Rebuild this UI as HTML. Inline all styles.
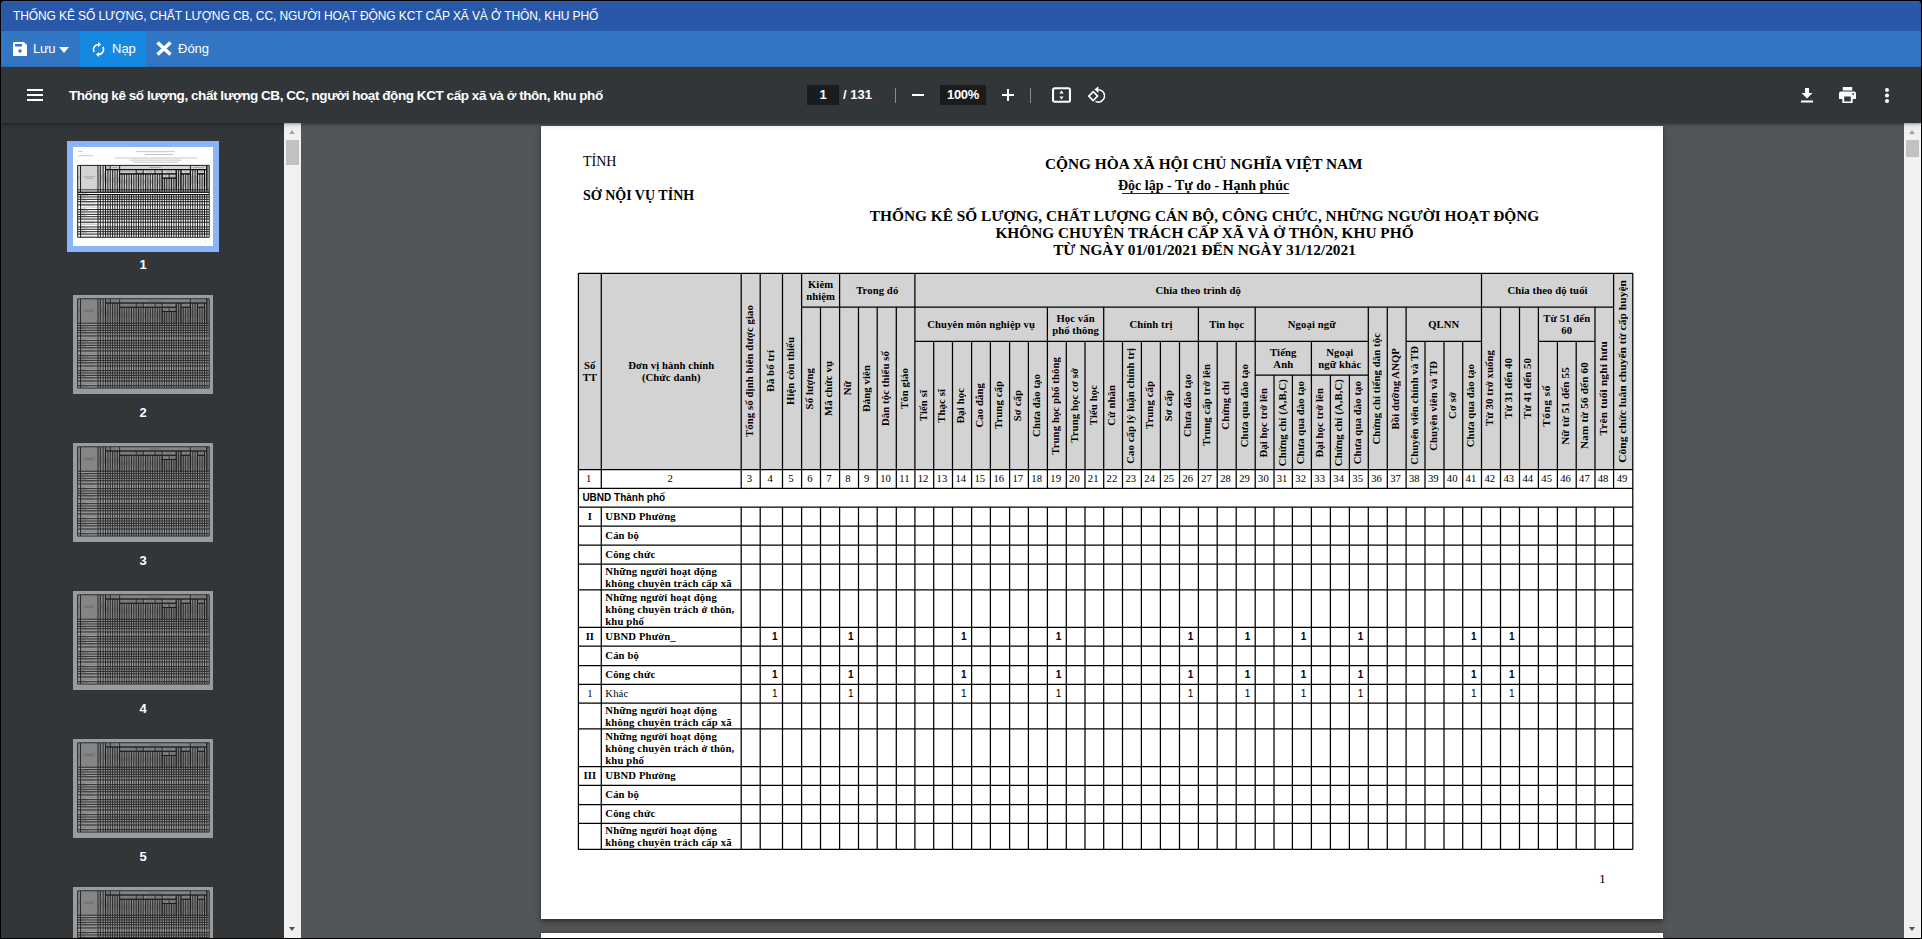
<!DOCTYPE html><html><head><meta charset="utf-8"><style>
*{box-sizing:border-box}
html,body{margin:0;padding:0}
body{width:1922px;height:939px;background:#000;position:relative;overflow:hidden;font-family:"Liberation Sans",sans-serif}
.abs{position:absolute}
#win{position:absolute;left:1px;top:1px;width:1920px;height:937px;border-radius:4px 4px 0 0;overflow:hidden;background:#525659}
#tbar{position:absolute;left:0;top:0;width:1920px;height:30px;background:#2a58a8;box-shadow:inset 1px 1px 0 #2c62b4;color:#fff;font-size:12px;letter-spacing:-0.1px;line-height:30px;padding-left:12px;white-space:nowrap}
#tools{position:absolute;left:0;top:30px;width:1920px;height:36px;background:#3276c4;color:#fff;font-size:13px}
#tools .btn{position:absolute;top:0;height:36px;line-height:36px;white-space:nowrap}
#vtb{position:absolute;left:0;top:66px;width:1920px;height:56px;background:#323639;color:#fff;z-index:5;box-shadow:0 1px 2px rgba(0,0,0,.3),0 2px 6px rgba(0,0,0,.15)}
#side{position:absolute;left:0;top:122px;width:283px;height:815px;background:#323639}
#main{position:absolute;left:300px;top:122px;width:1603px;height:815px;background:#525659;overflow:hidden}
.sb{position:absolute;top:122px;width:17px;height:815px;background:#f1f1f1;z-index:4}
.sb .up{position:absolute;left:5px;top:7px;width:0;height:0;border-left:3.5px solid transparent;border-right:3.5px solid transparent;border-bottom:4px solid #a3a3a3}
.sb .dn{position:absolute;left:5px;bottom:7px;width:0;height:0;border-left:3.5px solid transparent;border-right:3.5px solid transparent;border-top:4px solid #505050}
.sb .th{position:absolute;left:2px;width:13px;background:#c1c1c1}
.page{position:absolute;background:#fff;overflow:hidden}
.grid{position:absolute;left:0;top:0}
.hc{position:absolute;display:flex;align-items:center;justify-content:center;text-align:center;font-family:"Liberation Serif",serif;font-weight:bold;font-size:10.67px;line-height:12px;color:#000;letter-spacing:.1px}
.rot{writing-mode:vertical-rl;transform:rotate(180deg);white-space:nowrap;position:relative;left:-1.7px;letter-spacing:.12px}
.nc{position:absolute;display:flex;align-items:center;justify-content:center;font-family:"Liberation Serif",serif;font-size:10.67px;color:#000}
.rs{position:absolute;display:flex;align-items:center;font-family:"Liberation Sans",sans-serif;font-weight:bold;font-size:10px;color:#000;white-space:nowrap}
.rn{position:absolute;display:flex;align-items:center;justify-content:center;font-family:"Liberation Serif",serif;font-size:10.67px;color:#000}
.rl{position:absolute;display:flex;align-items:center;font-family:"Liberation Serif",serif;font-size:10.67px;line-height:12px;color:#000;white-space:nowrap;letter-spacing:.15px}
.rb{font-weight:bold}
.on,.onr{position:absolute;display:flex;align-items:center;justify-content:flex-end;padding-right:5px;font-family:"Liberation Sans",sans-serif;font-size:10px;color:#000}
.on{font-weight:bold}
.pt{position:absolute;font-family:"Liberation Serif",serif;color:#000;white-space:nowrap;line-height:1}
.pt.b{font-weight:bold}
.thumb{position:absolute;overflow:hidden;background:#fff}
.thumb .inner{position:absolute;left:0;top:0;width:1122px;height:793px;transform-origin:0 0}
.tlabel{position:absolute;width:40px;text-align:center;color:#fff;font-size:13px;font-weight:bold}
</style></head><body><div id="win"><div id="tbar">THỐNG KÊ SỐ LƯỢNG, CHẤT LƯỢNG CB, CC, NGƯỜI HOẠT ĐỘNG KCT CẤP XÃ VÀ Ở THÔN, KHU PHỐ</div><div id="tools"><div class="btn" style="left:12px"><svg width="14" height="14" style="position:absolute;left:0;top:11px" viewBox="0 0 14 14"><path d="M1 0h10l3 3v10a1 1 0 0 1-1 1H1a1 1 0 0 1-1-1V1a1 1 0 0 1 1-1z" fill="#fff"/><rect x="2" y="2" width="7" height="2.5" fill="#3276c4"/><circle cx="7" cy="9" r="1.8" fill="#3276c4"/></svg><span style="position:absolute;left:20px;letter-spacing:-0.3px">Lưu</span><svg width="10" height="6" style="position:absolute;left:46px;top:16px" viewBox="0 0 10 6"><path d="M0 0h10L5 6z" fill="#fff"/></svg></div><div class="btn" style="left:79px;width:66px;background:#1589e0"></div><div class="btn" style="left:91px"><svg width="13" height="15" style="position:absolute;left:0;top:11px" viewBox="0 0 13 15"><path d="M6.5 2.5a5 5 0 0 0-4.3 7.5M6.5 12.5a5 5 0 0 0 4.3-7.5" stroke="#fff" stroke-width="1.6" fill="none"/><path d="M6 0l3 2.5-3 2.5z M7 10l-3 2.5 3 2.5z" fill="#fff"/></svg><span style="position:absolute;left:20px">Nạp</span></div><div class="btn" style="left:155px"><svg width="16" height="15" style="position:absolute;left:0;top:10px" viewBox="0 0 16 15"><path d="M1.5 1.5l13 12M14.5 1.5l-13 12" stroke="#fff" stroke-width="3.6"/></svg><span style="position:absolute;left:22px">Đóng</span></div></div><div id="vtb"><svg class="abs" style="left:26px;top:21px" width="16" height="14" viewBox="0 0 16 14"><rect x="0" y="1" width="16" height="2" fill="#fff"/><rect x="0" y="6" width="16" height="2" fill="#fff"/><rect x="0" y="11" width="16" height="2" fill="#fff"/></svg><div class="abs" style="left:68px;top:0;height:57px;line-height:57px;font-size:13.5px;font-weight:bold;letter-spacing:-0.44px;white-space:nowrap">Thống kê số lượng, chất lượng CB, CC, người hoạt động KCT cấp xã và ở thôn, khu phố</div><div class="abs" style="left:806px;top:18px;width:32px;height:20px;background:#191b1c;text-align:center;line-height:20px;font-size:13px;font-weight:bold">1</div><div class="abs" style="left:842px;top:18px;height:20px;line-height:20px;font-size:13px;font-weight:bold">/ 131</div><div class="abs" style="left:894px;top:21px;width:1px;height:15px;background:#8a8d8f"></div><div class="abs" style="left:911px;top:27px;width:12px;height:2px;background:#fff"></div><div class="abs" style="left:939px;top:18px;width:46px;height:20px;background:#191b1c;text-align:center;line-height:20px;font-size:13px;font-weight:bold;letter-spacing:-0.3px">100%</div><div class="abs" style="left:1001px;top:27px;width:12px;height:2px;background:#fff"></div><div class="abs" style="left:1006px;top:22px;width:2px;height:12px;background:#fff"></div><div class="abs" style="left:1029px;top:21px;width:1px;height:15px;background:#8a8d8f"></div><svg class="abs" style="left:1050.5px;top:20px" width="19" height="16" viewBox="0 0 19 16"><rect x="1.05" y="1.2" width="16.9" height="13.6" rx="1.6" stroke="#fff" stroke-width="2.1" fill="none"/><path d="M9.5 3.6l2.2 2.9h-4.4z M9.5 12.4l2.2-2.9h-4.4z" fill="#fff"/></svg><svg class="abs" style="left:1087px;top:18.5px" width="20" height="19" viewBox="0 -0.5 20 19"><path d="M0.8 9.6L5.2 5.2L9.6 9.6L5.2 14Z" stroke="#fff" stroke-width="1.6" fill="none"/><path d="M10.3 3.2A6.2 6.2 0 1 1 7.5 14.9" stroke="#fff" stroke-width="1.6" fill="none"/><path d="M6.4 3.1L10.4 -0.2V6.4Z" fill="#fff"/></svg><svg class="abs" style="left:1799px;top:20px" width="14" height="16" viewBox="0 0 14 16"><path d="M5 1h4v5h3.5L7 11.5 1.5 6H5z" fill="#fff"/><rect x="1" y="13.5" width="12" height="2" fill="#fff"/></svg><svg class="abs" style="left:1838px;top:20px" width="17" height="16" viewBox="0 0 18 16" preserveAspectRatio="none"><rect x="4" y="0" width="10" height="3.5" fill="#fff"/><path d="M2 4.5h14a2 2 0 0 1 2 2V12h-3.5v4h-11v-4H0V6.5a2 2 0 0 1 2-2z" fill="#fff"/><rect x="5.5" y="9.5" width="7" height="5" fill="#323639"/><circle cx="15" cy="7" r="1" fill="#323639"/></svg><svg class="abs" style="left:1882px;top:20px" width="8" height="17" viewBox="0 0 8 17"><circle cx="4" cy="3" r="2" fill="#fff"/><circle cx="4" cy="8.5" r="2" fill="#fff"/><circle cx="4" cy="14" r="2" fill="#fff"/></svg></div><div id="side"><svg width="0" height="0" style="position:absolute"><defs><g id="tp1"><rect x="37.40" y="147.30" width="1054.40" height="196.30" fill="#d3d3d3"/><path d="M37.40 147.30L60.30 147.30M37.40 343.60L60.30 343.60M37.40 147.30L37.40 343.60M60.30 147.30L60.30 343.60M60.30 147.30L200.20 147.30M60.30 343.60L200.20 343.60M200.20 147.30L200.20 343.60M200.20 147.30L219.20 147.30M200.20 343.60L219.20 343.60M219.20 147.30L219.20 343.60M219.20 147.30L241.50 147.30M219.20 343.60L241.50 343.60M241.50 147.30L241.50 343.60M241.50 147.30L260.60 147.30M241.50 343.60L260.60 343.60M260.60 147.30L260.60 343.60M260.60 147.30L298.60 147.30M260.60 181.20L298.60 181.20M260.60 147.30L260.60 181.20M298.60 147.30L298.60 181.20M298.60 147.30L373.90 147.30M298.60 181.20L373.90 181.20M373.90 147.30L373.90 181.20M373.90 147.30L940.50 147.30M373.90 181.20L940.50 181.20M940.50 147.30L940.50 181.20M940.50 147.30L1072.60 147.30M940.50 181.20L1072.60 181.20M1072.60 147.30L1072.60 181.20M1072.60 147.30L1091.80 147.30M1072.60 343.60L1091.80 343.60M1072.60 147.30L1072.60 343.60M1091.80 147.30L1091.80 343.60M260.60 181.20L279.50 181.20M260.60 343.60L279.50 343.60M260.60 181.20L260.60 343.60M279.50 181.20L279.50 343.60M279.50 181.20L298.60 181.20M279.50 343.60L298.60 343.60M298.60 181.20L298.60 343.60M298.60 181.20L317.50 181.20M298.60 343.60L317.50 343.60M317.50 181.20L317.50 343.60M317.50 181.20L336.20 181.20M317.50 343.60L336.20 343.60M336.20 181.20L336.20 343.60M336.20 181.20L355.30 181.20M336.20 343.60L355.30 343.60M355.30 181.20L355.30 343.60M355.30 181.20L373.90 181.20M355.30 343.60L373.90 343.60M373.90 181.20L373.90 343.60M373.90 181.20L506.40 181.20M373.90 215.30L506.40 215.30M373.90 181.20L373.90 215.30M506.40 181.20L506.40 215.30M506.40 181.20L562.70 181.20M506.40 215.30L562.70 215.30M562.70 181.20L562.70 215.30M562.70 181.20L657.40 181.20M562.70 215.30L657.40 215.30M657.40 181.20L657.40 215.30M657.40 181.20L714.20 181.20M657.40 215.30L714.20 215.30M714.20 181.20L714.20 215.30M714.20 181.20L827.30 181.20M714.20 215.30L827.30 215.30M827.30 181.20L827.30 215.30M827.30 181.20L846.30 181.20M827.30 343.60L846.30 343.60M827.30 181.20L827.30 343.60M846.30 181.20L846.30 343.60M846.30 181.20L865.10 181.20M846.30 343.60L865.10 343.60M865.10 181.20L865.10 343.60M865.10 181.20L940.50 181.20M865.10 215.30L940.50 215.30M865.10 181.20L865.10 215.30M940.50 181.20L940.50 215.30M940.50 181.20L959.50 181.20M940.50 343.60L959.50 343.60M940.50 181.20L940.50 343.60M959.50 181.20L959.50 343.60M959.50 181.20L978.50 181.20M959.50 343.60L978.50 343.60M978.50 181.20L978.50 343.60M978.50 181.20L997.40 181.20M978.50 343.60L997.40 343.60M997.40 181.20L997.40 343.60M997.40 181.20L1054.00 181.20M997.40 215.30L1054.00 215.30M997.40 181.20L997.40 215.30M1054.00 181.20L1054.00 215.30M1054.00 181.20L1072.60 181.20M1054.00 343.60L1072.60 343.60M1054.00 181.20L1054.00 343.60M1072.60 181.20L1072.60 343.60M373.90 215.30L392.70 215.30M373.90 343.60L392.70 343.60M373.90 215.30L373.90 343.60M392.70 215.30L392.70 343.60M392.70 215.30L411.50 215.30M392.70 343.60L411.50 343.60M411.50 215.30L411.50 343.60M411.50 215.30L430.60 215.30M411.50 343.60L430.60 343.60M430.60 215.30L430.60 343.60M430.60 215.30L449.40 215.30M430.60 343.60L449.40 343.60M449.40 215.30L449.40 343.60M449.40 215.30L468.60 215.30M449.40 343.60L468.60 343.60M468.60 215.30L468.60 343.60M468.60 215.30L487.40 215.30M468.60 343.60L487.40 343.60M487.40 215.30L487.40 343.60M487.40 215.30L506.40 215.30M487.40 343.60L506.40 343.60M506.40 215.30L506.40 343.60M506.40 215.30L525.30 215.30M506.40 343.60L525.30 343.60M525.30 215.30L525.30 343.60M525.30 215.30L544.00 215.30M525.30 343.60L544.00 343.60M544.00 215.30L544.00 343.60M544.00 215.30L562.70 215.30M544.00 343.60L562.70 343.60M562.70 215.30L562.70 343.60M562.70 215.30L581.50 215.30M562.70 343.60L581.50 343.60M581.50 215.30L581.50 343.60M581.50 215.30L600.40 215.30M581.50 343.60L600.40 343.60M600.40 215.30L600.40 343.60M600.40 215.30L619.40 215.30M600.40 343.60L619.40 343.60M619.40 215.30L619.40 343.60M619.40 215.30L638.50 215.30M619.40 343.60L638.50 343.60M638.50 215.30L638.50 343.60M638.50 215.30L657.40 215.30M638.50 343.60L657.40 343.60M657.40 215.30L657.40 343.60M657.40 215.30L676.20 215.30M657.40 343.60L676.20 343.60M676.20 215.30L676.20 343.60M676.20 215.30L695.20 215.30M676.20 343.60L695.20 343.60M695.20 215.30L695.20 343.60M695.20 215.30L714.20 215.30M695.20 343.60L714.20 343.60M714.20 215.30L714.20 343.60M865.10 215.30L884.00 215.30M865.10 343.60L884.00 343.60M865.10 215.30L865.10 343.60M884.00 215.30L884.00 343.60M884.00 215.30L903.00 215.30M884.00 343.60L903.00 343.60M903.00 215.30L903.00 343.60M903.00 215.30L921.70 215.30M903.00 343.60L921.70 343.60M921.70 215.30L921.70 343.60M921.70 215.30L940.50 215.30M921.70 343.60L940.50 343.60M940.50 215.30L940.50 343.60M997.40 215.30L1016.40 215.30M997.40 343.60L1016.40 343.60M997.40 215.30L997.40 343.60M1016.40 215.30L1016.40 343.60M1016.40 215.30L1035.20 215.30M1016.40 343.60L1035.20 343.60M1035.20 215.30L1035.20 343.60M1035.20 215.30L1054.00 215.30M1035.20 343.60L1054.00 343.60M1054.00 215.30L1054.00 343.60M714.20 215.30L770.40 215.30M714.20 249.10L770.40 249.10M714.20 215.30L714.20 249.10M770.40 215.30L770.40 249.10M770.40 215.30L827.30 215.30M770.40 249.10L827.30 249.10M827.30 215.30L827.30 249.10M714.20 249.10L733.00 249.10M714.20 343.60L733.00 343.60M714.20 249.10L714.20 343.60M733.00 249.10L733.00 343.60M733.00 249.10L751.40 249.10M733.00 343.60L751.40 343.60M751.40 249.10L751.40 343.60M751.40 249.10L770.40 249.10M751.40 343.60L770.40 343.60M770.40 249.10L770.40 343.60M770.40 249.10L789.40 249.10M770.40 343.60L789.40 343.60M789.40 249.10L789.40 343.60M789.40 249.10L808.40 249.10M789.40 343.60L808.40 343.60M808.40 249.10L808.40 343.60M808.40 249.10L827.30 249.10M808.40 343.60L827.30 343.60M827.30 249.10L827.30 343.60M37.40 362.30L60.30 362.30M37.40 343.60L37.40 362.30M60.30 343.60L60.30 362.30M60.30 362.30L200.20 362.30M200.20 343.60L200.20 362.30M200.20 362.30L219.20 362.30M219.20 343.60L219.20 362.30M219.20 362.30L241.50 362.30M241.50 343.60L241.50 362.30M241.50 362.30L260.60 362.30M260.60 343.60L260.60 362.30M260.60 362.30L279.50 362.30M279.50 343.60L279.50 362.30M279.50 362.30L298.60 362.30M298.60 343.60L298.60 362.30M298.60 362.30L317.50 362.30M317.50 343.60L317.50 362.30M317.50 362.30L336.20 362.30M336.20 343.60L336.20 362.30M336.20 362.30L355.30 362.30M355.30 343.60L355.30 362.30M355.30 362.30L373.90 362.30M373.90 343.60L373.90 362.30M373.90 362.30L392.70 362.30M392.70 343.60L392.70 362.30M392.70 362.30L411.50 362.30M411.50 343.60L411.50 362.30M411.50 362.30L430.60 362.30M430.60 343.60L430.60 362.30M430.60 362.30L449.40 362.30M449.40 343.60L449.40 362.30M449.40 362.30L468.60 362.30M468.60 343.60L468.60 362.30M468.60 362.30L487.40 362.30M487.40 343.60L487.40 362.30M487.40 362.30L506.40 362.30M506.40 343.60L506.40 362.30M506.40 362.30L525.30 362.30M525.30 343.60L525.30 362.30M525.30 362.30L544.00 362.30M544.00 343.60L544.00 362.30M544.00 362.30L562.70 362.30M562.70 343.60L562.70 362.30M562.70 362.30L581.50 362.30M581.50 343.60L581.50 362.30M581.50 362.30L600.40 362.30M600.40 343.60L600.40 362.30M600.40 362.30L619.40 362.30M619.40 343.60L619.40 362.30M619.40 362.30L638.50 362.30M638.50 343.60L638.50 362.30M638.50 362.30L657.40 362.30M657.40 343.60L657.40 362.30M657.40 362.30L676.20 362.30M676.20 343.60L676.20 362.30M676.20 362.30L695.20 362.30M695.20 343.60L695.20 362.30M695.20 362.30L714.20 362.30M714.20 343.60L714.20 362.30M714.20 362.30L733.00 362.30M733.00 343.60L733.00 362.30M733.00 362.30L751.40 362.30M751.40 343.60L751.40 362.30M751.40 362.30L770.40 362.30M770.40 343.60L770.40 362.30M770.40 362.30L789.40 362.30M789.40 343.60L789.40 362.30M789.40 362.30L808.40 362.30M808.40 343.60L808.40 362.30M808.40 362.30L827.30 362.30M827.30 343.60L827.30 362.30M827.30 362.30L846.30 362.30M846.30 343.60L846.30 362.30M846.30 362.30L865.10 362.30M865.10 343.60L865.10 362.30M865.10 362.30L884.00 362.30M884.00 343.60L884.00 362.30M884.00 362.30L903.00 362.30M903.00 343.60L903.00 362.30M903.00 362.30L921.70 362.30M921.70 343.60L921.70 362.30M921.70 362.30L940.50 362.30M940.50 343.60L940.50 362.30M940.50 362.30L959.50 362.30M959.50 343.60L959.50 362.30M959.50 362.30L978.50 362.30M978.50 343.60L978.50 362.30M978.50 362.30L997.40 362.30M997.40 343.60L997.40 362.30M997.40 362.30L1016.40 362.30M1016.40 343.60L1016.40 362.30M1016.40 362.30L1035.20 362.30M1035.20 343.60L1035.20 362.30M1035.20 362.30L1054.00 362.30M1054.00 343.60L1054.00 362.30M1054.00 362.30L1072.60 362.30M1072.60 343.60L1072.60 362.30M1072.60 362.30L1091.80 362.30M1091.80 343.60L1091.80 362.30M37.40 362.30L1091.80 362.30M37.40 381.10L1091.80 381.10M37.40 362.30L37.40 381.10M1091.80 362.30L1091.80 381.10M37.40 381.10L60.30 381.10M37.40 400.20L60.30 400.20M37.40 381.10L37.40 400.20M60.30 381.10L60.30 400.20M60.30 381.10L200.20 381.10M60.30 400.20L200.20 400.20M200.20 381.10L200.20 400.20M200.20 381.10L219.20 381.10M200.20 400.20L219.20 400.20M219.20 381.10L219.20 400.20M219.20 381.10L241.50 381.10M219.20 400.20L241.50 400.20M241.50 381.10L241.50 400.20M241.50 381.10L260.60 381.10M241.50 400.20L260.60 400.20M260.60 381.10L260.60 400.20M260.60 381.10L279.50 381.10M260.60 400.20L279.50 400.20M279.50 381.10L279.50 400.20M279.50 381.10L298.60 381.10M279.50 400.20L298.60 400.20M298.60 381.10L298.60 400.20M298.60 381.10L317.50 381.10M298.60 400.20L317.50 400.20M317.50 381.10L317.50 400.20M317.50 381.10L336.20 381.10M317.50 400.20L336.20 400.20M336.20 381.10L336.20 400.20M336.20 381.10L355.30 381.10M336.20 400.20L355.30 400.20M355.30 381.10L355.30 400.20M355.30 381.10L373.90 381.10M355.30 400.20L373.90 400.20M373.90 381.10L373.90 400.20M373.90 381.10L392.70 381.10M373.90 400.20L392.70 400.20M392.70 381.10L392.70 400.20M392.70 381.10L411.50 381.10M392.70 400.20L411.50 400.20M411.50 381.10L411.50 400.20M411.50 381.10L430.60 381.10M411.50 400.20L430.60 400.20M430.60 381.10L430.60 400.20M430.60 381.10L449.40 381.10M430.60 400.20L449.40 400.20M449.40 381.10L449.40 400.20M449.40 381.10L468.60 381.10M449.40 400.20L468.60 400.20M468.60 381.10L468.60 400.20M468.60 381.10L487.40 381.10M468.60 400.20L487.40 400.20M487.40 381.10L487.40 400.20M487.40 381.10L506.40 381.10M487.40 400.20L506.40 400.20M506.40 381.10L506.40 400.20M506.40 381.10L525.30 381.10M506.40 400.20L525.30 400.20M525.30 381.10L525.30 400.20M525.30 381.10L544.00 381.10M525.30 400.20L544.00 400.20M544.00 381.10L544.00 400.20M544.00 381.10L562.70 381.10M544.00 400.20L562.70 400.20M562.70 381.10L562.70 400.20M562.70 381.10L581.50 381.10M562.70 400.20L581.50 400.20M581.50 381.10L581.50 400.20M581.50 381.10L600.40 381.10M581.50 400.20L600.40 400.20M600.40 381.10L600.40 400.20M600.40 381.10L619.40 381.10M600.40 400.20L619.40 400.20M619.40 381.10L619.40 400.20M619.40 381.10L638.50 381.10M619.40 400.20L638.50 400.20M638.50 381.10L638.50 400.20M638.50 381.10L657.40 381.10M638.50 400.20L657.40 400.20M657.40 381.10L657.40 400.20M657.40 381.10L676.20 381.10M657.40 400.20L676.20 400.20M676.20 381.10L676.20 400.20M676.20 381.10L695.20 381.10M676.20 400.20L695.20 400.20M695.20 381.10L695.20 400.20M695.20 381.10L714.20 381.10M695.20 400.20L714.20 400.20M714.20 381.10L714.20 400.20M714.20 381.10L733.00 381.10M714.20 400.20L733.00 400.20M733.00 381.10L733.00 400.20M733.00 381.10L751.40 381.10M733.00 400.20L751.40 400.20M751.40 381.10L751.40 400.20M751.40 381.10L770.40 381.10M751.40 400.20L770.40 400.20M770.40 381.10L770.40 400.20M770.40 381.10L789.40 381.10M770.40 400.20L789.40 400.20M789.40 381.10L789.40 400.20M789.40 381.10L808.40 381.10M789.40 400.20L808.40 400.20M808.40 381.10L808.40 400.20M808.40 381.10L827.30 381.10M808.40 400.20L827.30 400.20M827.30 381.10L827.30 400.20M827.30 381.10L846.30 381.10M827.30 400.20L846.30 400.20M846.30 381.10L846.30 400.20M846.30 381.10L865.10 381.10M846.30 400.20L865.10 400.20M865.10 381.10L865.10 400.20M865.10 381.10L884.00 381.10M865.10 400.20L884.00 400.20M884.00 381.10L884.00 400.20M884.00 381.10L903.00 381.10M884.00 400.20L903.00 400.20M903.00 381.10L903.00 400.20M903.00 381.10L921.70 381.10M903.00 400.20L921.70 400.20M921.70 381.10L921.70 400.20M921.70 381.10L940.50 381.10M921.70 400.20L940.50 400.20M940.50 381.10L940.50 400.20M940.50 381.10L959.50 381.10M940.50 400.20L959.50 400.20M959.50 381.10L959.50 400.20M959.50 381.10L978.50 381.10M959.50 400.20L978.50 400.20M978.50 381.10L978.50 400.20M978.50 381.10L997.40 381.10M978.50 400.20L997.40 400.20M997.40 381.10L997.40 400.20M997.40 381.10L1016.40 381.10M997.40 400.20L1016.40 400.20M1016.40 381.10L1016.40 400.20M1016.40 381.10L1035.20 381.10M1016.40 400.20L1035.20 400.20M1035.20 381.10L1035.20 400.20M1035.20 381.10L1054.00 381.10M1035.20 400.20L1054.00 400.20M1054.00 381.10L1054.00 400.20M1054.00 381.10L1072.60 381.10M1054.00 400.20L1072.60 400.20M1072.60 381.10L1072.60 400.20M1072.60 381.10L1091.80 381.10M1072.60 400.20L1091.80 400.20M1091.80 381.10L1091.80 400.20M37.40 419.20L60.30 419.20M37.40 400.20L37.40 419.20M60.30 400.20L60.30 419.20M60.30 419.20L200.20 419.20M200.20 400.20L200.20 419.20M200.20 419.20L219.20 419.20M219.20 400.20L219.20 419.20M219.20 419.20L241.50 419.20M241.50 400.20L241.50 419.20M241.50 419.20L260.60 419.20M260.60 400.20L260.60 419.20M260.60 419.20L279.50 419.20M279.50 400.20L279.50 419.20M279.50 419.20L298.60 419.20M298.60 400.20L298.60 419.20M298.60 419.20L317.50 419.20M317.50 400.20L317.50 419.20M317.50 419.20L336.20 419.20M336.20 400.20L336.20 419.20M336.20 419.20L355.30 419.20M355.30 400.20L355.30 419.20M355.30 419.20L373.90 419.20M373.90 400.20L373.90 419.20M373.90 419.20L392.70 419.20M392.70 400.20L392.70 419.20M392.70 419.20L411.50 419.20M411.50 400.20L411.50 419.20M411.50 419.20L430.60 419.20M430.60 400.20L430.60 419.20M430.60 419.20L449.40 419.20M449.40 400.20L449.40 419.20M449.40 419.20L468.60 419.20M468.60 400.20L468.60 419.20M468.60 419.20L487.40 419.20M487.40 400.20L487.40 419.20M487.40 419.20L506.40 419.20M506.40 400.20L506.40 419.20M506.40 419.20L525.30 419.20M525.30 400.20L525.30 419.20M525.30 419.20L544.00 419.20M544.00 400.20L544.00 419.20M544.00 419.20L562.70 419.20M562.70 400.20L562.70 419.20M562.70 419.20L581.50 419.20M581.50 400.20L581.50 419.20M581.50 419.20L600.40 419.20M600.40 400.20L600.40 419.20M600.40 419.20L619.40 419.20M619.40 400.20L619.40 419.20M619.40 419.20L638.50 419.20M638.50 400.20L638.50 419.20M638.50 419.20L657.40 419.20M657.40 400.20L657.40 419.20M657.40 419.20L676.20 419.20M676.20 400.20L676.20 419.20M676.20 419.20L695.20 419.20M695.20 400.20L695.20 419.20M695.20 419.20L714.20 419.20M714.20 400.20L714.20 419.20M714.20 419.20L733.00 419.20M733.00 400.20L733.00 419.20M733.00 419.20L751.40 419.20M751.40 400.20L751.40 419.20M751.40 419.20L770.40 419.20M770.40 400.20L770.40 419.20M770.40 419.20L789.40 419.20M789.40 400.20L789.40 419.20M789.40 419.20L808.40 419.20M808.40 400.20L808.40 419.20M808.40 419.20L827.30 419.20M827.30 400.20L827.30 419.20M827.30 419.20L846.30 419.20M846.30 400.20L846.30 419.20M846.30 419.20L865.10 419.20M865.10 400.20L865.10 419.20M865.10 419.20L884.00 419.20M884.00 400.20L884.00 419.20M884.00 419.20L903.00 419.20M903.00 400.20L903.00 419.20M903.00 419.20L921.70 419.20M921.70 400.20L921.70 419.20M921.70 419.20L940.50 419.20M940.50 400.20L940.50 419.20M940.50 419.20L959.50 419.20M959.50 400.20L959.50 419.20M959.50 419.20L978.50 419.20M978.50 400.20L978.50 419.20M978.50 419.20L997.40 419.20M997.40 400.20L997.40 419.20M997.40 419.20L1016.40 419.20M1016.40 400.20L1016.40 419.20M1016.40 419.20L1035.20 419.20M1035.20 400.20L1035.20 419.20M1035.20 419.20L1054.00 419.20M1054.00 400.20L1054.00 419.20M1054.00 419.20L1072.60 419.20M1072.60 400.20L1072.60 419.20M1072.60 419.20L1091.80 419.20M1091.80 400.20L1091.80 419.20M37.40 438.00L60.30 438.00M37.40 419.20L37.40 438.00M60.30 419.20L60.30 438.00M60.30 438.00L200.20 438.00M200.20 419.20L200.20 438.00M200.20 438.00L219.20 438.00M219.20 419.20L219.20 438.00M219.20 438.00L241.50 438.00M241.50 419.20L241.50 438.00M241.50 438.00L260.60 438.00M260.60 419.20L260.60 438.00M260.60 438.00L279.50 438.00M279.50 419.20L279.50 438.00M279.50 438.00L298.60 438.00M298.60 419.20L298.60 438.00M298.60 438.00L317.50 438.00M317.50 419.20L317.50 438.00M317.50 438.00L336.20 438.00M336.20 419.20L336.20 438.00M336.20 438.00L355.30 438.00M355.30 419.20L355.30 438.00M355.30 438.00L373.90 438.00M373.90 419.20L373.90 438.00M373.90 438.00L392.70 438.00M392.70 419.20L392.70 438.00M392.70 438.00L411.50 438.00M411.50 419.20L411.50 438.00M411.50 438.00L430.60 438.00M430.60 419.20L430.60 438.00M430.60 438.00L449.40 438.00M449.40 419.20L449.40 438.00M449.40 438.00L468.60 438.00M468.60 419.20L468.60 438.00M468.60 438.00L487.40 438.00M487.40 419.20L487.40 438.00M487.40 438.00L506.40 438.00M506.40 419.20L506.40 438.00M506.40 438.00L525.30 438.00M525.30 419.20L525.30 438.00M525.30 438.00L544.00 438.00M544.00 419.20L544.00 438.00M544.00 438.00L562.70 438.00M562.70 419.20L562.70 438.00M562.70 438.00L581.50 438.00M581.50 419.20L581.50 438.00M581.50 438.00L600.40 438.00M600.40 419.20L600.40 438.00M600.40 438.00L619.40 438.00M619.40 419.20L619.40 438.00M619.40 438.00L638.50 438.00M638.50 419.20L638.50 438.00M638.50 438.00L657.40 438.00M657.40 419.20L657.40 438.00M657.40 438.00L676.20 438.00M676.20 419.20L676.20 438.00M676.20 438.00L695.20 438.00M695.20 419.20L695.20 438.00M695.20 438.00L714.20 438.00M714.20 419.20L714.20 438.00M714.20 438.00L733.00 438.00M733.00 419.20L733.00 438.00M733.00 438.00L751.40 438.00M751.40 419.20L751.40 438.00M751.40 438.00L770.40 438.00M770.40 419.20L770.40 438.00M770.40 438.00L789.40 438.00M789.40 419.20L789.40 438.00M789.40 438.00L808.40 438.00M808.40 419.20L808.40 438.00M808.40 438.00L827.30 438.00M827.30 419.20L827.30 438.00M827.30 438.00L846.30 438.00M846.30 419.20L846.30 438.00M846.30 438.00L865.10 438.00M865.10 419.20L865.10 438.00M865.10 438.00L884.00 438.00M884.00 419.20L884.00 438.00M884.00 438.00L903.00 438.00M903.00 419.20L903.00 438.00M903.00 438.00L921.70 438.00M921.70 419.20L921.70 438.00M921.70 438.00L940.50 438.00M940.50 419.20L940.50 438.00M940.50 438.00L959.50 438.00M959.50 419.20L959.50 438.00M959.50 438.00L978.50 438.00M978.50 419.20L978.50 438.00M978.50 438.00L997.40 438.00M997.40 419.20L997.40 438.00M997.40 438.00L1016.40 438.00M1016.40 419.20L1016.40 438.00M1016.40 438.00L1035.20 438.00M1035.20 419.20L1035.20 438.00M1035.20 438.00L1054.00 438.00M1054.00 419.20L1054.00 438.00M1054.00 438.00L1072.60 438.00M1072.60 419.20L1072.60 438.00M1072.60 438.00L1091.80 438.00M1091.80 419.20L1091.80 438.00M37.40 463.80L60.30 463.80M37.40 438.00L37.40 463.80M60.30 438.00L60.30 463.80M60.30 463.80L200.20 463.80M200.20 438.00L200.20 463.80M200.20 463.80L219.20 463.80M219.20 438.00L219.20 463.80M219.20 463.80L241.50 463.80M241.50 438.00L241.50 463.80M241.50 463.80L260.60 463.80M260.60 438.00L260.60 463.80M260.60 463.80L279.50 463.80M279.50 438.00L279.50 463.80M279.50 463.80L298.60 463.80M298.60 438.00L298.60 463.80M298.60 463.80L317.50 463.80M317.50 438.00L317.50 463.80M317.50 463.80L336.20 463.80M336.20 438.00L336.20 463.80M336.20 463.80L355.30 463.80M355.30 438.00L355.30 463.80M355.30 463.80L373.90 463.80M373.90 438.00L373.90 463.80M373.90 463.80L392.70 463.80M392.70 438.00L392.70 463.80M392.70 463.80L411.50 463.80M411.50 438.00L411.50 463.80M411.50 463.80L430.60 463.80M430.60 438.00L430.60 463.80M430.60 463.80L449.40 463.80M449.40 438.00L449.40 463.80M449.40 463.80L468.60 463.80M468.60 438.00L468.60 463.80M468.60 463.80L487.40 463.80M487.40 438.00L487.40 463.80M487.40 463.80L506.40 463.80M506.40 438.00L506.40 463.80M506.40 463.80L525.30 463.80M525.30 438.00L525.30 463.80M525.30 463.80L544.00 463.80M544.00 438.00L544.00 463.80M544.00 463.80L562.70 463.80M562.70 438.00L562.70 463.80M562.70 463.80L581.50 463.80M581.50 438.00L581.50 463.80M581.50 463.80L600.40 463.80M600.40 438.00L600.40 463.80M600.40 463.80L619.40 463.80M619.40 438.00L619.40 463.80M619.40 463.80L638.50 463.80M638.50 438.00L638.50 463.80M638.50 463.80L657.40 463.80M657.40 438.00L657.40 463.80M657.40 463.80L676.20 463.80M676.20 438.00L676.20 463.80M676.20 463.80L695.20 463.80M695.20 438.00L695.20 463.80M695.20 463.80L714.20 463.80M714.20 438.00L714.20 463.80M714.20 463.80L733.00 463.80M733.00 438.00L733.00 463.80M733.00 463.80L751.40 463.80M751.40 438.00L751.40 463.80M751.40 463.80L770.40 463.80M770.40 438.00L770.40 463.80M770.40 463.80L789.40 463.80M789.40 438.00L789.40 463.80M789.40 463.80L808.40 463.80M808.40 438.00L808.40 463.80M808.40 463.80L827.30 463.80M827.30 438.00L827.30 463.80M827.30 463.80L846.30 463.80M846.30 438.00L846.30 463.80M846.30 463.80L865.10 463.80M865.10 438.00L865.10 463.80M865.10 463.80L884.00 463.80M884.00 438.00L884.00 463.80M884.00 463.80L903.00 463.80M903.00 438.00L903.00 463.80M903.00 463.80L921.70 463.80M921.70 438.00L921.70 463.80M921.70 463.80L940.50 463.80M940.50 438.00L940.50 463.80M940.50 463.80L959.50 463.80M959.50 438.00L959.50 463.80M959.50 463.80L978.50 463.80M978.50 438.00L978.50 463.80M978.50 463.80L997.40 463.80M997.40 438.00L997.40 463.80M997.40 463.80L1016.40 463.80M1016.40 438.00L1016.40 463.80M1016.40 463.80L1035.20 463.80M1035.20 438.00L1035.20 463.80M1035.20 463.80L1054.00 463.80M1054.00 438.00L1054.00 463.80M1054.00 463.80L1072.60 463.80M1072.60 438.00L1072.60 463.80M1072.60 463.80L1091.80 463.80M1091.80 438.00L1091.80 463.80M37.40 501.40L60.30 501.40M37.40 463.80L37.40 501.40M60.30 463.80L60.30 501.40M60.30 501.40L200.20 501.40M200.20 463.80L200.20 501.40M200.20 501.40L219.20 501.40M219.20 463.80L219.20 501.40M219.20 501.40L241.50 501.40M241.50 463.80L241.50 501.40M241.50 501.40L260.60 501.40M260.60 463.80L260.60 501.40M260.60 501.40L279.50 501.40M279.50 463.80L279.50 501.40M279.50 501.40L298.60 501.40M298.60 463.80L298.60 501.40M298.60 501.40L317.50 501.40M317.50 463.80L317.50 501.40M317.50 501.40L336.20 501.40M336.20 463.80L336.20 501.40M336.20 501.40L355.30 501.40M355.30 463.80L355.30 501.40M355.30 501.40L373.90 501.40M373.90 463.80L373.90 501.40M373.90 501.40L392.70 501.40M392.70 463.80L392.70 501.40M392.70 501.40L411.50 501.40M411.50 463.80L411.50 501.40M411.50 501.40L430.60 501.40M430.60 463.80L430.60 501.40M430.60 501.40L449.40 501.40M449.40 463.80L449.40 501.40M449.40 501.40L468.60 501.40M468.60 463.80L468.60 501.40M468.60 501.40L487.40 501.40M487.40 463.80L487.40 501.40M487.40 501.40L506.40 501.40M506.40 463.80L506.40 501.40M506.40 501.40L525.30 501.40M525.30 463.80L525.30 501.40M525.30 501.40L544.00 501.40M544.00 463.80L544.00 501.40M544.00 501.40L562.70 501.40M562.70 463.80L562.70 501.40M562.70 501.40L581.50 501.40M581.50 463.80L581.50 501.40M581.50 501.40L600.40 501.40M600.40 463.80L600.40 501.40M600.40 501.40L619.40 501.40M619.40 463.80L619.40 501.40M619.40 501.40L638.50 501.40M638.50 463.80L638.50 501.40M638.50 501.40L657.40 501.40M657.40 463.80L657.40 501.40M657.40 501.40L676.20 501.40M676.20 463.80L676.20 501.40M676.20 501.40L695.20 501.40M695.20 463.80L695.20 501.40M695.20 501.40L714.20 501.40M714.20 463.80L714.20 501.40M714.20 501.40L733.00 501.40M733.00 463.80L733.00 501.40M733.00 501.40L751.40 501.40M751.40 463.80L751.40 501.40M751.40 501.40L770.40 501.40M770.40 463.80L770.40 501.40M770.40 501.40L789.40 501.40M789.40 463.80L789.40 501.40M789.40 501.40L808.40 501.40M808.40 463.80L808.40 501.40M808.40 501.40L827.30 501.40M827.30 463.80L827.30 501.40M827.30 501.40L846.30 501.40M846.30 463.80L846.30 501.40M846.30 501.40L865.10 501.40M865.10 463.80L865.10 501.40M865.10 501.40L884.00 501.40M884.00 463.80L884.00 501.40M884.00 501.40L903.00 501.40M903.00 463.80L903.00 501.40M903.00 501.40L921.70 501.40M921.70 463.80L921.70 501.40M921.70 501.40L940.50 501.40M940.50 463.80L940.50 501.40M940.50 501.40L959.50 501.40M959.50 463.80L959.50 501.40M959.50 501.40L978.50 501.40M978.50 463.80L978.50 501.40M978.50 501.40L997.40 501.40M997.40 463.80L997.40 501.40M997.40 501.40L1016.40 501.40M1016.40 463.80L1016.40 501.40M1016.40 501.40L1035.20 501.40M1035.20 463.80L1035.20 501.40M1035.20 501.40L1054.00 501.40M1054.00 463.80L1054.00 501.40M1054.00 501.40L1072.60 501.40M1072.60 463.80L1072.60 501.40M1072.60 501.40L1091.80 501.40M1091.80 463.80L1091.80 501.40M37.40 520.10L60.30 520.10M37.40 501.40L37.40 520.10M60.30 501.40L60.30 520.10M60.30 520.10L200.20 520.10M200.20 501.40L200.20 520.10M200.20 520.10L219.20 520.10M219.20 501.40L219.20 520.10M219.20 520.10L241.50 520.10M241.50 501.40L241.50 520.10M241.50 520.10L260.60 520.10M260.60 501.40L260.60 520.10M260.60 520.10L279.50 520.10M279.50 501.40L279.50 520.10M279.50 520.10L298.60 520.10M298.60 501.40L298.60 520.10M298.60 520.10L317.50 520.10M317.50 501.40L317.50 520.10M317.50 520.10L336.20 520.10M336.20 501.40L336.20 520.10M336.20 520.10L355.30 520.10M355.30 501.40L355.30 520.10M355.30 520.10L373.90 520.10M373.90 501.40L373.90 520.10M373.90 520.10L392.70 520.10M392.70 501.40L392.70 520.10M392.70 520.10L411.50 520.10M411.50 501.40L411.50 520.10M411.50 520.10L430.60 520.10M430.60 501.40L430.60 520.10M430.60 520.10L449.40 520.10M449.40 501.40L449.40 520.10M449.40 520.10L468.60 520.10M468.60 501.40L468.60 520.10M468.60 520.10L487.40 520.10M487.40 501.40L487.40 520.10M487.40 520.10L506.40 520.10M506.40 501.40L506.40 520.10M506.40 520.10L525.30 520.10M525.30 501.40L525.30 520.10M525.30 520.10L544.00 520.10M544.00 501.40L544.00 520.10M544.00 520.10L562.70 520.10M562.70 501.40L562.70 520.10M562.70 520.10L581.50 520.10M581.50 501.40L581.50 520.10M581.50 520.10L600.40 520.10M600.40 501.40L600.40 520.10M600.40 520.10L619.40 520.10M619.40 501.40L619.40 520.10M619.40 520.10L638.50 520.10M638.50 501.40L638.50 520.10M638.50 520.10L657.40 520.10M657.40 501.40L657.40 520.10M657.40 520.10L676.20 520.10M676.20 501.40L676.20 520.10M676.20 520.10L695.20 520.10M695.20 501.40L695.20 520.10M695.20 520.10L714.20 520.10M714.20 501.40L714.20 520.10M714.20 520.10L733.00 520.10M733.00 501.40L733.00 520.10M733.00 520.10L751.40 520.10M751.40 501.40L751.40 520.10M751.40 520.10L770.40 520.10M770.40 501.40L770.40 520.10M770.40 520.10L789.40 520.10M789.40 501.40L789.40 520.10M789.40 520.10L808.40 520.10M808.40 501.40L808.40 520.10M808.40 520.10L827.30 520.10M827.30 501.40L827.30 520.10M827.30 520.10L846.30 520.10M846.30 501.40L846.30 520.10M846.30 520.10L865.10 520.10M865.10 501.40L865.10 520.10M865.10 520.10L884.00 520.10M884.00 501.40L884.00 520.10M884.00 520.10L903.00 520.10M903.00 501.40L903.00 520.10M903.00 520.10L921.70 520.10M921.70 501.40L921.70 520.10M921.70 520.10L940.50 520.10M940.50 501.40L940.50 520.10M940.50 520.10L959.50 520.10M959.50 501.40L959.50 520.10M959.50 520.10L978.50 520.10M978.50 501.40L978.50 520.10M978.50 520.10L997.40 520.10M997.40 501.40L997.40 520.10M997.40 520.10L1016.40 520.10M1016.40 501.40L1016.40 520.10M1016.40 520.10L1035.20 520.10M1035.20 501.40L1035.20 520.10M1035.20 520.10L1054.00 520.10M1054.00 501.40L1054.00 520.10M1054.00 520.10L1072.60 520.10M1072.60 501.40L1072.60 520.10M1072.60 520.10L1091.80 520.10M1091.80 501.40L1091.80 520.10M37.40 539.60L60.30 539.60M37.40 520.10L37.40 539.60M60.30 520.10L60.30 539.60M60.30 539.60L200.20 539.60M200.20 520.10L200.20 539.60M200.20 539.60L219.20 539.60M219.20 520.10L219.20 539.60M219.20 539.60L241.50 539.60M241.50 520.10L241.50 539.60M241.50 539.60L260.60 539.60M260.60 520.10L260.60 539.60M260.60 539.60L279.50 539.60M279.50 520.10L279.50 539.60M279.50 539.60L298.60 539.60M298.60 520.10L298.60 539.60M298.60 539.60L317.50 539.60M317.50 520.10L317.50 539.60M317.50 539.60L336.20 539.60M336.20 520.10L336.20 539.60M336.20 539.60L355.30 539.60M355.30 520.10L355.30 539.60M355.30 539.60L373.90 539.60M373.90 520.10L373.90 539.60M373.90 539.60L392.70 539.60M392.70 520.10L392.70 539.60M392.70 539.60L411.50 539.60M411.50 520.10L411.50 539.60M411.50 539.60L430.60 539.60M430.60 520.10L430.60 539.60M430.60 539.60L449.40 539.60M449.40 520.10L449.40 539.60M449.40 539.60L468.60 539.60M468.60 520.10L468.60 539.60M468.60 539.60L487.40 539.60M487.40 520.10L487.40 539.60M487.40 539.60L506.40 539.60M506.40 520.10L506.40 539.60M506.40 539.60L525.30 539.60M525.30 520.10L525.30 539.60M525.30 539.60L544.00 539.60M544.00 520.10L544.00 539.60M544.00 539.60L562.70 539.60M562.70 520.10L562.70 539.60M562.70 539.60L581.50 539.60M581.50 520.10L581.50 539.60M581.50 539.60L600.40 539.60M600.40 520.10L600.40 539.60M600.40 539.60L619.40 539.60M619.40 520.10L619.40 539.60M619.40 539.60L638.50 539.60M638.50 520.10L638.50 539.60M638.50 539.60L657.40 539.60M657.40 520.10L657.40 539.60M657.40 539.60L676.20 539.60M676.20 520.10L676.20 539.60M676.20 539.60L695.20 539.60M695.20 520.10L695.20 539.60M695.20 539.60L714.20 539.60M714.20 520.10L714.20 539.60M714.20 539.60L733.00 539.60M733.00 520.10L733.00 539.60M733.00 539.60L751.40 539.60M751.40 520.10L751.40 539.60M751.40 539.60L770.40 539.60M770.40 520.10L770.40 539.60M770.40 539.60L789.40 539.60M789.40 520.10L789.40 539.60M789.40 539.60L808.40 539.60M808.40 520.10L808.40 539.60M808.40 539.60L827.30 539.60M827.30 520.10L827.30 539.60M827.30 539.60L846.30 539.60M846.30 520.10L846.30 539.60M846.30 539.60L865.10 539.60M865.10 520.10L865.10 539.60M865.10 539.60L884.00 539.60M884.00 520.10L884.00 539.60M884.00 539.60L903.00 539.60M903.00 520.10L903.00 539.60M903.00 539.60L921.70 539.60M921.70 520.10L921.70 539.60M921.70 539.60L940.50 539.60M940.50 520.10L940.50 539.60M940.50 539.60L959.50 539.60M959.50 520.10L959.50 539.60M959.50 539.60L978.50 539.60M978.50 520.10L978.50 539.60M978.50 539.60L997.40 539.60M997.40 520.10L997.40 539.60M997.40 539.60L1016.40 539.60M1016.40 520.10L1016.40 539.60M1016.40 539.60L1035.20 539.60M1035.20 520.10L1035.20 539.60M1035.20 539.60L1054.00 539.60M1054.00 520.10L1054.00 539.60M1054.00 539.60L1072.60 539.60M1072.60 520.10L1072.60 539.60M1072.60 539.60L1091.80 539.60M1091.80 520.10L1091.80 539.60M37.40 558.40L60.30 558.40M37.40 539.60L37.40 558.40M60.30 539.60L60.30 558.40M60.30 558.40L200.20 558.40M200.20 539.60L200.20 558.40M200.20 558.40L219.20 558.40M219.20 539.60L219.20 558.40M219.20 558.40L241.50 558.40M241.50 539.60L241.50 558.40M241.50 558.40L260.60 558.40M260.60 539.60L260.60 558.40M260.60 558.40L279.50 558.40M279.50 539.60L279.50 558.40M279.50 558.40L298.60 558.40M298.60 539.60L298.60 558.40M298.60 558.40L317.50 558.40M317.50 539.60L317.50 558.40M317.50 558.40L336.20 558.40M336.20 539.60L336.20 558.40M336.20 558.40L355.30 558.40M355.30 539.60L355.30 558.40M355.30 558.40L373.90 558.40M373.90 539.60L373.90 558.40M373.90 558.40L392.70 558.40M392.70 539.60L392.70 558.40M392.70 558.40L411.50 558.40M411.50 539.60L411.50 558.40M411.50 558.40L430.60 558.40M430.60 539.60L430.60 558.40M430.60 558.40L449.40 558.40M449.40 539.60L449.40 558.40M449.40 558.40L468.60 558.40M468.60 539.60L468.60 558.40M468.60 558.40L487.40 558.40M487.40 539.60L487.40 558.40M487.40 558.40L506.40 558.40M506.40 539.60L506.40 558.40M506.40 558.40L525.30 558.40M525.30 539.60L525.30 558.40M525.30 558.40L544.00 558.40M544.00 539.60L544.00 558.40M544.00 558.40L562.70 558.40M562.70 539.60L562.70 558.40M562.70 558.40L581.50 558.40M581.50 539.60L581.50 558.40M581.50 558.40L600.40 558.40M600.40 539.60L600.40 558.40M600.40 558.40L619.40 558.40M619.40 539.60L619.40 558.40M619.40 558.40L638.50 558.40M638.50 539.60L638.50 558.40M638.50 558.40L657.40 558.40M657.40 539.60L657.40 558.40M657.40 558.40L676.20 558.40M676.20 539.60L676.20 558.40M676.20 558.40L695.20 558.40M695.20 539.60L695.20 558.40M695.20 558.40L714.20 558.40M714.20 539.60L714.20 558.40M714.20 558.40L733.00 558.40M733.00 539.60L733.00 558.40M733.00 558.40L751.40 558.40M751.40 539.60L751.40 558.40M751.40 558.40L770.40 558.40M770.40 539.60L770.40 558.40M770.40 558.40L789.40 558.40M789.40 539.60L789.40 558.40M789.40 558.40L808.40 558.40M808.40 539.60L808.40 558.40M808.40 558.40L827.30 558.40M827.30 539.60L827.30 558.40M827.30 558.40L846.30 558.40M846.30 539.60L846.30 558.40M846.30 558.40L865.10 558.40M865.10 539.60L865.10 558.40M865.10 558.40L884.00 558.40M884.00 539.60L884.00 558.40M884.00 558.40L903.00 558.40M903.00 539.60L903.00 558.40M903.00 558.40L921.70 558.40M921.70 539.60L921.70 558.40M921.70 558.40L940.50 558.40M940.50 539.60L940.50 558.40M940.50 558.40L959.50 558.40M959.50 539.60L959.50 558.40M959.50 558.40L978.50 558.40M978.50 539.60L978.50 558.40M978.50 558.40L997.40 558.40M997.40 539.60L997.40 558.40M997.40 558.40L1016.40 558.40M1016.40 539.60L1016.40 558.40M1016.40 558.40L1035.20 558.40M1035.20 539.60L1035.20 558.40M1035.20 558.40L1054.00 558.40M1054.00 539.60L1054.00 558.40M1054.00 558.40L1072.60 558.40M1072.60 539.60L1072.60 558.40M1072.60 558.40L1091.80 558.40M1091.80 539.60L1091.80 558.40M37.40 577.00L60.30 577.00M37.40 558.40L37.40 577.00M60.30 558.40L60.30 577.00M60.30 577.00L200.20 577.00M200.20 558.40L200.20 577.00M200.20 577.00L219.20 577.00M219.20 558.40L219.20 577.00M219.20 577.00L241.50 577.00M241.50 558.40L241.50 577.00M241.50 577.00L260.60 577.00M260.60 558.40L260.60 577.00M260.60 577.00L279.50 577.00M279.50 558.40L279.50 577.00M279.50 577.00L298.60 577.00M298.60 558.40L298.60 577.00M298.60 577.00L317.50 577.00M317.50 558.40L317.50 577.00M317.50 577.00L336.20 577.00M336.20 558.40L336.20 577.00M336.20 577.00L355.30 577.00M355.30 558.40L355.30 577.00M355.30 577.00L373.90 577.00M373.90 558.40L373.90 577.00M373.90 577.00L392.70 577.00M392.70 558.40L392.70 577.00M392.70 577.00L411.50 577.00M411.50 558.40L411.50 577.00M411.50 577.00L430.60 577.00M430.60 558.40L430.60 577.00M430.60 577.00L449.40 577.00M449.40 558.40L449.40 577.00M449.40 577.00L468.60 577.00M468.60 558.40L468.60 577.00M468.60 577.00L487.40 577.00M487.40 558.40L487.40 577.00M487.40 577.00L506.40 577.00M506.40 558.40L506.40 577.00M506.40 577.00L525.30 577.00M525.30 558.40L525.30 577.00M525.30 577.00L544.00 577.00M544.00 558.40L544.00 577.00M544.00 577.00L562.70 577.00M562.70 558.40L562.70 577.00M562.70 577.00L581.50 577.00M581.50 558.40L581.50 577.00M581.50 577.00L600.40 577.00M600.40 558.40L600.40 577.00M600.40 577.00L619.40 577.00M619.40 558.40L619.40 577.00M619.40 577.00L638.50 577.00M638.50 558.40L638.50 577.00M638.50 577.00L657.40 577.00M657.40 558.40L657.40 577.00M657.40 577.00L676.20 577.00M676.20 558.40L676.20 577.00M676.20 577.00L695.20 577.00M695.20 558.40L695.20 577.00M695.20 577.00L714.20 577.00M714.20 558.40L714.20 577.00M714.20 577.00L733.00 577.00M733.00 558.40L733.00 577.00M733.00 577.00L751.40 577.00M751.40 558.40L751.40 577.00M751.40 577.00L770.40 577.00M770.40 558.40L770.40 577.00M770.40 577.00L789.40 577.00M789.40 558.40L789.40 577.00M789.40 577.00L808.40 577.00M808.40 558.40L808.40 577.00M808.40 577.00L827.30 577.00M827.30 558.40L827.30 577.00M827.30 577.00L846.30 577.00M846.30 558.40L846.30 577.00M846.30 577.00L865.10 577.00M865.10 558.40L865.10 577.00M865.10 577.00L884.00 577.00M884.00 558.40L884.00 577.00M884.00 577.00L903.00 577.00M903.00 558.40L903.00 577.00M903.00 577.00L921.70 577.00M921.70 558.40L921.70 577.00M921.70 577.00L940.50 577.00M940.50 558.40L940.50 577.00M940.50 577.00L959.50 577.00M959.50 558.40L959.50 577.00M959.50 577.00L978.50 577.00M978.50 558.40L978.50 577.00M978.50 577.00L997.40 577.00M997.40 558.40L997.40 577.00M997.40 577.00L1016.40 577.00M1016.40 558.40L1016.40 577.00M1016.40 577.00L1035.20 577.00M1035.20 558.40L1035.20 577.00M1035.20 577.00L1054.00 577.00M1054.00 558.40L1054.00 577.00M1054.00 577.00L1072.60 577.00M1072.60 558.40L1072.60 577.00M1072.60 577.00L1091.80 577.00M1091.80 558.40L1091.80 577.00M37.40 602.80L60.30 602.80M37.40 577.00L37.40 602.80M60.30 577.00L60.30 602.80M60.30 602.80L200.20 602.80M200.20 577.00L200.20 602.80M200.20 602.80L219.20 602.80M219.20 577.00L219.20 602.80M219.20 602.80L241.50 602.80M241.50 577.00L241.50 602.80M241.50 602.80L260.60 602.80M260.60 577.00L260.60 602.80M260.60 602.80L279.50 602.80M279.50 577.00L279.50 602.80M279.50 602.80L298.60 602.80M298.60 577.00L298.60 602.80M298.60 602.80L317.50 602.80M317.50 577.00L317.50 602.80M317.50 602.80L336.20 602.80M336.20 577.00L336.20 602.80M336.20 602.80L355.30 602.80M355.30 577.00L355.30 602.80M355.30 602.80L373.90 602.80M373.90 577.00L373.90 602.80M373.90 602.80L392.70 602.80M392.70 577.00L392.70 602.80M392.70 602.80L411.50 602.80M411.50 577.00L411.50 602.80M411.50 602.80L430.60 602.80M430.60 577.00L430.60 602.80M430.60 602.80L449.40 602.80M449.40 577.00L449.40 602.80M449.40 602.80L468.60 602.80M468.60 577.00L468.60 602.80M468.60 602.80L487.40 602.80M487.40 577.00L487.40 602.80M487.40 602.80L506.40 602.80M506.40 577.00L506.40 602.80M506.40 602.80L525.30 602.80M525.30 577.00L525.30 602.80M525.30 602.80L544.00 602.80M544.00 577.00L544.00 602.80M544.00 602.80L562.70 602.80M562.70 577.00L562.70 602.80M562.70 602.80L581.50 602.80M581.50 577.00L581.50 602.80M581.50 602.80L600.40 602.80M600.40 577.00L600.40 602.80M600.40 602.80L619.40 602.80M619.40 577.00L619.40 602.80M619.40 602.80L638.50 602.80M638.50 577.00L638.50 602.80M638.50 602.80L657.40 602.80M657.40 577.00L657.40 602.80M657.40 602.80L676.20 602.80M676.20 577.00L676.20 602.80M676.20 602.80L695.20 602.80M695.20 577.00L695.20 602.80M695.20 602.80L714.20 602.80M714.20 577.00L714.20 602.80M714.20 602.80L733.00 602.80M733.00 577.00L733.00 602.80M733.00 602.80L751.40 602.80M751.40 577.00L751.40 602.80M751.40 602.80L770.40 602.80M770.40 577.00L770.40 602.80M770.40 602.80L789.40 602.80M789.40 577.00L789.40 602.80M789.40 602.80L808.40 602.80M808.40 577.00L808.40 602.80M808.40 602.80L827.30 602.80M827.30 577.00L827.30 602.80M827.30 602.80L846.30 602.80M846.30 577.00L846.30 602.80M846.30 602.80L865.10 602.80M865.10 577.00L865.10 602.80M865.10 602.80L884.00 602.80M884.00 577.00L884.00 602.80M884.00 602.80L903.00 602.80M903.00 577.00L903.00 602.80M903.00 602.80L921.70 602.80M921.70 577.00L921.70 602.80M921.70 602.80L940.50 602.80M940.50 577.00L940.50 602.80M940.50 602.80L959.50 602.80M959.50 577.00L959.50 602.80M959.50 602.80L978.50 602.80M978.50 577.00L978.50 602.80M978.50 602.80L997.40 602.80M997.40 577.00L997.40 602.80M997.40 602.80L1016.40 602.80M1016.40 577.00L1016.40 602.80M1016.40 602.80L1035.20 602.80M1035.20 577.00L1035.20 602.80M1035.20 602.80L1054.00 602.80M1054.00 577.00L1054.00 602.80M1054.00 602.80L1072.60 602.80M1072.60 577.00L1072.60 602.80M1072.60 602.80L1091.80 602.80M1091.80 577.00L1091.80 602.80M37.40 640.60L60.30 640.60M37.40 602.80L37.40 640.60M60.30 602.80L60.30 640.60M60.30 640.60L200.20 640.60M200.20 602.80L200.20 640.60M200.20 640.60L219.20 640.60M219.20 602.80L219.20 640.60M219.20 640.60L241.50 640.60M241.50 602.80L241.50 640.60M241.50 640.60L260.60 640.60M260.60 602.80L260.60 640.60M260.60 640.60L279.50 640.60M279.50 602.80L279.50 640.60M279.50 640.60L298.60 640.60M298.60 602.80L298.60 640.60M298.60 640.60L317.50 640.60M317.50 602.80L317.50 640.60M317.50 640.60L336.20 640.60M336.20 602.80L336.20 640.60M336.20 640.60L355.30 640.60M355.30 602.80L355.30 640.60M355.30 640.60L373.90 640.60M373.90 602.80L373.90 640.60M373.90 640.60L392.70 640.60M392.70 602.80L392.70 640.60M392.70 640.60L411.50 640.60M411.50 602.80L411.50 640.60M411.50 640.60L430.60 640.60M430.60 602.80L430.60 640.60M430.60 640.60L449.40 640.60M449.40 602.80L449.40 640.60M449.40 640.60L468.60 640.60M468.60 602.80L468.60 640.60M468.60 640.60L487.40 640.60M487.40 602.80L487.40 640.60M487.40 640.60L506.40 640.60M506.40 602.80L506.40 640.60M506.40 640.60L525.30 640.60M525.30 602.80L525.30 640.60M525.30 640.60L544.00 640.60M544.00 602.80L544.00 640.60M544.00 640.60L562.70 640.60M562.70 602.80L562.70 640.60M562.70 640.60L581.50 640.60M581.50 602.80L581.50 640.60M581.50 640.60L600.40 640.60M600.40 602.80L600.40 640.60M600.40 640.60L619.40 640.60M619.40 602.80L619.40 640.60M619.40 640.60L638.50 640.60M638.50 602.80L638.50 640.60M638.50 640.60L657.40 640.60M657.40 602.80L657.40 640.60M657.40 640.60L676.20 640.60M676.20 602.80L676.20 640.60M676.20 640.60L695.20 640.60M695.20 602.80L695.20 640.60M695.20 640.60L714.20 640.60M714.20 602.80L714.20 640.60M714.20 640.60L733.00 640.60M733.00 602.80L733.00 640.60M733.00 640.60L751.40 640.60M751.40 602.80L751.40 640.60M751.40 640.60L770.40 640.60M770.40 602.80L770.40 640.60M770.40 640.60L789.40 640.60M789.40 602.80L789.40 640.60M789.40 640.60L808.40 640.60M808.40 602.80L808.40 640.60M808.40 640.60L827.30 640.60M827.30 602.80L827.30 640.60M827.30 640.60L846.30 640.60M846.30 602.80L846.30 640.60M846.30 640.60L865.10 640.60M865.10 602.80L865.10 640.60M865.10 640.60L884.00 640.60M884.00 602.80L884.00 640.60M884.00 640.60L903.00 640.60M903.00 602.80L903.00 640.60M903.00 640.60L921.70 640.60M921.70 602.80L921.70 640.60M921.70 640.60L940.50 640.60M940.50 602.80L940.50 640.60M940.50 640.60L959.50 640.60M959.50 602.80L959.50 640.60M959.50 640.60L978.50 640.60M978.50 602.80L978.50 640.60M978.50 640.60L997.40 640.60M997.40 602.80L997.40 640.60M997.40 640.60L1016.40 640.60M1016.40 602.80L1016.40 640.60M1016.40 640.60L1035.20 640.60M1035.20 602.80L1035.20 640.60M1035.20 640.60L1054.00 640.60M1054.00 602.80L1054.00 640.60M1054.00 640.60L1072.60 640.60M1072.60 602.80L1072.60 640.60M1072.60 640.60L1091.80 640.60M1091.80 602.80L1091.80 640.60M37.40 659.30L60.30 659.30M37.40 640.60L37.40 659.30M60.30 640.60L60.30 659.30M60.30 659.30L200.20 659.30M200.20 640.60L200.20 659.30M200.20 659.30L219.20 659.30M219.20 640.60L219.20 659.30M219.20 659.30L241.50 659.30M241.50 640.60L241.50 659.30M241.50 659.30L260.60 659.30M260.60 640.60L260.60 659.30M260.60 659.30L279.50 659.30M279.50 640.60L279.50 659.30M279.50 659.30L298.60 659.30M298.60 640.60L298.60 659.30M298.60 659.30L317.50 659.30M317.50 640.60L317.50 659.30M317.50 659.30L336.20 659.30M336.20 640.60L336.20 659.30M336.20 659.30L355.30 659.30M355.30 640.60L355.30 659.30M355.30 659.30L373.90 659.30M373.90 640.60L373.90 659.30M373.90 659.30L392.70 659.30M392.70 640.60L392.70 659.30M392.70 659.30L411.50 659.30M411.50 640.60L411.50 659.30M411.50 659.30L430.60 659.30M430.60 640.60L430.60 659.30M430.60 659.30L449.40 659.30M449.40 640.60L449.40 659.30M449.40 659.30L468.60 659.30M468.60 640.60L468.60 659.30M468.60 659.30L487.40 659.30M487.40 640.60L487.40 659.30M487.40 659.30L506.40 659.30M506.40 640.60L506.40 659.30M506.40 659.30L525.30 659.30M525.30 640.60L525.30 659.30M525.30 659.30L544.00 659.30M544.00 640.60L544.00 659.30M544.00 659.30L562.70 659.30M562.70 640.60L562.70 659.30M562.70 659.30L581.50 659.30M581.50 640.60L581.50 659.30M581.50 659.30L600.40 659.30M600.40 640.60L600.40 659.30M600.40 659.30L619.40 659.30M619.40 640.60L619.40 659.30M619.40 659.30L638.50 659.30M638.50 640.60L638.50 659.30M638.50 659.30L657.40 659.30M657.40 640.60L657.40 659.30M657.40 659.30L676.20 659.30M676.20 640.60L676.20 659.30M676.20 659.30L695.20 659.30M695.20 640.60L695.20 659.30M695.20 659.30L714.20 659.30M714.20 640.60L714.20 659.30M714.20 659.30L733.00 659.30M733.00 640.60L733.00 659.30M733.00 659.30L751.40 659.30M751.40 640.60L751.40 659.30M751.40 659.30L770.40 659.30M770.40 640.60L770.40 659.30M770.40 659.30L789.40 659.30M789.40 640.60L789.40 659.30M789.40 659.30L808.40 659.30M808.40 640.60L808.40 659.30M808.40 659.30L827.30 659.30M827.30 640.60L827.30 659.30M827.30 659.30L846.30 659.30M846.30 640.60L846.30 659.30M846.30 659.30L865.10 659.30M865.10 640.60L865.10 659.30M865.10 659.30L884.00 659.30M884.00 640.60L884.00 659.30M884.00 659.30L903.00 659.30M903.00 640.60L903.00 659.30M903.00 659.30L921.70 659.30M921.70 640.60L921.70 659.30M921.70 659.30L940.50 659.30M940.50 640.60L940.50 659.30M940.50 659.30L959.50 659.30M959.50 640.60L959.50 659.30M959.50 659.30L978.50 659.30M978.50 640.60L978.50 659.30M978.50 659.30L997.40 659.30M997.40 640.60L997.40 659.30M997.40 659.30L1016.40 659.30M1016.40 640.60L1016.40 659.30M1016.40 659.30L1035.20 659.30M1035.20 640.60L1035.20 659.30M1035.20 659.30L1054.00 659.30M1054.00 640.60L1054.00 659.30M1054.00 659.30L1072.60 659.30M1072.60 640.60L1072.60 659.30M1072.60 659.30L1091.80 659.30M1091.80 640.60L1091.80 659.30M37.40 678.50L60.30 678.50M37.40 659.30L37.40 678.50M60.30 659.30L60.30 678.50M60.30 678.50L200.20 678.50M200.20 659.30L200.20 678.50M200.20 678.50L219.20 678.50M219.20 659.30L219.20 678.50M219.20 678.50L241.50 678.50M241.50 659.30L241.50 678.50M241.50 678.50L260.60 678.50M260.60 659.30L260.60 678.50M260.60 678.50L279.50 678.50M279.50 659.30L279.50 678.50M279.50 678.50L298.60 678.50M298.60 659.30L298.60 678.50M298.60 678.50L317.50 678.50M317.50 659.30L317.50 678.50M317.50 678.50L336.20 678.50M336.20 659.30L336.20 678.50M336.20 678.50L355.30 678.50M355.30 659.30L355.30 678.50M355.30 678.50L373.90 678.50M373.90 659.30L373.90 678.50M373.90 678.50L392.70 678.50M392.70 659.30L392.70 678.50M392.70 678.50L411.50 678.50M411.50 659.30L411.50 678.50M411.50 678.50L430.60 678.50M430.60 659.30L430.60 678.50M430.60 678.50L449.40 678.50M449.40 659.30L449.40 678.50M449.40 678.50L468.60 678.50M468.60 659.30L468.60 678.50M468.60 678.50L487.40 678.50M487.40 659.30L487.40 678.50M487.40 678.50L506.40 678.50M506.40 659.30L506.40 678.50M506.40 678.50L525.30 678.50M525.30 659.30L525.30 678.50M525.30 678.50L544.00 678.50M544.00 659.30L544.00 678.50M544.00 678.50L562.70 678.50M562.70 659.30L562.70 678.50M562.70 678.50L581.50 678.50M581.50 659.30L581.50 678.50M581.50 678.50L600.40 678.50M600.40 659.30L600.40 678.50M600.40 678.50L619.40 678.50M619.40 659.30L619.40 678.50M619.40 678.50L638.50 678.50M638.50 659.30L638.50 678.50M638.50 678.50L657.40 678.50M657.40 659.30L657.40 678.50M657.40 678.50L676.20 678.50M676.20 659.30L676.20 678.50M676.20 678.50L695.20 678.50M695.20 659.30L695.20 678.50M695.20 678.50L714.20 678.50M714.20 659.30L714.20 678.50M714.20 678.50L733.00 678.50M733.00 659.30L733.00 678.50M733.00 678.50L751.40 678.50M751.40 659.30L751.40 678.50M751.40 678.50L770.40 678.50M770.40 659.30L770.40 678.50M770.40 678.50L789.40 678.50M789.40 659.30L789.40 678.50M789.40 678.50L808.40 678.50M808.40 659.30L808.40 678.50M808.40 678.50L827.30 678.50M827.30 659.30L827.30 678.50M827.30 678.50L846.30 678.50M846.30 659.30L846.30 678.50M846.30 678.50L865.10 678.50M865.10 659.30L865.10 678.50M865.10 678.50L884.00 678.50M884.00 659.30L884.00 678.50M884.00 678.50L903.00 678.50M903.00 659.30L903.00 678.50M903.00 678.50L921.70 678.50M921.70 659.30L921.70 678.50M921.70 678.50L940.50 678.50M940.50 659.30L940.50 678.50M940.50 678.50L959.50 678.50M959.50 659.30L959.50 678.50M959.50 678.50L978.50 678.50M978.50 659.30L978.50 678.50M978.50 678.50L997.40 678.50M997.40 659.30L997.40 678.50M997.40 678.50L1016.40 678.50M1016.40 659.30L1016.40 678.50M1016.40 678.50L1035.20 678.50M1035.20 659.30L1035.20 678.50M1035.20 678.50L1054.00 678.50M1054.00 659.30L1054.00 678.50M1054.00 678.50L1072.60 678.50M1072.60 659.30L1072.60 678.50M1072.60 678.50L1091.80 678.50M1091.80 659.30L1091.80 678.50M37.40 697.40L60.30 697.40M37.40 678.50L37.40 697.40M60.30 678.50L60.30 697.40M60.30 697.40L200.20 697.40M200.20 678.50L200.20 697.40M200.20 697.40L219.20 697.40M219.20 678.50L219.20 697.40M219.20 697.40L241.50 697.40M241.50 678.50L241.50 697.40M241.50 697.40L260.60 697.40M260.60 678.50L260.60 697.40M260.60 697.40L279.50 697.40M279.50 678.50L279.50 697.40M279.50 697.40L298.60 697.40M298.60 678.50L298.60 697.40M298.60 697.40L317.50 697.40M317.50 678.50L317.50 697.40M317.50 697.40L336.20 697.40M336.20 678.50L336.20 697.40M336.20 697.40L355.30 697.40M355.30 678.50L355.30 697.40M355.30 697.40L373.90 697.40M373.90 678.50L373.90 697.40M373.90 697.40L392.70 697.40M392.70 678.50L392.70 697.40M392.70 697.40L411.50 697.40M411.50 678.50L411.50 697.40M411.50 697.40L430.60 697.40M430.60 678.50L430.60 697.40M430.60 697.40L449.40 697.40M449.40 678.50L449.40 697.40M449.40 697.40L468.60 697.40M468.60 678.50L468.60 697.40M468.60 697.40L487.40 697.40M487.40 678.50L487.40 697.40M487.40 697.40L506.40 697.40M506.40 678.50L506.40 697.40M506.40 697.40L525.30 697.40M525.30 678.50L525.30 697.40M525.30 697.40L544.00 697.40M544.00 678.50L544.00 697.40M544.00 697.40L562.70 697.40M562.70 678.50L562.70 697.40M562.70 697.40L581.50 697.40M581.50 678.50L581.50 697.40M581.50 697.40L600.40 697.40M600.40 678.50L600.40 697.40M600.40 697.40L619.40 697.40M619.40 678.50L619.40 697.40M619.40 697.40L638.50 697.40M638.50 678.50L638.50 697.40M638.50 697.40L657.40 697.40M657.40 678.50L657.40 697.40M657.40 697.40L676.20 697.40M676.20 678.50L676.20 697.40M676.20 697.40L695.20 697.40M695.20 678.50L695.20 697.40M695.20 697.40L714.20 697.40M714.20 678.50L714.20 697.40M714.20 697.40L733.00 697.40M733.00 678.50L733.00 697.40M733.00 697.40L751.40 697.40M751.40 678.50L751.40 697.40M751.40 697.40L770.40 697.40M770.40 678.50L770.40 697.40M770.40 697.40L789.40 697.40M789.40 678.50L789.40 697.40M789.40 697.40L808.40 697.40M808.40 678.50L808.40 697.40M808.40 697.40L827.30 697.40M827.30 678.50L827.30 697.40M827.30 697.40L846.30 697.40M846.30 678.50L846.30 697.40M846.30 697.40L865.10 697.40M865.10 678.50L865.10 697.40M865.10 697.40L884.00 697.40M884.00 678.50L884.00 697.40M884.00 697.40L903.00 697.40M903.00 678.50L903.00 697.40M903.00 697.40L921.70 697.40M921.70 678.50L921.70 697.40M921.70 697.40L940.50 697.40M940.50 678.50L940.50 697.40M940.50 697.40L959.50 697.40M959.50 678.50L959.50 697.40M959.50 697.40L978.50 697.40M978.50 678.50L978.50 697.40M978.50 697.40L997.40 697.40M997.40 678.50L997.40 697.40M997.40 697.40L1016.40 697.40M1016.40 678.50L1016.40 697.40M1016.40 697.40L1035.20 697.40M1035.20 678.50L1035.20 697.40M1035.20 697.40L1054.00 697.40M1054.00 678.50L1054.00 697.40M1054.00 697.40L1072.60 697.40M1072.60 678.50L1072.60 697.40M1072.60 697.40L1091.80 697.40M1091.80 678.50L1091.80 697.40M37.40 723.40L60.30 723.40M37.40 697.40L37.40 723.40M60.30 697.40L60.30 723.40M60.30 723.40L200.20 723.40M200.20 697.40L200.20 723.40M200.20 723.40L219.20 723.40M219.20 697.40L219.20 723.40M219.20 723.40L241.50 723.40M241.50 697.40L241.50 723.40M241.50 723.40L260.60 723.40M260.60 697.40L260.60 723.40M260.60 723.40L279.50 723.40M279.50 697.40L279.50 723.40M279.50 723.40L298.60 723.40M298.60 697.40L298.60 723.40M298.60 723.40L317.50 723.40M317.50 697.40L317.50 723.40M317.50 723.40L336.20 723.40M336.20 697.40L336.20 723.40M336.20 723.40L355.30 723.40M355.30 697.40L355.30 723.40M355.30 723.40L373.90 723.40M373.90 697.40L373.90 723.40M373.90 723.40L392.70 723.40M392.70 697.40L392.70 723.40M392.70 723.40L411.50 723.40M411.50 697.40L411.50 723.40M411.50 723.40L430.60 723.40M430.60 697.40L430.60 723.40M430.60 723.40L449.40 723.40M449.40 697.40L449.40 723.40M449.40 723.40L468.60 723.40M468.60 697.40L468.60 723.40M468.60 723.40L487.40 723.40M487.40 697.40L487.40 723.40M487.40 723.40L506.40 723.40M506.40 697.40L506.40 723.40M506.40 723.40L525.30 723.40M525.30 697.40L525.30 723.40M525.30 723.40L544.00 723.40M544.00 697.40L544.00 723.40M544.00 723.40L562.70 723.40M562.70 697.40L562.70 723.40M562.70 723.40L581.50 723.40M581.50 697.40L581.50 723.40M581.50 723.40L600.40 723.40M600.40 697.40L600.40 723.40M600.40 723.40L619.40 723.40M619.40 697.40L619.40 723.40M619.40 723.40L638.50 723.40M638.50 697.40L638.50 723.40M638.50 723.40L657.40 723.40M657.40 697.40L657.40 723.40M657.40 723.40L676.20 723.40M676.20 697.40L676.20 723.40M676.20 723.40L695.20 723.40M695.20 697.40L695.20 723.40M695.20 723.40L714.20 723.40M714.20 697.40L714.20 723.40M714.20 723.40L733.00 723.40M733.00 697.40L733.00 723.40M733.00 723.40L751.40 723.40M751.40 697.40L751.40 723.40M751.40 723.40L770.40 723.40M770.40 697.40L770.40 723.40M770.40 723.40L789.40 723.40M789.40 697.40L789.40 723.40M789.40 723.40L808.40 723.40M808.40 697.40L808.40 723.40M808.40 723.40L827.30 723.40M827.30 697.40L827.30 723.40M827.30 723.40L846.30 723.40M846.30 697.40L846.30 723.40M846.30 723.40L865.10 723.40M865.10 697.40L865.10 723.40M865.10 723.40L884.00 723.40M884.00 697.40L884.00 723.40M884.00 723.40L903.00 723.40M903.00 697.40L903.00 723.40M903.00 723.40L921.70 723.40M921.70 697.40L921.70 723.40M921.70 723.40L940.50 723.40M940.50 697.40L940.50 723.40M940.50 723.40L959.50 723.40M959.50 697.40L959.50 723.40M959.50 723.40L978.50 723.40M978.50 697.40L978.50 723.40M978.50 723.40L997.40 723.40M997.40 697.40L997.40 723.40M997.40 723.40L1016.40 723.40M1016.40 697.40L1016.40 723.40M1016.40 723.40L1035.20 723.40M1035.20 697.40L1035.20 723.40M1035.20 723.40L1054.00 723.40M1054.00 697.40L1054.00 723.40M1054.00 723.40L1072.60 723.40M1072.60 697.40L1072.60 723.40M1072.60 723.40L1091.80 723.40M1091.80 697.40L1091.80 723.40" stroke="#000" stroke-width="7" fill="none"/><g fill="#000" opacity=".22"><rect x="43" y="235" width="11" height="7"/><rect x="43" y="247" width="11" height="7"/><rect x="84" y="235" width="92" height="7"/><rect x="101" y="247" width="59" height="7"/><rect x="207" y="175" width="6" height="140"/><rect x="227" y="222" width="6" height="47"/><rect x="248" y="209" width="6" height="73"/><rect x="269" y="154" width="22" height="7"/><rect x="266" y="166" width="27" height="7"/><rect x="315" y="160" width="43" height="7"/><rect x="609" y="160" width="97" height="7"/><rect x="961" y="160" width="92" height="7"/><rect x="1079" y="157" width="6" height="177"/><rect x="267" y="242" width="6" height="42"/><rect x="286" y="236" width="6" height="52"/><rect x="305" y="257" width="6" height="10"/><rect x="324" y="239" width="6" height="47"/><rect x="343" y="221" width="6" height="83"/><rect x="362" y="242" width="6" height="42"/><rect x="386" y="194" width="108" height="7"/><rect x="516" y="188" width="38" height="7"/><rect x="510" y="200" width="49" height="7"/><rect x="586" y="194" width="49" height="7"/><rect x="667" y="194" width="38" height="7"/><rect x="746" y="194" width="49" height="7"/><rect x="834" y="203" width="6" height="120"/><rect x="853" y="226" width="6" height="73"/><rect x="892" y="194" width="22" height="7"/><rect x="947" y="223" width="6" height="78"/><rect x="966" y="231" width="6" height="62"/><rect x="985" y="231" width="6" height="62"/><rect x="1001" y="188" width="49" height="7"/><rect x="1020" y="200" width="11" height="7"/><rect x="1060" y="216" width="6" height="94"/><rect x="380" y="261" width="6" height="36"/><rect x="399" y="261" width="6" height="36"/><rect x="418" y="261" width="6" height="36"/><rect x="437" y="259" width="6" height="42"/><rect x="456" y="256" width="6" height="47"/><rect x="475" y="264" width="6" height="31"/><rect x="494" y="248" width="6" height="62"/><rect x="513" y="230" width="6" height="99"/><rect x="532" y="240" width="6" height="78"/><rect x="550" y="259" width="6" height="42"/><rect x="569" y="261" width="6" height="36"/><rect x="588" y="214" width="6" height="130"/><rect x="607" y="256" width="6" height="47"/><rect x="626" y="264" width="6" height="31"/><rect x="645" y="248" width="6" height="62"/><rect x="664" y="235" width="6" height="88"/><rect x="683" y="256" width="6" height="47"/><rect x="702" y="238" width="6" height="83"/><rect x="872" y="220" width="6" height="120"/><rect x="890" y="235" width="6" height="88"/><rect x="909" y="266" width="6" height="26"/><rect x="928" y="238" width="6" height="83"/><rect x="1004" y="261" width="6" height="36"/><rect x="1023" y="240" width="6" height="78"/><rect x="1042" y="238" width="6" height="83"/><rect x="729" y="222" width="27" height="7"/><rect x="734" y="234" width="16" height="7"/><rect x="785" y="222" width="27" height="7"/><rect x="777" y="234" width="43" height="7"/><rect x="721" y="257" width="6" height="78"/><rect x="739" y="252" width="6" height="88"/><rect x="758" y="255" width="6" height="83"/><rect x="777" y="257" width="6" height="78"/><rect x="796" y="252" width="6" height="88"/><rect x="815" y="255" width="6" height="83"/><rect x="45" y="348" width="5" height="7"/><rect x="126" y="348" width="5" height="7"/><rect x="206" y="348" width="5" height="7"/><rect x="226" y="348" width="5" height="7"/><rect x="247" y="348" width="5" height="7"/><rect x="266" y="348" width="5" height="7"/><rect x="285" y="348" width="5" height="7"/><rect x="304" y="348" width="5" height="7"/><rect x="323" y="348" width="5" height="7"/><rect x="339" y="348" width="11" height="7"/><rect x="358" y="348" width="11" height="7"/><rect x="377" y="348" width="11" height="7"/><rect x="396" y="348" width="11" height="7"/><rect x="414" y="348" width="11" height="7"/><rect x="433" y="348" width="11" height="7"/><rect x="452" y="348" width="11" height="7"/><rect x="471" y="348" width="11" height="7"/><rect x="490" y="348" width="11" height="7"/><rect x="509" y="348" width="11" height="7"/><rect x="528" y="348" width="11" height="7"/><rect x="547" y="348" width="11" height="7"/><rect x="566" y="348" width="11" height="7"/><rect x="584" y="348" width="11" height="7"/><rect x="603" y="348" width="11" height="7"/><rect x="622" y="348" width="11" height="7"/><rect x="641" y="348" width="11" height="7"/><rect x="660" y="348" width="11" height="7"/><rect x="679" y="348" width="11" height="7"/><rect x="698" y="348" width="11" height="7"/><rect x="717" y="348" width="11" height="7"/><rect x="736" y="348" width="11" height="7"/><rect x="754" y="348" width="11" height="7"/><rect x="773" y="348" width="11" height="7"/><rect x="792" y="348" width="11" height="7"/><rect x="811" y="348" width="11" height="7"/><rect x="830" y="348" width="11" height="7"/><rect x="849" y="348" width="11" height="7"/><rect x="868" y="348" width="11" height="7"/><rect x="887" y="348" width="11" height="7"/><rect x="906" y="348" width="11" height="7"/><rect x="924" y="348" width="11" height="7"/><rect x="943" y="348" width="11" height="7"/><rect x="962" y="348" width="11" height="7"/><rect x="981" y="348" width="11" height="7"/><rect x="1000" y="348" width="11" height="7"/><rect x="1019" y="348" width="11" height="7"/><rect x="1038" y="348" width="11" height="7"/><rect x="1057" y="348" width="11" height="7"/><rect x="1076" y="348" width="11" height="7"/><rect x="41" y="368" width="74" height="7"/><rect x="64" y="386" width="58" height="7"/><rect x="64" y="405" width="32" height="7"/><rect x="64" y="424" width="48" height="7"/><rect x="64" y="441" width="111" height="7"/><rect x="64" y="453" width="132" height="7"/><rect x="64" y="467" width="111" height="7"/><rect x="64" y="479" width="138" height="7"/><rect x="64" y="491" width="37" height="7"/><rect x="64" y="506" width="58" height="7"/><rect x="64" y="525" width="32" height="7"/><rect x="64" y="544" width="48" height="7"/><rect x="64" y="563" width="21" height="7"/><rect x="64" y="580" width="111" height="7"/><rect x="64" y="592" width="132" height="7"/><rect x="64" y="606" width="111" height="7"/><rect x="64" y="618" width="138" height="7"/><rect x="64" y="630" width="37" height="7"/><rect x="64" y="645" width="58" height="7"/><rect x="64" y="664" width="32" height="7"/><rect x="64" y="683" width="48" height="7"/><rect x="64" y="700" width="111" height="7"/><rect x="64" y="712" width="132" height="7"/><rect x="42" y="32" width="34" height="8"/><rect x="42" y="66" width="118" height="8"/><rect x="504" y="33" width="313" height="8"/><rect x="577" y="56" width="227" height="8"/><rect x="331" y="84" width="665" height="8"/><rect x="454" y="101" width="418" height="8"/><rect x="483" y="118" width="361" height="8"/><rect x="1058" y="748" width="8" height="7"/></g></g><g id="tp2"><rect x="37.40" y="30.00" width="1054.40" height="196.30" fill="#d3d3d3"/><path d="M37.40 30.00L60.30 30.00M37.40 226.30L60.30 226.30M37.40 30.00L37.40 226.30M60.30 30.00L60.30 226.30M60.30 30.00L200.20 30.00M60.30 226.30L200.20 226.30M200.20 30.00L200.20 226.30M200.20 30.00L219.20 30.00M200.20 226.30L219.20 226.30M219.20 30.00L219.20 226.30M219.20 30.00L241.50 30.00M219.20 226.30L241.50 226.30M241.50 30.00L241.50 226.30M241.50 30.00L260.60 30.00M241.50 226.30L260.60 226.30M260.60 30.00L260.60 226.30M260.60 30.00L298.60 30.00M260.60 63.90L298.60 63.90M260.60 30.00L260.60 63.90M298.60 30.00L298.60 63.90M298.60 30.00L373.90 30.00M298.60 63.90L373.90 63.90M373.90 30.00L373.90 63.90M373.90 30.00L940.50 30.00M373.90 63.90L940.50 63.90M940.50 30.00L940.50 63.90M940.50 30.00L1072.60 30.00M940.50 63.90L1072.60 63.90M1072.60 30.00L1072.60 63.90M1072.60 30.00L1091.80 30.00M1072.60 226.30L1091.80 226.30M1072.60 30.00L1072.60 226.30M1091.80 30.00L1091.80 226.30M260.60 63.90L279.50 63.90M260.60 226.30L279.50 226.30M260.60 63.90L260.60 226.30M279.50 63.90L279.50 226.30M279.50 63.90L298.60 63.90M279.50 226.30L298.60 226.30M298.60 63.90L298.60 226.30M298.60 63.90L317.50 63.90M298.60 226.30L317.50 226.30M317.50 63.90L317.50 226.30M317.50 63.90L336.20 63.90M317.50 226.30L336.20 226.30M336.20 63.90L336.20 226.30M336.20 63.90L355.30 63.90M336.20 226.30L355.30 226.30M355.30 63.90L355.30 226.30M355.30 63.90L373.90 63.90M355.30 226.30L373.90 226.30M373.90 63.90L373.90 226.30M373.90 63.90L506.40 63.90M373.90 98.00L506.40 98.00M373.90 63.90L373.90 98.00M506.40 63.90L506.40 98.00M506.40 63.90L562.70 63.90M506.40 98.00L562.70 98.00M562.70 63.90L562.70 98.00M562.70 63.90L657.40 63.90M562.70 98.00L657.40 98.00M657.40 63.90L657.40 98.00M657.40 63.90L714.20 63.90M657.40 98.00L714.20 98.00M714.20 63.90L714.20 98.00M714.20 63.90L827.30 63.90M714.20 98.00L827.30 98.00M827.30 63.90L827.30 98.00M827.30 63.90L846.30 63.90M827.30 226.30L846.30 226.30M827.30 63.90L827.30 226.30M846.30 63.90L846.30 226.30M846.30 63.90L865.10 63.90M846.30 226.30L865.10 226.30M865.10 63.90L865.10 226.30M865.10 63.90L940.50 63.90M865.10 98.00L940.50 98.00M865.10 63.90L865.10 98.00M940.50 63.90L940.50 98.00M940.50 63.90L959.50 63.90M940.50 226.30L959.50 226.30M940.50 63.90L940.50 226.30M959.50 63.90L959.50 226.30M959.50 63.90L978.50 63.90M959.50 226.30L978.50 226.30M978.50 63.90L978.50 226.30M978.50 63.90L997.40 63.90M978.50 226.30L997.40 226.30M997.40 63.90L997.40 226.30M997.40 63.90L1054.00 63.90M997.40 98.00L1054.00 98.00M997.40 63.90L997.40 98.00M1054.00 63.90L1054.00 98.00M1054.00 63.90L1072.60 63.90M1054.00 226.30L1072.60 226.30M1054.00 63.90L1054.00 226.30M1072.60 63.90L1072.60 226.30M373.90 98.00L392.70 98.00M373.90 226.30L392.70 226.30M373.90 98.00L373.90 226.30M392.70 98.00L392.70 226.30M392.70 98.00L411.50 98.00M392.70 226.30L411.50 226.30M411.50 98.00L411.50 226.30M411.50 98.00L430.60 98.00M411.50 226.30L430.60 226.30M430.60 98.00L430.60 226.30M430.60 98.00L449.40 98.00M430.60 226.30L449.40 226.30M449.40 98.00L449.40 226.30M449.40 98.00L468.60 98.00M449.40 226.30L468.60 226.30M468.60 98.00L468.60 226.30M468.60 98.00L487.40 98.00M468.60 226.30L487.40 226.30M487.40 98.00L487.40 226.30M487.40 98.00L506.40 98.00M487.40 226.30L506.40 226.30M506.40 98.00L506.40 226.30M506.40 98.00L525.30 98.00M506.40 226.30L525.30 226.30M525.30 98.00L525.30 226.30M525.30 98.00L544.00 98.00M525.30 226.30L544.00 226.30M544.00 98.00L544.00 226.30M544.00 98.00L562.70 98.00M544.00 226.30L562.70 226.30M562.70 98.00L562.70 226.30M562.70 98.00L581.50 98.00M562.70 226.30L581.50 226.30M581.50 98.00L581.50 226.30M581.50 98.00L600.40 98.00M581.50 226.30L600.40 226.30M600.40 98.00L600.40 226.30M600.40 98.00L619.40 98.00M600.40 226.30L619.40 226.30M619.40 98.00L619.40 226.30M619.40 98.00L638.50 98.00M619.40 226.30L638.50 226.30M638.50 98.00L638.50 226.30M638.50 98.00L657.40 98.00M638.50 226.30L657.40 226.30M657.40 98.00L657.40 226.30M657.40 98.00L676.20 98.00M657.40 226.30L676.20 226.30M676.20 98.00L676.20 226.30M676.20 98.00L695.20 98.00M676.20 226.30L695.20 226.30M695.20 98.00L695.20 226.30M695.20 98.00L714.20 98.00M695.20 226.30L714.20 226.30M714.20 98.00L714.20 226.30M865.10 98.00L884.00 98.00M865.10 226.30L884.00 226.30M865.10 98.00L865.10 226.30M884.00 98.00L884.00 226.30M884.00 98.00L903.00 98.00M884.00 226.30L903.00 226.30M903.00 98.00L903.00 226.30M903.00 98.00L921.70 98.00M903.00 226.30L921.70 226.30M921.70 98.00L921.70 226.30M921.70 98.00L940.50 98.00M921.70 226.30L940.50 226.30M940.50 98.00L940.50 226.30M997.40 98.00L1016.40 98.00M997.40 226.30L1016.40 226.30M997.40 98.00L997.40 226.30M1016.40 98.00L1016.40 226.30M1016.40 98.00L1035.20 98.00M1016.40 226.30L1035.20 226.30M1035.20 98.00L1035.20 226.30M1035.20 98.00L1054.00 98.00M1035.20 226.30L1054.00 226.30M1054.00 98.00L1054.00 226.30M714.20 98.00L770.40 98.00M714.20 131.80L770.40 131.80M714.20 98.00L714.20 131.80M770.40 98.00L770.40 131.80M770.40 98.00L827.30 98.00M770.40 131.80L827.30 131.80M827.30 98.00L827.30 131.80M714.20 131.80L733.00 131.80M714.20 226.30L733.00 226.30M714.20 131.80L714.20 226.30M733.00 131.80L733.00 226.30M733.00 131.80L751.40 131.80M733.00 226.30L751.40 226.30M751.40 131.80L751.40 226.30M751.40 131.80L770.40 131.80M751.40 226.30L770.40 226.30M770.40 131.80L770.40 226.30M770.40 131.80L789.40 131.80M770.40 226.30L789.40 226.30M789.40 131.80L789.40 226.30M789.40 131.80L808.40 131.80M789.40 226.30L808.40 226.30M808.40 131.80L808.40 226.30M808.40 131.80L827.30 131.80M808.40 226.30L827.30 226.30M827.30 131.80L827.30 226.30M37.40 245.00L60.30 245.00M37.40 226.30L37.40 245.00M60.30 226.30L60.30 245.00M60.30 245.00L200.20 245.00M200.20 226.30L200.20 245.00M200.20 245.00L219.20 245.00M219.20 226.30L219.20 245.00M219.20 245.00L241.50 245.00M241.50 226.30L241.50 245.00M241.50 245.00L260.60 245.00M260.60 226.30L260.60 245.00M260.60 245.00L279.50 245.00M279.50 226.30L279.50 245.00M279.50 245.00L298.60 245.00M298.60 226.30L298.60 245.00M298.60 245.00L317.50 245.00M317.50 226.30L317.50 245.00M317.50 245.00L336.20 245.00M336.20 226.30L336.20 245.00M336.20 245.00L355.30 245.00M355.30 226.30L355.30 245.00M355.30 245.00L373.90 245.00M373.90 226.30L373.90 245.00M373.90 245.00L392.70 245.00M392.70 226.30L392.70 245.00M392.70 245.00L411.50 245.00M411.50 226.30L411.50 245.00M411.50 245.00L430.60 245.00M430.60 226.30L430.60 245.00M430.60 245.00L449.40 245.00M449.40 226.30L449.40 245.00M449.40 245.00L468.60 245.00M468.60 226.30L468.60 245.00M468.60 245.00L487.40 245.00M487.40 226.30L487.40 245.00M487.40 245.00L506.40 245.00M506.40 226.30L506.40 245.00M506.40 245.00L525.30 245.00M525.30 226.30L525.30 245.00M525.30 245.00L544.00 245.00M544.00 226.30L544.00 245.00M544.00 245.00L562.70 245.00M562.70 226.30L562.70 245.00M562.70 245.00L581.50 245.00M581.50 226.30L581.50 245.00M581.50 245.00L600.40 245.00M600.40 226.30L600.40 245.00M600.40 245.00L619.40 245.00M619.40 226.30L619.40 245.00M619.40 245.00L638.50 245.00M638.50 226.30L638.50 245.00M638.50 245.00L657.40 245.00M657.40 226.30L657.40 245.00M657.40 245.00L676.20 245.00M676.20 226.30L676.20 245.00M676.20 245.00L695.20 245.00M695.20 226.30L695.20 245.00M695.20 245.00L714.20 245.00M714.20 226.30L714.20 245.00M714.20 245.00L733.00 245.00M733.00 226.30L733.00 245.00M733.00 245.00L751.40 245.00M751.40 226.30L751.40 245.00M751.40 245.00L770.40 245.00M770.40 226.30L770.40 245.00M770.40 245.00L789.40 245.00M789.40 226.30L789.40 245.00M789.40 245.00L808.40 245.00M808.40 226.30L808.40 245.00M808.40 245.00L827.30 245.00M827.30 226.30L827.30 245.00M827.30 245.00L846.30 245.00M846.30 226.30L846.30 245.00M846.30 245.00L865.10 245.00M865.10 226.30L865.10 245.00M865.10 245.00L884.00 245.00M884.00 226.30L884.00 245.00M884.00 245.00L903.00 245.00M903.00 226.30L903.00 245.00M903.00 245.00L921.70 245.00M921.70 226.30L921.70 245.00M921.70 245.00L940.50 245.00M940.50 226.30L940.50 245.00M940.50 245.00L959.50 245.00M959.50 226.30L959.50 245.00M959.50 245.00L978.50 245.00M978.50 226.30L978.50 245.00M978.50 245.00L997.40 245.00M997.40 226.30L997.40 245.00M997.40 245.00L1016.40 245.00M1016.40 226.30L1016.40 245.00M1016.40 245.00L1035.20 245.00M1035.20 226.30L1035.20 245.00M1035.20 245.00L1054.00 245.00M1054.00 226.30L1054.00 245.00M1054.00 245.00L1072.60 245.00M1072.60 226.30L1072.60 245.00M1072.60 245.00L1091.80 245.00M1091.80 226.30L1091.80 245.00M37.40 264.00L60.30 264.00M37.40 245.00L37.40 264.00M60.30 245.00L60.30 264.00M60.30 264.00L200.20 264.00M200.20 245.00L200.20 264.00M200.20 264.00L219.20 264.00M219.20 245.00L219.20 264.00M219.20 264.00L241.50 264.00M241.50 245.00L241.50 264.00M241.50 264.00L260.60 264.00M260.60 245.00L260.60 264.00M260.60 264.00L279.50 264.00M279.50 245.00L279.50 264.00M279.50 264.00L298.60 264.00M298.60 245.00L298.60 264.00M298.60 264.00L317.50 264.00M317.50 245.00L317.50 264.00M317.50 264.00L336.20 264.00M336.20 245.00L336.20 264.00M336.20 264.00L355.30 264.00M355.30 245.00L355.30 264.00M355.30 264.00L373.90 264.00M373.90 245.00L373.90 264.00M373.90 264.00L392.70 264.00M392.70 245.00L392.70 264.00M392.70 264.00L411.50 264.00M411.50 245.00L411.50 264.00M411.50 264.00L430.60 264.00M430.60 245.00L430.60 264.00M430.60 264.00L449.40 264.00M449.40 245.00L449.40 264.00M449.40 264.00L468.60 264.00M468.60 245.00L468.60 264.00M468.60 264.00L487.40 264.00M487.40 245.00L487.40 264.00M487.40 264.00L506.40 264.00M506.40 245.00L506.40 264.00M506.40 264.00L525.30 264.00M525.30 245.00L525.30 264.00M525.30 264.00L544.00 264.00M544.00 245.00L544.00 264.00M544.00 264.00L562.70 264.00M562.70 245.00L562.70 264.00M562.70 264.00L581.50 264.00M581.50 245.00L581.50 264.00M581.50 264.00L600.40 264.00M600.40 245.00L600.40 264.00M600.40 264.00L619.40 264.00M619.40 245.00L619.40 264.00M619.40 264.00L638.50 264.00M638.50 245.00L638.50 264.00M638.50 264.00L657.40 264.00M657.40 245.00L657.40 264.00M657.40 264.00L676.20 264.00M676.20 245.00L676.20 264.00M676.20 264.00L695.20 264.00M695.20 245.00L695.20 264.00M695.20 264.00L714.20 264.00M714.20 245.00L714.20 264.00M714.20 264.00L733.00 264.00M733.00 245.00L733.00 264.00M733.00 264.00L751.40 264.00M751.40 245.00L751.40 264.00M751.40 264.00L770.40 264.00M770.40 245.00L770.40 264.00M770.40 264.00L789.40 264.00M789.40 245.00L789.40 264.00M789.40 264.00L808.40 264.00M808.40 245.00L808.40 264.00M808.40 264.00L827.30 264.00M827.30 245.00L827.30 264.00M827.30 264.00L846.30 264.00M846.30 245.00L846.30 264.00M846.30 264.00L865.10 264.00M865.10 245.00L865.10 264.00M865.10 264.00L884.00 264.00M884.00 245.00L884.00 264.00M884.00 264.00L903.00 264.00M903.00 245.00L903.00 264.00M903.00 264.00L921.70 264.00M921.70 245.00L921.70 264.00M921.70 264.00L940.50 264.00M940.50 245.00L940.50 264.00M940.50 264.00L959.50 264.00M959.50 245.00L959.50 264.00M959.50 264.00L978.50 264.00M978.50 245.00L978.50 264.00M978.50 264.00L997.40 264.00M997.40 245.00L997.40 264.00M997.40 264.00L1016.40 264.00M1016.40 245.00L1016.40 264.00M1016.40 264.00L1035.20 264.00M1035.20 245.00L1035.20 264.00M1035.20 264.00L1054.00 264.00M1054.00 245.00L1054.00 264.00M1054.00 264.00L1072.60 264.00M1072.60 245.00L1072.60 264.00M1072.60 264.00L1091.80 264.00M1091.80 245.00L1091.80 264.00M37.40 283.00L60.30 283.00M37.40 264.00L37.40 283.00M60.30 264.00L60.30 283.00M60.30 283.00L200.20 283.00M200.20 264.00L200.20 283.00M200.20 283.00L219.20 283.00M219.20 264.00L219.20 283.00M219.20 283.00L241.50 283.00M241.50 264.00L241.50 283.00M241.50 283.00L260.60 283.00M260.60 264.00L260.60 283.00M260.60 283.00L279.50 283.00M279.50 264.00L279.50 283.00M279.50 283.00L298.60 283.00M298.60 264.00L298.60 283.00M298.60 283.00L317.50 283.00M317.50 264.00L317.50 283.00M317.50 283.00L336.20 283.00M336.20 264.00L336.20 283.00M336.20 283.00L355.30 283.00M355.30 264.00L355.30 283.00M355.30 283.00L373.90 283.00M373.90 264.00L373.90 283.00M373.90 283.00L392.70 283.00M392.70 264.00L392.70 283.00M392.70 283.00L411.50 283.00M411.50 264.00L411.50 283.00M411.50 283.00L430.60 283.00M430.60 264.00L430.60 283.00M430.60 283.00L449.40 283.00M449.40 264.00L449.40 283.00M449.40 283.00L468.60 283.00M468.60 264.00L468.60 283.00M468.60 283.00L487.40 283.00M487.40 264.00L487.40 283.00M487.40 283.00L506.40 283.00M506.40 264.00L506.40 283.00M506.40 283.00L525.30 283.00M525.30 264.00L525.30 283.00M525.30 283.00L544.00 283.00M544.00 264.00L544.00 283.00M544.00 283.00L562.70 283.00M562.70 264.00L562.70 283.00M562.70 283.00L581.50 283.00M581.50 264.00L581.50 283.00M581.50 283.00L600.40 283.00M600.40 264.00L600.40 283.00M600.40 283.00L619.40 283.00M619.40 264.00L619.40 283.00M619.40 283.00L638.50 283.00M638.50 264.00L638.50 283.00M638.50 283.00L657.40 283.00M657.40 264.00L657.40 283.00M657.40 283.00L676.20 283.00M676.20 264.00L676.20 283.00M676.20 283.00L695.20 283.00M695.20 264.00L695.20 283.00M695.20 283.00L714.20 283.00M714.20 264.00L714.20 283.00M714.20 283.00L733.00 283.00M733.00 264.00L733.00 283.00M733.00 283.00L751.40 283.00M751.40 264.00L751.40 283.00M751.40 283.00L770.40 283.00M770.40 264.00L770.40 283.00M770.40 283.00L789.40 283.00M789.40 264.00L789.40 283.00M789.40 283.00L808.40 283.00M808.40 264.00L808.40 283.00M808.40 283.00L827.30 283.00M827.30 264.00L827.30 283.00M827.30 283.00L846.30 283.00M846.30 264.00L846.30 283.00M846.30 283.00L865.10 283.00M865.10 264.00L865.10 283.00M865.10 283.00L884.00 283.00M884.00 264.00L884.00 283.00M884.00 283.00L903.00 283.00M903.00 264.00L903.00 283.00M903.00 283.00L921.70 283.00M921.70 264.00L921.70 283.00M921.70 283.00L940.50 283.00M940.50 264.00L940.50 283.00M940.50 283.00L959.50 283.00M959.50 264.00L959.50 283.00M959.50 283.00L978.50 283.00M978.50 264.00L978.50 283.00M978.50 283.00L997.40 283.00M997.40 264.00L997.40 283.00M997.40 283.00L1016.40 283.00M1016.40 264.00L1016.40 283.00M1016.40 283.00L1035.20 283.00M1035.20 264.00L1035.20 283.00M1035.20 283.00L1054.00 283.00M1054.00 264.00L1054.00 283.00M1054.00 283.00L1072.60 283.00M1072.60 264.00L1072.60 283.00M1072.60 283.00L1091.80 283.00M1091.80 264.00L1091.80 283.00M37.40 302.00L60.30 302.00M37.40 283.00L37.40 302.00M60.30 283.00L60.30 302.00M60.30 302.00L200.20 302.00M200.20 283.00L200.20 302.00M200.20 302.00L219.20 302.00M219.20 283.00L219.20 302.00M219.20 302.00L241.50 302.00M241.50 283.00L241.50 302.00M241.50 302.00L260.60 302.00M260.60 283.00L260.60 302.00M260.60 302.00L279.50 302.00M279.50 283.00L279.50 302.00M279.50 302.00L298.60 302.00M298.60 283.00L298.60 302.00M298.60 302.00L317.50 302.00M317.50 283.00L317.50 302.00M317.50 302.00L336.20 302.00M336.20 283.00L336.20 302.00M336.20 302.00L355.30 302.00M355.30 283.00L355.30 302.00M355.30 302.00L373.90 302.00M373.90 283.00L373.90 302.00M373.90 302.00L392.70 302.00M392.70 283.00L392.70 302.00M392.70 302.00L411.50 302.00M411.50 283.00L411.50 302.00M411.50 302.00L430.60 302.00M430.60 283.00L430.60 302.00M430.60 302.00L449.40 302.00M449.40 283.00L449.40 302.00M449.40 302.00L468.60 302.00M468.60 283.00L468.60 302.00M468.60 302.00L487.40 302.00M487.40 283.00L487.40 302.00M487.40 302.00L506.40 302.00M506.40 283.00L506.40 302.00M506.40 302.00L525.30 302.00M525.30 283.00L525.30 302.00M525.30 302.00L544.00 302.00M544.00 283.00L544.00 302.00M544.00 302.00L562.70 302.00M562.70 283.00L562.70 302.00M562.70 302.00L581.50 302.00M581.50 283.00L581.50 302.00M581.50 302.00L600.40 302.00M600.40 283.00L600.40 302.00M600.40 302.00L619.40 302.00M619.40 283.00L619.40 302.00M619.40 302.00L638.50 302.00M638.50 283.00L638.50 302.00M638.50 302.00L657.40 302.00M657.40 283.00L657.40 302.00M657.40 302.00L676.20 302.00M676.20 283.00L676.20 302.00M676.20 302.00L695.20 302.00M695.20 283.00L695.20 302.00M695.20 302.00L714.20 302.00M714.20 283.00L714.20 302.00M714.20 302.00L733.00 302.00M733.00 283.00L733.00 302.00M733.00 302.00L751.40 302.00M751.40 283.00L751.40 302.00M751.40 302.00L770.40 302.00M770.40 283.00L770.40 302.00M770.40 302.00L789.40 302.00M789.40 283.00L789.40 302.00M789.40 302.00L808.40 302.00M808.40 283.00L808.40 302.00M808.40 302.00L827.30 302.00M827.30 283.00L827.30 302.00M827.30 302.00L846.30 302.00M846.30 283.00L846.30 302.00M846.30 302.00L865.10 302.00M865.10 283.00L865.10 302.00M865.10 302.00L884.00 302.00M884.00 283.00L884.00 302.00M884.00 302.00L903.00 302.00M903.00 283.00L903.00 302.00M903.00 302.00L921.70 302.00M921.70 283.00L921.70 302.00M921.70 302.00L940.50 302.00M940.50 283.00L940.50 302.00M940.50 302.00L959.50 302.00M959.50 283.00L959.50 302.00M959.50 302.00L978.50 302.00M978.50 283.00L978.50 302.00M978.50 302.00L997.40 302.00M997.40 283.00L997.40 302.00M997.40 302.00L1016.40 302.00M1016.40 283.00L1016.40 302.00M1016.40 302.00L1035.20 302.00M1035.20 283.00L1035.20 302.00M1035.20 302.00L1054.00 302.00M1054.00 283.00L1054.00 302.00M1054.00 302.00L1072.60 302.00M1072.60 283.00L1072.60 302.00M1072.60 302.00L1091.80 302.00M1091.80 283.00L1091.80 302.00M37.40 327.80L60.30 327.80M37.40 302.00L37.40 327.80M60.30 302.00L60.30 327.80M60.30 327.80L200.20 327.80M200.20 302.00L200.20 327.80M200.20 327.80L219.20 327.80M219.20 302.00L219.20 327.80M219.20 327.80L241.50 327.80M241.50 302.00L241.50 327.80M241.50 327.80L260.60 327.80M260.60 302.00L260.60 327.80M260.60 327.80L279.50 327.80M279.50 302.00L279.50 327.80M279.50 327.80L298.60 327.80M298.60 302.00L298.60 327.80M298.60 327.80L317.50 327.80M317.50 302.00L317.50 327.80M317.50 327.80L336.20 327.80M336.20 302.00L336.20 327.80M336.20 327.80L355.30 327.80M355.30 302.00L355.30 327.80M355.30 327.80L373.90 327.80M373.90 302.00L373.90 327.80M373.90 327.80L392.70 327.80M392.70 302.00L392.70 327.80M392.70 327.80L411.50 327.80M411.50 302.00L411.50 327.80M411.50 327.80L430.60 327.80M430.60 302.00L430.60 327.80M430.60 327.80L449.40 327.80M449.40 302.00L449.40 327.80M449.40 327.80L468.60 327.80M468.60 302.00L468.60 327.80M468.60 327.80L487.40 327.80M487.40 302.00L487.40 327.80M487.40 327.80L506.40 327.80M506.40 302.00L506.40 327.80M506.40 327.80L525.30 327.80M525.30 302.00L525.30 327.80M525.30 327.80L544.00 327.80M544.00 302.00L544.00 327.80M544.00 327.80L562.70 327.80M562.70 302.00L562.70 327.80M562.70 327.80L581.50 327.80M581.50 302.00L581.50 327.80M581.50 327.80L600.40 327.80M600.40 302.00L600.40 327.80M600.40 327.80L619.40 327.80M619.40 302.00L619.40 327.80M619.40 327.80L638.50 327.80M638.50 302.00L638.50 327.80M638.50 327.80L657.40 327.80M657.40 302.00L657.40 327.80M657.40 327.80L676.20 327.80M676.20 302.00L676.20 327.80M676.20 327.80L695.20 327.80M695.20 302.00L695.20 327.80M695.20 327.80L714.20 327.80M714.20 302.00L714.20 327.80M714.20 327.80L733.00 327.80M733.00 302.00L733.00 327.80M733.00 327.80L751.40 327.80M751.40 302.00L751.40 327.80M751.40 327.80L770.40 327.80M770.40 302.00L770.40 327.80M770.40 327.80L789.40 327.80M789.40 302.00L789.40 327.80M789.40 327.80L808.40 327.80M808.40 302.00L808.40 327.80M808.40 327.80L827.30 327.80M827.30 302.00L827.30 327.80M827.30 327.80L846.30 327.80M846.30 302.00L846.30 327.80M846.30 327.80L865.10 327.80M865.10 302.00L865.10 327.80M865.10 327.80L884.00 327.80M884.00 302.00L884.00 327.80M884.00 327.80L903.00 327.80M903.00 302.00L903.00 327.80M903.00 327.80L921.70 327.80M921.70 302.00L921.70 327.80M921.70 327.80L940.50 327.80M940.50 302.00L940.50 327.80M940.50 327.80L959.50 327.80M959.50 302.00L959.50 327.80M959.50 327.80L978.50 327.80M978.50 302.00L978.50 327.80M978.50 327.80L997.40 327.80M997.40 302.00L997.40 327.80M997.40 327.80L1016.40 327.80M1016.40 302.00L1016.40 327.80M1016.40 327.80L1035.20 327.80M1035.20 302.00L1035.20 327.80M1035.20 327.80L1054.00 327.80M1054.00 302.00L1054.00 327.80M1054.00 327.80L1072.60 327.80M1072.60 302.00L1072.60 327.80M1072.60 327.80L1091.80 327.80M1091.80 302.00L1091.80 327.80M37.40 365.40L60.30 365.40M37.40 327.80L37.40 365.40M60.30 327.80L60.30 365.40M60.30 365.40L200.20 365.40M200.20 327.80L200.20 365.40M200.20 365.40L219.20 365.40M219.20 327.80L219.20 365.40M219.20 365.40L241.50 365.40M241.50 327.80L241.50 365.40M241.50 365.40L260.60 365.40M260.60 327.80L260.60 365.40M260.60 365.40L279.50 365.40M279.50 327.80L279.50 365.40M279.50 365.40L298.60 365.40M298.60 327.80L298.60 365.40M298.60 365.40L317.50 365.40M317.50 327.80L317.50 365.40M317.50 365.40L336.20 365.40M336.20 327.80L336.20 365.40M336.20 365.40L355.30 365.40M355.30 327.80L355.30 365.40M355.30 365.40L373.90 365.40M373.90 327.80L373.90 365.40M373.90 365.40L392.70 365.40M392.70 327.80L392.70 365.40M392.70 365.40L411.50 365.40M411.50 327.80L411.50 365.40M411.50 365.40L430.60 365.40M430.60 327.80L430.60 365.40M430.60 365.40L449.40 365.40M449.40 327.80L449.40 365.40M449.40 365.40L468.60 365.40M468.60 327.80L468.60 365.40M468.60 365.40L487.40 365.40M487.40 327.80L487.40 365.40M487.40 365.40L506.40 365.40M506.40 327.80L506.40 365.40M506.40 365.40L525.30 365.40M525.30 327.80L525.30 365.40M525.30 365.40L544.00 365.40M544.00 327.80L544.00 365.40M544.00 365.40L562.70 365.40M562.70 327.80L562.70 365.40M562.70 365.40L581.50 365.40M581.50 327.80L581.50 365.40M581.50 365.40L600.40 365.40M600.40 327.80L600.40 365.40M600.40 365.40L619.40 365.40M619.40 327.80L619.40 365.40M619.40 365.40L638.50 365.40M638.50 327.80L638.50 365.40M638.50 365.40L657.40 365.40M657.40 327.80L657.40 365.40M657.40 365.40L676.20 365.40M676.20 327.80L676.20 365.40M676.20 365.40L695.20 365.40M695.20 327.80L695.20 365.40M695.20 365.40L714.20 365.40M714.20 327.80L714.20 365.40M714.20 365.40L733.00 365.40M733.00 327.80L733.00 365.40M733.00 365.40L751.40 365.40M751.40 327.80L751.40 365.40M751.40 365.40L770.40 365.40M770.40 327.80L770.40 365.40M770.40 365.40L789.40 365.40M789.40 327.80L789.40 365.40M789.40 365.40L808.40 365.40M808.40 327.80L808.40 365.40M808.40 365.40L827.30 365.40M827.30 327.80L827.30 365.40M827.30 365.40L846.30 365.40M846.30 327.80L846.30 365.40M846.30 365.40L865.10 365.40M865.10 327.80L865.10 365.40M865.10 365.40L884.00 365.40M884.00 327.80L884.00 365.40M884.00 365.40L903.00 365.40M903.00 327.80L903.00 365.40M903.00 365.40L921.70 365.40M921.70 327.80L921.70 365.40M921.70 365.40L940.50 365.40M940.50 327.80L940.50 365.40M940.50 365.40L959.50 365.40M959.50 327.80L959.50 365.40M959.50 365.40L978.50 365.40M978.50 327.80L978.50 365.40M978.50 365.40L997.40 365.40M997.40 327.80L997.40 365.40M997.40 365.40L1016.40 365.40M1016.40 327.80L1016.40 365.40M1016.40 365.40L1035.20 365.40M1035.20 327.80L1035.20 365.40M1035.20 365.40L1054.00 365.40M1054.00 327.80L1054.00 365.40M1054.00 365.40L1072.60 365.40M1072.60 327.80L1072.60 365.40M1072.60 365.40L1091.80 365.40M1091.80 327.80L1091.80 365.40M37.40 384.40L60.30 384.40M37.40 365.40L37.40 384.40M60.30 365.40L60.30 384.40M60.30 384.40L200.20 384.40M200.20 365.40L200.20 384.40M200.20 384.40L219.20 384.40M219.20 365.40L219.20 384.40M219.20 384.40L241.50 384.40M241.50 365.40L241.50 384.40M241.50 384.40L260.60 384.40M260.60 365.40L260.60 384.40M260.60 384.40L279.50 384.40M279.50 365.40L279.50 384.40M279.50 384.40L298.60 384.40M298.60 365.40L298.60 384.40M298.60 384.40L317.50 384.40M317.50 365.40L317.50 384.40M317.50 384.40L336.20 384.40M336.20 365.40L336.20 384.40M336.20 384.40L355.30 384.40M355.30 365.40L355.30 384.40M355.30 384.40L373.90 384.40M373.90 365.40L373.90 384.40M373.90 384.40L392.70 384.40M392.70 365.40L392.70 384.40M392.70 384.40L411.50 384.40M411.50 365.40L411.50 384.40M411.50 384.40L430.60 384.40M430.60 365.40L430.60 384.40M430.60 384.40L449.40 384.40M449.40 365.40L449.40 384.40M449.40 384.40L468.60 384.40M468.60 365.40L468.60 384.40M468.60 384.40L487.40 384.40M487.40 365.40L487.40 384.40M487.40 384.40L506.40 384.40M506.40 365.40L506.40 384.40M506.40 384.40L525.30 384.40M525.30 365.40L525.30 384.40M525.30 384.40L544.00 384.40M544.00 365.40L544.00 384.40M544.00 384.40L562.70 384.40M562.70 365.40L562.70 384.40M562.70 384.40L581.50 384.40M581.50 365.40L581.50 384.40M581.50 384.40L600.40 384.40M600.40 365.40L600.40 384.40M600.40 384.40L619.40 384.40M619.40 365.40L619.40 384.40M619.40 384.40L638.50 384.40M638.50 365.40L638.50 384.40M638.50 384.40L657.40 384.40M657.40 365.40L657.40 384.40M657.40 384.40L676.20 384.40M676.20 365.40L676.20 384.40M676.20 384.40L695.20 384.40M695.20 365.40L695.20 384.40M695.20 384.40L714.20 384.40M714.20 365.40L714.20 384.40M714.20 384.40L733.00 384.40M733.00 365.40L733.00 384.40M733.00 384.40L751.40 384.40M751.40 365.40L751.40 384.40M751.40 384.40L770.40 384.40M770.40 365.40L770.40 384.40M770.40 384.40L789.40 384.40M789.40 365.40L789.40 384.40M789.40 384.40L808.40 384.40M808.40 365.40L808.40 384.40M808.40 384.40L827.30 384.40M827.30 365.40L827.30 384.40M827.30 384.40L846.30 384.40M846.30 365.40L846.30 384.40M846.30 384.40L865.10 384.40M865.10 365.40L865.10 384.40M865.10 384.40L884.00 384.40M884.00 365.40L884.00 384.40M884.00 384.40L903.00 384.40M903.00 365.40L903.00 384.40M903.00 384.40L921.70 384.40M921.70 365.40L921.70 384.40M921.70 384.40L940.50 384.40M940.50 365.40L940.50 384.40M940.50 384.40L959.50 384.40M959.50 365.40L959.50 384.40M959.50 384.40L978.50 384.40M978.50 365.40L978.50 384.40M978.50 384.40L997.40 384.40M997.40 365.40L997.40 384.40M997.40 384.40L1016.40 384.40M1016.40 365.40L1016.40 384.40M1016.40 384.40L1035.20 384.40M1035.20 365.40L1035.20 384.40M1035.20 384.40L1054.00 384.40M1054.00 365.40L1054.00 384.40M1054.00 384.40L1072.60 384.40M1072.60 365.40L1072.60 384.40M1072.60 384.40L1091.80 384.40M1091.80 365.40L1091.80 384.40M37.40 403.40L60.30 403.40M37.40 384.40L37.40 403.40M60.30 384.40L60.30 403.40M60.30 403.40L200.20 403.40M200.20 384.40L200.20 403.40M200.20 403.40L219.20 403.40M219.20 384.40L219.20 403.40M219.20 403.40L241.50 403.40M241.50 384.40L241.50 403.40M241.50 403.40L260.60 403.40M260.60 384.40L260.60 403.40M260.60 403.40L279.50 403.40M279.50 384.40L279.50 403.40M279.50 403.40L298.60 403.40M298.60 384.40L298.60 403.40M298.60 403.40L317.50 403.40M317.50 384.40L317.50 403.40M317.50 403.40L336.20 403.40M336.20 384.40L336.20 403.40M336.20 403.40L355.30 403.40M355.30 384.40L355.30 403.40M355.30 403.40L373.90 403.40M373.90 384.40L373.90 403.40M373.90 403.40L392.70 403.40M392.70 384.40L392.70 403.40M392.70 403.40L411.50 403.40M411.50 384.40L411.50 403.40M411.50 403.40L430.60 403.40M430.60 384.40L430.60 403.40M430.60 403.40L449.40 403.40M449.40 384.40L449.40 403.40M449.40 403.40L468.60 403.40M468.60 384.40L468.60 403.40M468.60 403.40L487.40 403.40M487.40 384.40L487.40 403.40M487.40 403.40L506.40 403.40M506.40 384.40L506.40 403.40M506.40 403.40L525.30 403.40M525.30 384.40L525.30 403.40M525.30 403.40L544.00 403.40M544.00 384.40L544.00 403.40M544.00 403.40L562.70 403.40M562.70 384.40L562.70 403.40M562.70 403.40L581.50 403.40M581.50 384.40L581.50 403.40M581.50 403.40L600.40 403.40M600.40 384.40L600.40 403.40M600.40 403.40L619.40 403.40M619.40 384.40L619.40 403.40M619.40 403.40L638.50 403.40M638.50 384.40L638.50 403.40M638.50 403.40L657.40 403.40M657.40 384.40L657.40 403.40M657.40 403.40L676.20 403.40M676.20 384.40L676.20 403.40M676.20 403.40L695.20 403.40M695.20 384.40L695.20 403.40M695.20 403.40L714.20 403.40M714.20 384.40L714.20 403.40M714.20 403.40L733.00 403.40M733.00 384.40L733.00 403.40M733.00 403.40L751.40 403.40M751.40 384.40L751.40 403.40M751.40 403.40L770.40 403.40M770.40 384.40L770.40 403.40M770.40 403.40L789.40 403.40M789.40 384.40L789.40 403.40M789.40 403.40L808.40 403.40M808.40 384.40L808.40 403.40M808.40 403.40L827.30 403.40M827.30 384.40L827.30 403.40M827.30 403.40L846.30 403.40M846.30 384.40L846.30 403.40M846.30 403.40L865.10 403.40M865.10 384.40L865.10 403.40M865.10 403.40L884.00 403.40M884.00 384.40L884.00 403.40M884.00 403.40L903.00 403.40M903.00 384.40L903.00 403.40M903.00 403.40L921.70 403.40M921.70 384.40L921.70 403.40M921.70 403.40L940.50 403.40M940.50 384.40L940.50 403.40M940.50 403.40L959.50 403.40M959.50 384.40L959.50 403.40M959.50 403.40L978.50 403.40M978.50 384.40L978.50 403.40M978.50 403.40L997.40 403.40M997.40 384.40L997.40 403.40M997.40 403.40L1016.40 403.40M1016.40 384.40L1016.40 403.40M1016.40 403.40L1035.20 403.40M1035.20 384.40L1035.20 403.40M1035.20 403.40L1054.00 403.40M1054.00 384.40L1054.00 403.40M1054.00 403.40L1072.60 403.40M1072.60 384.40L1072.60 403.40M1072.60 403.40L1091.80 403.40M1091.80 384.40L1091.80 403.40M37.40 422.40L60.30 422.40M37.40 403.40L37.40 422.40M60.30 403.40L60.30 422.40M60.30 422.40L200.20 422.40M200.20 403.40L200.20 422.40M200.20 422.40L219.20 422.40M219.20 403.40L219.20 422.40M219.20 422.40L241.50 422.40M241.50 403.40L241.50 422.40M241.50 422.40L260.60 422.40M260.60 403.40L260.60 422.40M260.60 422.40L279.50 422.40M279.50 403.40L279.50 422.40M279.50 422.40L298.60 422.40M298.60 403.40L298.60 422.40M298.60 422.40L317.50 422.40M317.50 403.40L317.50 422.40M317.50 422.40L336.20 422.40M336.20 403.40L336.20 422.40M336.20 422.40L355.30 422.40M355.30 403.40L355.30 422.40M355.30 422.40L373.90 422.40M373.90 403.40L373.90 422.40M373.90 422.40L392.70 422.40M392.70 403.40L392.70 422.40M392.70 422.40L411.50 422.40M411.50 403.40L411.50 422.40M411.50 422.40L430.60 422.40M430.60 403.40L430.60 422.40M430.60 422.40L449.40 422.40M449.40 403.40L449.40 422.40M449.40 422.40L468.60 422.40M468.60 403.40L468.60 422.40M468.60 422.40L487.40 422.40M487.40 403.40L487.40 422.40M487.40 422.40L506.40 422.40M506.40 403.40L506.40 422.40M506.40 422.40L525.30 422.40M525.30 403.40L525.30 422.40M525.30 422.40L544.00 422.40M544.00 403.40L544.00 422.40M544.00 422.40L562.70 422.40M562.70 403.40L562.70 422.40M562.70 422.40L581.50 422.40M581.50 403.40L581.50 422.40M581.50 422.40L600.40 422.40M600.40 403.40L600.40 422.40M600.40 422.40L619.40 422.40M619.40 403.40L619.40 422.40M619.40 422.40L638.50 422.40M638.50 403.40L638.50 422.40M638.50 422.40L657.40 422.40M657.40 403.40L657.40 422.40M657.40 422.40L676.20 422.40M676.20 403.40L676.20 422.40M676.20 422.40L695.20 422.40M695.20 403.40L695.20 422.40M695.20 422.40L714.20 422.40M714.20 403.40L714.20 422.40M714.20 422.40L733.00 422.40M733.00 403.40L733.00 422.40M733.00 422.40L751.40 422.40M751.40 403.40L751.40 422.40M751.40 422.40L770.40 422.40M770.40 403.40L770.40 422.40M770.40 422.40L789.40 422.40M789.40 403.40L789.40 422.40M789.40 422.40L808.40 422.40M808.40 403.40L808.40 422.40M808.40 422.40L827.30 422.40M827.30 403.40L827.30 422.40M827.30 422.40L846.30 422.40M846.30 403.40L846.30 422.40M846.30 422.40L865.10 422.40M865.10 403.40L865.10 422.40M865.10 422.40L884.00 422.40M884.00 403.40L884.00 422.40M884.00 422.40L903.00 422.40M903.00 403.40L903.00 422.40M903.00 422.40L921.70 422.40M921.70 403.40L921.70 422.40M921.70 422.40L940.50 422.40M940.50 403.40L940.50 422.40M940.50 422.40L959.50 422.40M959.50 403.40L959.50 422.40M959.50 422.40L978.50 422.40M978.50 403.40L978.50 422.40M978.50 422.40L997.40 422.40M997.40 403.40L997.40 422.40M997.40 422.40L1016.40 422.40M1016.40 403.40L1016.40 422.40M1016.40 422.40L1035.20 422.40M1035.20 403.40L1035.20 422.40M1035.20 422.40L1054.00 422.40M1054.00 403.40L1054.00 422.40M1054.00 422.40L1072.60 422.40M1072.60 403.40L1072.60 422.40M1072.60 422.40L1091.80 422.40M1091.80 403.40L1091.80 422.40M37.40 448.20L60.30 448.20M37.40 422.40L37.40 448.20M60.30 422.40L60.30 448.20M60.30 448.20L200.20 448.20M200.20 422.40L200.20 448.20M200.20 448.20L219.20 448.20M219.20 422.40L219.20 448.20M219.20 448.20L241.50 448.20M241.50 422.40L241.50 448.20M241.50 448.20L260.60 448.20M260.60 422.40L260.60 448.20M260.60 448.20L279.50 448.20M279.50 422.40L279.50 448.20M279.50 448.20L298.60 448.20M298.60 422.40L298.60 448.20M298.60 448.20L317.50 448.20M317.50 422.40L317.50 448.20M317.50 448.20L336.20 448.20M336.20 422.40L336.20 448.20M336.20 448.20L355.30 448.20M355.30 422.40L355.30 448.20M355.30 448.20L373.90 448.20M373.90 422.40L373.90 448.20M373.90 448.20L392.70 448.20M392.70 422.40L392.70 448.20M392.70 448.20L411.50 448.20M411.50 422.40L411.50 448.20M411.50 448.20L430.60 448.20M430.60 422.40L430.60 448.20M430.60 448.20L449.40 448.20M449.40 422.40L449.40 448.20M449.40 448.20L468.60 448.20M468.60 422.40L468.60 448.20M468.60 448.20L487.40 448.20M487.40 422.40L487.40 448.20M487.40 448.20L506.40 448.20M506.40 422.40L506.40 448.20M506.40 448.20L525.30 448.20M525.30 422.40L525.30 448.20M525.30 448.20L544.00 448.20M544.00 422.40L544.00 448.20M544.00 448.20L562.70 448.20M562.70 422.40L562.70 448.20M562.70 448.20L581.50 448.20M581.50 422.40L581.50 448.20M581.50 448.20L600.40 448.20M600.40 422.40L600.40 448.20M600.40 448.20L619.40 448.20M619.40 422.40L619.40 448.20M619.40 448.20L638.50 448.20M638.50 422.40L638.50 448.20M638.50 448.20L657.40 448.20M657.40 422.40L657.40 448.20M657.40 448.20L676.20 448.20M676.20 422.40L676.20 448.20M676.20 448.20L695.20 448.20M695.20 422.40L695.20 448.20M695.20 448.20L714.20 448.20M714.20 422.40L714.20 448.20M714.20 448.20L733.00 448.20M733.00 422.40L733.00 448.20M733.00 448.20L751.40 448.20M751.40 422.40L751.40 448.20M751.40 448.20L770.40 448.20M770.40 422.40L770.40 448.20M770.40 448.20L789.40 448.20M789.40 422.40L789.40 448.20M789.40 448.20L808.40 448.20M808.40 422.40L808.40 448.20M808.40 448.20L827.30 448.20M827.30 422.40L827.30 448.20M827.30 448.20L846.30 448.20M846.30 422.40L846.30 448.20M846.30 448.20L865.10 448.20M865.10 422.40L865.10 448.20M865.10 448.20L884.00 448.20M884.00 422.40L884.00 448.20M884.00 448.20L903.00 448.20M903.00 422.40L903.00 448.20M903.00 448.20L921.70 448.20M921.70 422.40L921.70 448.20M921.70 448.20L940.50 448.20M940.50 422.40L940.50 448.20M940.50 448.20L959.50 448.20M959.50 422.40L959.50 448.20M959.50 448.20L978.50 448.20M978.50 422.40L978.50 448.20M978.50 448.20L997.40 448.20M997.40 422.40L997.40 448.20M997.40 448.20L1016.40 448.20M1016.40 422.40L1016.40 448.20M1016.40 448.20L1035.20 448.20M1035.20 422.40L1035.20 448.20M1035.20 448.20L1054.00 448.20M1054.00 422.40L1054.00 448.20M1054.00 448.20L1072.60 448.20M1072.60 422.40L1072.60 448.20M1072.60 448.20L1091.80 448.20M1091.80 422.40L1091.80 448.20M37.40 485.80L60.30 485.80M37.40 448.20L37.40 485.80M60.30 448.20L60.30 485.80M60.30 485.80L200.20 485.80M200.20 448.20L200.20 485.80M200.20 485.80L219.20 485.80M219.20 448.20L219.20 485.80M219.20 485.80L241.50 485.80M241.50 448.20L241.50 485.80M241.50 485.80L260.60 485.80M260.60 448.20L260.60 485.80M260.60 485.80L279.50 485.80M279.50 448.20L279.50 485.80M279.50 485.80L298.60 485.80M298.60 448.20L298.60 485.80M298.60 485.80L317.50 485.80M317.50 448.20L317.50 485.80M317.50 485.80L336.20 485.80M336.20 448.20L336.20 485.80M336.20 485.80L355.30 485.80M355.30 448.20L355.30 485.80M355.30 485.80L373.90 485.80M373.90 448.20L373.90 485.80M373.90 485.80L392.70 485.80M392.70 448.20L392.70 485.80M392.70 485.80L411.50 485.80M411.50 448.20L411.50 485.80M411.50 485.80L430.60 485.80M430.60 448.20L430.60 485.80M430.60 485.80L449.40 485.80M449.40 448.20L449.40 485.80M449.40 485.80L468.60 485.80M468.60 448.20L468.60 485.80M468.60 485.80L487.40 485.80M487.40 448.20L487.40 485.80M487.40 485.80L506.40 485.80M506.40 448.20L506.40 485.80M506.40 485.80L525.30 485.80M525.30 448.20L525.30 485.80M525.30 485.80L544.00 485.80M544.00 448.20L544.00 485.80M544.00 485.80L562.70 485.80M562.70 448.20L562.70 485.80M562.70 485.80L581.50 485.80M581.50 448.20L581.50 485.80M581.50 485.80L600.40 485.80M600.40 448.20L600.40 485.80M600.40 485.80L619.40 485.80M619.40 448.20L619.40 485.80M619.40 485.80L638.50 485.80M638.50 448.20L638.50 485.80M638.50 485.80L657.40 485.80M657.40 448.20L657.40 485.80M657.40 485.80L676.20 485.80M676.20 448.20L676.20 485.80M676.20 485.80L695.20 485.80M695.20 448.20L695.20 485.80M695.20 485.80L714.20 485.80M714.20 448.20L714.20 485.80M714.20 485.80L733.00 485.80M733.00 448.20L733.00 485.80M733.00 485.80L751.40 485.80M751.40 448.20L751.40 485.80M751.40 485.80L770.40 485.80M770.40 448.20L770.40 485.80M770.40 485.80L789.40 485.80M789.40 448.20L789.40 485.80M789.40 485.80L808.40 485.80M808.40 448.20L808.40 485.80M808.40 485.80L827.30 485.80M827.30 448.20L827.30 485.80M827.30 485.80L846.30 485.80M846.30 448.20L846.30 485.80M846.30 485.80L865.10 485.80M865.10 448.20L865.10 485.80M865.10 485.80L884.00 485.80M884.00 448.20L884.00 485.80M884.00 485.80L903.00 485.80M903.00 448.20L903.00 485.80M903.00 485.80L921.70 485.80M921.70 448.20L921.70 485.80M921.70 485.80L940.50 485.80M940.50 448.20L940.50 485.80M940.50 485.80L959.50 485.80M959.50 448.20L959.50 485.80M959.50 485.80L978.50 485.80M978.50 448.20L978.50 485.80M978.50 485.80L997.40 485.80M997.40 448.20L997.40 485.80M997.40 485.80L1016.40 485.80M1016.40 448.20L1016.40 485.80M1016.40 485.80L1035.20 485.80M1035.20 448.20L1035.20 485.80M1035.20 485.80L1054.00 485.80M1054.00 448.20L1054.00 485.80M1054.00 485.80L1072.60 485.80M1072.60 448.20L1072.60 485.80M1072.60 485.80L1091.80 485.80M1091.80 448.20L1091.80 485.80M37.40 504.80L60.30 504.80M37.40 485.80L37.40 504.80M60.30 485.80L60.30 504.80M60.30 504.80L200.20 504.80M200.20 485.80L200.20 504.80M200.20 504.80L219.20 504.80M219.20 485.80L219.20 504.80M219.20 504.80L241.50 504.80M241.50 485.80L241.50 504.80M241.50 504.80L260.60 504.80M260.60 485.80L260.60 504.80M260.60 504.80L279.50 504.80M279.50 485.80L279.50 504.80M279.50 504.80L298.60 504.80M298.60 485.80L298.60 504.80M298.60 504.80L317.50 504.80M317.50 485.80L317.50 504.80M317.50 504.80L336.20 504.80M336.20 485.80L336.20 504.80M336.20 504.80L355.30 504.80M355.30 485.80L355.30 504.80M355.30 504.80L373.90 504.80M373.90 485.80L373.90 504.80M373.90 504.80L392.70 504.80M392.70 485.80L392.70 504.80M392.70 504.80L411.50 504.80M411.50 485.80L411.50 504.80M411.50 504.80L430.60 504.80M430.60 485.80L430.60 504.80M430.60 504.80L449.40 504.80M449.40 485.80L449.40 504.80M449.40 504.80L468.60 504.80M468.60 485.80L468.60 504.80M468.60 504.80L487.40 504.80M487.40 485.80L487.40 504.80M487.40 504.80L506.40 504.80M506.40 485.80L506.40 504.80M506.40 504.80L525.30 504.80M525.30 485.80L525.30 504.80M525.30 504.80L544.00 504.80M544.00 485.80L544.00 504.80M544.00 504.80L562.70 504.80M562.70 485.80L562.70 504.80M562.70 504.80L581.50 504.80M581.50 485.80L581.50 504.80M581.50 504.80L600.40 504.80M600.40 485.80L600.40 504.80M600.40 504.80L619.40 504.80M619.40 485.80L619.40 504.80M619.40 504.80L638.50 504.80M638.50 485.80L638.50 504.80M638.50 504.80L657.40 504.80M657.40 485.80L657.40 504.80M657.40 504.80L676.20 504.80M676.20 485.80L676.20 504.80M676.20 504.80L695.20 504.80M695.20 485.80L695.20 504.80M695.20 504.80L714.20 504.80M714.20 485.80L714.20 504.80M714.20 504.80L733.00 504.80M733.00 485.80L733.00 504.80M733.00 504.80L751.40 504.80M751.40 485.80L751.40 504.80M751.40 504.80L770.40 504.80M770.40 485.80L770.40 504.80M770.40 504.80L789.40 504.80M789.40 485.80L789.40 504.80M789.40 504.80L808.40 504.80M808.40 485.80L808.40 504.80M808.40 504.80L827.30 504.80M827.30 485.80L827.30 504.80M827.30 504.80L846.30 504.80M846.30 485.80L846.30 504.80M846.30 504.80L865.10 504.80M865.10 485.80L865.10 504.80M865.10 504.80L884.00 504.80M884.00 485.80L884.00 504.80M884.00 504.80L903.00 504.80M903.00 485.80L903.00 504.80M903.00 504.80L921.70 504.80M921.70 485.80L921.70 504.80M921.70 504.80L940.50 504.80M940.50 485.80L940.50 504.80M940.50 504.80L959.50 504.80M959.50 485.80L959.50 504.80M959.50 504.80L978.50 504.80M978.50 485.80L978.50 504.80M978.50 504.80L997.40 504.80M997.40 485.80L997.40 504.80M997.40 504.80L1016.40 504.80M1016.40 485.80L1016.40 504.80M1016.40 504.80L1035.20 504.80M1035.20 485.80L1035.20 504.80M1035.20 504.80L1054.00 504.80M1054.00 485.80L1054.00 504.80M1054.00 504.80L1072.60 504.80M1072.60 485.80L1072.60 504.80M1072.60 504.80L1091.80 504.80M1091.80 485.80L1091.80 504.80M37.40 523.80L60.30 523.80M37.40 504.80L37.40 523.80M60.30 504.80L60.30 523.80M60.30 523.80L200.20 523.80M200.20 504.80L200.20 523.80M200.20 523.80L219.20 523.80M219.20 504.80L219.20 523.80M219.20 523.80L241.50 523.80M241.50 504.80L241.50 523.80M241.50 523.80L260.60 523.80M260.60 504.80L260.60 523.80M260.60 523.80L279.50 523.80M279.50 504.80L279.50 523.80M279.50 523.80L298.60 523.80M298.60 504.80L298.60 523.80M298.60 523.80L317.50 523.80M317.50 504.80L317.50 523.80M317.50 523.80L336.20 523.80M336.20 504.80L336.20 523.80M336.20 523.80L355.30 523.80M355.30 504.80L355.30 523.80M355.30 523.80L373.90 523.80M373.90 504.80L373.90 523.80M373.90 523.80L392.70 523.80M392.70 504.80L392.70 523.80M392.70 523.80L411.50 523.80M411.50 504.80L411.50 523.80M411.50 523.80L430.60 523.80M430.60 504.80L430.60 523.80M430.60 523.80L449.40 523.80M449.40 504.80L449.40 523.80M449.40 523.80L468.60 523.80M468.60 504.80L468.60 523.80M468.60 523.80L487.40 523.80M487.40 504.80L487.40 523.80M487.40 523.80L506.40 523.80M506.40 504.80L506.40 523.80M506.40 523.80L525.30 523.80M525.30 504.80L525.30 523.80M525.30 523.80L544.00 523.80M544.00 504.80L544.00 523.80M544.00 523.80L562.70 523.80M562.70 504.80L562.70 523.80M562.70 523.80L581.50 523.80M581.50 504.80L581.50 523.80M581.50 523.80L600.40 523.80M600.40 504.80L600.40 523.80M600.40 523.80L619.40 523.80M619.40 504.80L619.40 523.80M619.40 523.80L638.50 523.80M638.50 504.80L638.50 523.80M638.50 523.80L657.40 523.80M657.40 504.80L657.40 523.80M657.40 523.80L676.20 523.80M676.20 504.80L676.20 523.80M676.20 523.80L695.20 523.80M695.20 504.80L695.20 523.80M695.20 523.80L714.20 523.80M714.20 504.80L714.20 523.80M714.20 523.80L733.00 523.80M733.00 504.80L733.00 523.80M733.00 523.80L751.40 523.80M751.40 504.80L751.40 523.80M751.40 523.80L770.40 523.80M770.40 504.80L770.40 523.80M770.40 523.80L789.40 523.80M789.40 504.80L789.40 523.80M789.40 523.80L808.40 523.80M808.40 504.80L808.40 523.80M808.40 523.80L827.30 523.80M827.30 504.80L827.30 523.80M827.30 523.80L846.30 523.80M846.30 504.80L846.30 523.80M846.30 523.80L865.10 523.80M865.10 504.80L865.10 523.80M865.10 523.80L884.00 523.80M884.00 504.80L884.00 523.80M884.00 523.80L903.00 523.80M903.00 504.80L903.00 523.80M903.00 523.80L921.70 523.80M921.70 504.80L921.70 523.80M921.70 523.80L940.50 523.80M940.50 504.80L940.50 523.80M940.50 523.80L959.50 523.80M959.50 504.80L959.50 523.80M959.50 523.80L978.50 523.80M978.50 504.80L978.50 523.80M978.50 523.80L997.40 523.80M997.40 504.80L997.40 523.80M997.40 523.80L1016.40 523.80M1016.40 504.80L1016.40 523.80M1016.40 523.80L1035.20 523.80M1035.20 504.80L1035.20 523.80M1035.20 523.80L1054.00 523.80M1054.00 504.80L1054.00 523.80M1054.00 523.80L1072.60 523.80M1072.60 504.80L1072.60 523.80M1072.60 523.80L1091.80 523.80M1091.80 504.80L1091.80 523.80M37.40 542.80L60.30 542.80M37.40 523.80L37.40 542.80M60.30 523.80L60.30 542.80M60.30 542.80L200.20 542.80M200.20 523.80L200.20 542.80M200.20 542.80L219.20 542.80M219.20 523.80L219.20 542.80M219.20 542.80L241.50 542.80M241.50 523.80L241.50 542.80M241.50 542.80L260.60 542.80M260.60 523.80L260.60 542.80M260.60 542.80L279.50 542.80M279.50 523.80L279.50 542.80M279.50 542.80L298.60 542.80M298.60 523.80L298.60 542.80M298.60 542.80L317.50 542.80M317.50 523.80L317.50 542.80M317.50 542.80L336.20 542.80M336.20 523.80L336.20 542.80M336.20 542.80L355.30 542.80M355.30 523.80L355.30 542.80M355.30 542.80L373.90 542.80M373.90 523.80L373.90 542.80M373.90 542.80L392.70 542.80M392.70 523.80L392.70 542.80M392.70 542.80L411.50 542.80M411.50 523.80L411.50 542.80M411.50 542.80L430.60 542.80M430.60 523.80L430.60 542.80M430.60 542.80L449.40 542.80M449.40 523.80L449.40 542.80M449.40 542.80L468.60 542.80M468.60 523.80L468.60 542.80M468.60 542.80L487.40 542.80M487.40 523.80L487.40 542.80M487.40 542.80L506.40 542.80M506.40 523.80L506.40 542.80M506.40 542.80L525.30 542.80M525.30 523.80L525.30 542.80M525.30 542.80L544.00 542.80M544.00 523.80L544.00 542.80M544.00 542.80L562.70 542.80M562.70 523.80L562.70 542.80M562.70 542.80L581.50 542.80M581.50 523.80L581.50 542.80M581.50 542.80L600.40 542.80M600.40 523.80L600.40 542.80M600.40 542.80L619.40 542.80M619.40 523.80L619.40 542.80M619.40 542.80L638.50 542.80M638.50 523.80L638.50 542.80M638.50 542.80L657.40 542.80M657.40 523.80L657.40 542.80M657.40 542.80L676.20 542.80M676.20 523.80L676.20 542.80M676.20 542.80L695.20 542.80M695.20 523.80L695.20 542.80M695.20 542.80L714.20 542.80M714.20 523.80L714.20 542.80M714.20 542.80L733.00 542.80M733.00 523.80L733.00 542.80M733.00 542.80L751.40 542.80M751.40 523.80L751.40 542.80M751.40 542.80L770.40 542.80M770.40 523.80L770.40 542.80M770.40 542.80L789.40 542.80M789.40 523.80L789.40 542.80M789.40 542.80L808.40 542.80M808.40 523.80L808.40 542.80M808.40 542.80L827.30 542.80M827.30 523.80L827.30 542.80M827.30 542.80L846.30 542.80M846.30 523.80L846.30 542.80M846.30 542.80L865.10 542.80M865.10 523.80L865.10 542.80M865.10 542.80L884.00 542.80M884.00 523.80L884.00 542.80M884.00 542.80L903.00 542.80M903.00 523.80L903.00 542.80M903.00 542.80L921.70 542.80M921.70 523.80L921.70 542.80M921.70 542.80L940.50 542.80M940.50 523.80L940.50 542.80M940.50 542.80L959.50 542.80M959.50 523.80L959.50 542.80M959.50 542.80L978.50 542.80M978.50 523.80L978.50 542.80M978.50 542.80L997.40 542.80M997.40 523.80L997.40 542.80M997.40 542.80L1016.40 542.80M1016.40 523.80L1016.40 542.80M1016.40 542.80L1035.20 542.80M1035.20 523.80L1035.20 542.80M1035.20 542.80L1054.00 542.80M1054.00 523.80L1054.00 542.80M1054.00 542.80L1072.60 542.80M1072.60 523.80L1072.60 542.80M1072.60 542.80L1091.80 542.80M1091.80 523.80L1091.80 542.80M37.40 568.60L60.30 568.60M37.40 542.80L37.40 568.60M60.30 542.80L60.30 568.60M60.30 568.60L200.20 568.60M200.20 542.80L200.20 568.60M200.20 568.60L219.20 568.60M219.20 542.80L219.20 568.60M219.20 568.60L241.50 568.60M241.50 542.80L241.50 568.60M241.50 568.60L260.60 568.60M260.60 542.80L260.60 568.60M260.60 568.60L279.50 568.60M279.50 542.80L279.50 568.60M279.50 568.60L298.60 568.60M298.60 542.80L298.60 568.60M298.60 568.60L317.50 568.60M317.50 542.80L317.50 568.60M317.50 568.60L336.20 568.60M336.20 542.80L336.20 568.60M336.20 568.60L355.30 568.60M355.30 542.80L355.30 568.60M355.30 568.60L373.90 568.60M373.90 542.80L373.90 568.60M373.90 568.60L392.70 568.60M392.70 542.80L392.70 568.60M392.70 568.60L411.50 568.60M411.50 542.80L411.50 568.60M411.50 568.60L430.60 568.60M430.60 542.80L430.60 568.60M430.60 568.60L449.40 568.60M449.40 542.80L449.40 568.60M449.40 568.60L468.60 568.60M468.60 542.80L468.60 568.60M468.60 568.60L487.40 568.60M487.40 542.80L487.40 568.60M487.40 568.60L506.40 568.60M506.40 542.80L506.40 568.60M506.40 568.60L525.30 568.60M525.30 542.80L525.30 568.60M525.30 568.60L544.00 568.60M544.00 542.80L544.00 568.60M544.00 568.60L562.70 568.60M562.70 542.80L562.70 568.60M562.70 568.60L581.50 568.60M581.50 542.80L581.50 568.60M581.50 568.60L600.40 568.60M600.40 542.80L600.40 568.60M600.40 568.60L619.40 568.60M619.40 542.80L619.40 568.60M619.40 568.60L638.50 568.60M638.50 542.80L638.50 568.60M638.50 568.60L657.40 568.60M657.40 542.80L657.40 568.60M657.40 568.60L676.20 568.60M676.20 542.80L676.20 568.60M676.20 568.60L695.20 568.60M695.20 542.80L695.20 568.60M695.20 568.60L714.20 568.60M714.20 542.80L714.20 568.60M714.20 568.60L733.00 568.60M733.00 542.80L733.00 568.60M733.00 568.60L751.40 568.60M751.40 542.80L751.40 568.60M751.40 568.60L770.40 568.60M770.40 542.80L770.40 568.60M770.40 568.60L789.40 568.60M789.40 542.80L789.40 568.60M789.40 568.60L808.40 568.60M808.40 542.80L808.40 568.60M808.40 568.60L827.30 568.60M827.30 542.80L827.30 568.60M827.30 568.60L846.30 568.60M846.30 542.80L846.30 568.60M846.30 568.60L865.10 568.60M865.10 542.80L865.10 568.60M865.10 568.60L884.00 568.60M884.00 542.80L884.00 568.60M884.00 568.60L903.00 568.60M903.00 542.80L903.00 568.60M903.00 568.60L921.70 568.60M921.70 542.80L921.70 568.60M921.70 568.60L940.50 568.60M940.50 542.80L940.50 568.60M940.50 568.60L959.50 568.60M959.50 542.80L959.50 568.60M959.50 568.60L978.50 568.60M978.50 542.80L978.50 568.60M978.50 568.60L997.40 568.60M997.40 542.80L997.40 568.60M997.40 568.60L1016.40 568.60M1016.40 542.80L1016.40 568.60M1016.40 568.60L1035.20 568.60M1035.20 542.80L1035.20 568.60M1035.20 568.60L1054.00 568.60M1054.00 542.80L1054.00 568.60M1054.00 568.60L1072.60 568.60M1072.60 542.80L1072.60 568.60M1072.60 568.60L1091.80 568.60M1091.80 542.80L1091.80 568.60M37.40 606.20L60.30 606.20M37.40 568.60L37.40 606.20M60.30 568.60L60.30 606.20M60.30 606.20L200.20 606.20M200.20 568.60L200.20 606.20M200.20 606.20L219.20 606.20M219.20 568.60L219.20 606.20M219.20 606.20L241.50 606.20M241.50 568.60L241.50 606.20M241.50 606.20L260.60 606.20M260.60 568.60L260.60 606.20M260.60 606.20L279.50 606.20M279.50 568.60L279.50 606.20M279.50 606.20L298.60 606.20M298.60 568.60L298.60 606.20M298.60 606.20L317.50 606.20M317.50 568.60L317.50 606.20M317.50 606.20L336.20 606.20M336.20 568.60L336.20 606.20M336.20 606.20L355.30 606.20M355.30 568.60L355.30 606.20M355.30 606.20L373.90 606.20M373.90 568.60L373.90 606.20M373.90 606.20L392.70 606.20M392.70 568.60L392.70 606.20M392.70 606.20L411.50 606.20M411.50 568.60L411.50 606.20M411.50 606.20L430.60 606.20M430.60 568.60L430.60 606.20M430.60 606.20L449.40 606.20M449.40 568.60L449.40 606.20M449.40 606.20L468.60 606.20M468.60 568.60L468.60 606.20M468.60 606.20L487.40 606.20M487.40 568.60L487.40 606.20M487.40 606.20L506.40 606.20M506.40 568.60L506.40 606.20M506.40 606.20L525.30 606.20M525.30 568.60L525.30 606.20M525.30 606.20L544.00 606.20M544.00 568.60L544.00 606.20M544.00 606.20L562.70 606.20M562.70 568.60L562.70 606.20M562.70 606.20L581.50 606.20M581.50 568.60L581.50 606.20M581.50 606.20L600.40 606.20M600.40 568.60L600.40 606.20M600.40 606.20L619.40 606.20M619.40 568.60L619.40 606.20M619.40 606.20L638.50 606.20M638.50 568.60L638.50 606.20M638.50 606.20L657.40 606.20M657.40 568.60L657.40 606.20M657.40 606.20L676.20 606.20M676.20 568.60L676.20 606.20M676.20 606.20L695.20 606.20M695.20 568.60L695.20 606.20M695.20 606.20L714.20 606.20M714.20 568.60L714.20 606.20M714.20 606.20L733.00 606.20M733.00 568.60L733.00 606.20M733.00 606.20L751.40 606.20M751.40 568.60L751.40 606.20M751.40 606.20L770.40 606.20M770.40 568.60L770.40 606.20M770.40 606.20L789.40 606.20M789.40 568.60L789.40 606.20M789.40 606.20L808.40 606.20M808.40 568.60L808.40 606.20M808.40 606.20L827.30 606.20M827.30 568.60L827.30 606.20M827.30 606.20L846.30 606.20M846.30 568.60L846.30 606.20M846.30 606.20L865.10 606.20M865.10 568.60L865.10 606.20M865.10 606.20L884.00 606.20M884.00 568.60L884.00 606.20M884.00 606.20L903.00 606.20M903.00 568.60L903.00 606.20M903.00 606.20L921.70 606.20M921.70 568.60L921.70 606.20M921.70 606.20L940.50 606.20M940.50 568.60L940.50 606.20M940.50 606.20L959.50 606.20M959.50 568.60L959.50 606.20M959.50 606.20L978.50 606.20M978.50 568.60L978.50 606.20M978.50 606.20L997.40 606.20M997.40 568.60L997.40 606.20M997.40 606.20L1016.40 606.20M1016.40 568.60L1016.40 606.20M1016.40 606.20L1035.20 606.20M1035.20 568.60L1035.20 606.20M1035.20 606.20L1054.00 606.20M1054.00 568.60L1054.00 606.20M1054.00 606.20L1072.60 606.20M1072.60 568.60L1072.60 606.20M1072.60 606.20L1091.80 606.20M1091.80 568.60L1091.80 606.20M37.40 625.20L60.30 625.20M37.40 606.20L37.40 625.20M60.30 606.20L60.30 625.20M60.30 625.20L200.20 625.20M200.20 606.20L200.20 625.20M200.20 625.20L219.20 625.20M219.20 606.20L219.20 625.20M219.20 625.20L241.50 625.20M241.50 606.20L241.50 625.20M241.50 625.20L260.60 625.20M260.60 606.20L260.60 625.20M260.60 625.20L279.50 625.20M279.50 606.20L279.50 625.20M279.50 625.20L298.60 625.20M298.60 606.20L298.60 625.20M298.60 625.20L317.50 625.20M317.50 606.20L317.50 625.20M317.50 625.20L336.20 625.20M336.20 606.20L336.20 625.20M336.20 625.20L355.30 625.20M355.30 606.20L355.30 625.20M355.30 625.20L373.90 625.20M373.90 606.20L373.90 625.20M373.90 625.20L392.70 625.20M392.70 606.20L392.70 625.20M392.70 625.20L411.50 625.20M411.50 606.20L411.50 625.20M411.50 625.20L430.60 625.20M430.60 606.20L430.60 625.20M430.60 625.20L449.40 625.20M449.40 606.20L449.40 625.20M449.40 625.20L468.60 625.20M468.60 606.20L468.60 625.20M468.60 625.20L487.40 625.20M487.40 606.20L487.40 625.20M487.40 625.20L506.40 625.20M506.40 606.20L506.40 625.20M506.40 625.20L525.30 625.20M525.30 606.20L525.30 625.20M525.30 625.20L544.00 625.20M544.00 606.20L544.00 625.20M544.00 625.20L562.70 625.20M562.70 606.20L562.70 625.20M562.70 625.20L581.50 625.20M581.50 606.20L581.50 625.20M581.50 625.20L600.40 625.20M600.40 606.20L600.40 625.20M600.40 625.20L619.40 625.20M619.40 606.20L619.40 625.20M619.40 625.20L638.50 625.20M638.50 606.20L638.50 625.20M638.50 625.20L657.40 625.20M657.40 606.20L657.40 625.20M657.40 625.20L676.20 625.20M676.20 606.20L676.20 625.20M676.20 625.20L695.20 625.20M695.20 606.20L695.20 625.20M695.20 625.20L714.20 625.20M714.20 606.20L714.20 625.20M714.20 625.20L733.00 625.20M733.00 606.20L733.00 625.20M733.00 625.20L751.40 625.20M751.40 606.20L751.40 625.20M751.40 625.20L770.40 625.20M770.40 606.20L770.40 625.20M770.40 625.20L789.40 625.20M789.40 606.20L789.40 625.20M789.40 625.20L808.40 625.20M808.40 606.20L808.40 625.20M808.40 625.20L827.30 625.20M827.30 606.20L827.30 625.20M827.30 625.20L846.30 625.20M846.30 606.20L846.30 625.20M846.30 625.20L865.10 625.20M865.10 606.20L865.10 625.20M865.10 625.20L884.00 625.20M884.00 606.20L884.00 625.20M884.00 625.20L903.00 625.20M903.00 606.20L903.00 625.20M903.00 625.20L921.70 625.20M921.70 606.20L921.70 625.20M921.70 625.20L940.50 625.20M940.50 606.20L940.50 625.20M940.50 625.20L959.50 625.20M959.50 606.20L959.50 625.20M959.50 625.20L978.50 625.20M978.50 606.20L978.50 625.20M978.50 625.20L997.40 625.20M997.40 606.20L997.40 625.20M997.40 625.20L1016.40 625.20M1016.40 606.20L1016.40 625.20M1016.40 625.20L1035.20 625.20M1035.20 606.20L1035.20 625.20M1035.20 625.20L1054.00 625.20M1054.00 606.20L1054.00 625.20M1054.00 625.20L1072.60 625.20M1072.60 606.20L1072.60 625.20M1072.60 625.20L1091.80 625.20M1091.80 606.20L1091.80 625.20M37.40 644.20L60.30 644.20M37.40 625.20L37.40 644.20M60.30 625.20L60.30 644.20M60.30 644.20L200.20 644.20M200.20 625.20L200.20 644.20M200.20 644.20L219.20 644.20M219.20 625.20L219.20 644.20M219.20 644.20L241.50 644.20M241.50 625.20L241.50 644.20M241.50 644.20L260.60 644.20M260.60 625.20L260.60 644.20M260.60 644.20L279.50 644.20M279.50 625.20L279.50 644.20M279.50 644.20L298.60 644.20M298.60 625.20L298.60 644.20M298.60 644.20L317.50 644.20M317.50 625.20L317.50 644.20M317.50 644.20L336.20 644.20M336.20 625.20L336.20 644.20M336.20 644.20L355.30 644.20M355.30 625.20L355.30 644.20M355.30 644.20L373.90 644.20M373.90 625.20L373.90 644.20M373.90 644.20L392.70 644.20M392.70 625.20L392.70 644.20M392.70 644.20L411.50 644.20M411.50 625.20L411.50 644.20M411.50 644.20L430.60 644.20M430.60 625.20L430.60 644.20M430.60 644.20L449.40 644.20M449.40 625.20L449.40 644.20M449.40 644.20L468.60 644.20M468.60 625.20L468.60 644.20M468.60 644.20L487.40 644.20M487.40 625.20L487.40 644.20M487.40 644.20L506.40 644.20M506.40 625.20L506.40 644.20M506.40 644.20L525.30 644.20M525.30 625.20L525.30 644.20M525.30 644.20L544.00 644.20M544.00 625.20L544.00 644.20M544.00 644.20L562.70 644.20M562.70 625.20L562.70 644.20M562.70 644.20L581.50 644.20M581.50 625.20L581.50 644.20M581.50 644.20L600.40 644.20M600.40 625.20L600.40 644.20M600.40 644.20L619.40 644.20M619.40 625.20L619.40 644.20M619.40 644.20L638.50 644.20M638.50 625.20L638.50 644.20M638.50 644.20L657.40 644.20M657.40 625.20L657.40 644.20M657.40 644.20L676.20 644.20M676.20 625.20L676.20 644.20M676.20 644.20L695.20 644.20M695.20 625.20L695.20 644.20M695.20 644.20L714.20 644.20M714.20 625.20L714.20 644.20M714.20 644.20L733.00 644.20M733.00 625.20L733.00 644.20M733.00 644.20L751.40 644.20M751.40 625.20L751.40 644.20M751.40 644.20L770.40 644.20M770.40 625.20L770.40 644.20M770.40 644.20L789.40 644.20M789.40 625.20L789.40 644.20M789.40 644.20L808.40 644.20M808.40 625.20L808.40 644.20M808.40 644.20L827.30 644.20M827.30 625.20L827.30 644.20M827.30 644.20L846.30 644.20M846.30 625.20L846.30 644.20M846.30 644.20L865.10 644.20M865.10 625.20L865.10 644.20M865.10 644.20L884.00 644.20M884.00 625.20L884.00 644.20M884.00 644.20L903.00 644.20M903.00 625.20L903.00 644.20M903.00 644.20L921.70 644.20M921.70 625.20L921.70 644.20M921.70 644.20L940.50 644.20M940.50 625.20L940.50 644.20M940.50 644.20L959.50 644.20M959.50 625.20L959.50 644.20M959.50 644.20L978.50 644.20M978.50 625.20L978.50 644.20M978.50 644.20L997.40 644.20M997.40 625.20L997.40 644.20M997.40 644.20L1016.40 644.20M1016.40 625.20L1016.40 644.20M1016.40 644.20L1035.20 644.20M1035.20 625.20L1035.20 644.20M1035.20 644.20L1054.00 644.20M1054.00 625.20L1054.00 644.20M1054.00 644.20L1072.60 644.20M1072.60 625.20L1072.60 644.20M1072.60 644.20L1091.80 644.20M1091.80 625.20L1091.80 644.20M37.40 663.20L60.30 663.20M37.40 644.20L37.40 663.20M60.30 644.20L60.30 663.20M60.30 663.20L200.20 663.20M200.20 644.20L200.20 663.20M200.20 663.20L219.20 663.20M219.20 644.20L219.20 663.20M219.20 663.20L241.50 663.20M241.50 644.20L241.50 663.20M241.50 663.20L260.60 663.20M260.60 644.20L260.60 663.20M260.60 663.20L279.50 663.20M279.50 644.20L279.50 663.20M279.50 663.20L298.60 663.20M298.60 644.20L298.60 663.20M298.60 663.20L317.50 663.20M317.50 644.20L317.50 663.20M317.50 663.20L336.20 663.20M336.20 644.20L336.20 663.20M336.20 663.20L355.30 663.20M355.30 644.20L355.30 663.20M355.30 663.20L373.90 663.20M373.90 644.20L373.90 663.20M373.90 663.20L392.70 663.20M392.70 644.20L392.70 663.20M392.70 663.20L411.50 663.20M411.50 644.20L411.50 663.20M411.50 663.20L430.60 663.20M430.60 644.20L430.60 663.20M430.60 663.20L449.40 663.20M449.40 644.20L449.40 663.20M449.40 663.20L468.60 663.20M468.60 644.20L468.60 663.20M468.60 663.20L487.40 663.20M487.40 644.20L487.40 663.20M487.40 663.20L506.40 663.20M506.40 644.20L506.40 663.20M506.40 663.20L525.30 663.20M525.30 644.20L525.30 663.20M525.30 663.20L544.00 663.20M544.00 644.20L544.00 663.20M544.00 663.20L562.70 663.20M562.70 644.20L562.70 663.20M562.70 663.20L581.50 663.20M581.50 644.20L581.50 663.20M581.50 663.20L600.40 663.20M600.40 644.20L600.40 663.20M600.40 663.20L619.40 663.20M619.40 644.20L619.40 663.20M619.40 663.20L638.50 663.20M638.50 644.20L638.50 663.20M638.50 663.20L657.40 663.20M657.40 644.20L657.40 663.20M657.40 663.20L676.20 663.20M676.20 644.20L676.20 663.20M676.20 663.20L695.20 663.20M695.20 644.20L695.20 663.20M695.20 663.20L714.20 663.20M714.20 644.20L714.20 663.20M714.20 663.20L733.00 663.20M733.00 644.20L733.00 663.20M733.00 663.20L751.40 663.20M751.40 644.20L751.40 663.20M751.40 663.20L770.40 663.20M770.40 644.20L770.40 663.20M770.40 663.20L789.40 663.20M789.40 644.20L789.40 663.20M789.40 663.20L808.40 663.20M808.40 644.20L808.40 663.20M808.40 663.20L827.30 663.20M827.30 644.20L827.30 663.20M827.30 663.20L846.30 663.20M846.30 644.20L846.30 663.20M846.30 663.20L865.10 663.20M865.10 644.20L865.10 663.20M865.10 663.20L884.00 663.20M884.00 644.20L884.00 663.20M884.00 663.20L903.00 663.20M903.00 644.20L903.00 663.20M903.00 663.20L921.70 663.20M921.70 644.20L921.70 663.20M921.70 663.20L940.50 663.20M940.50 644.20L940.50 663.20M940.50 663.20L959.50 663.20M959.50 644.20L959.50 663.20M959.50 663.20L978.50 663.20M978.50 644.20L978.50 663.20M978.50 663.20L997.40 663.20M997.40 644.20L997.40 663.20M997.40 663.20L1016.40 663.20M1016.40 644.20L1016.40 663.20M1016.40 663.20L1035.20 663.20M1035.20 644.20L1035.20 663.20M1035.20 663.20L1054.00 663.20M1054.00 644.20L1054.00 663.20M1054.00 663.20L1072.60 663.20M1072.60 644.20L1072.60 663.20M1072.60 663.20L1091.80 663.20M1091.80 644.20L1091.80 663.20M37.40 689.00L60.30 689.00M37.40 663.20L37.40 689.00M60.30 663.20L60.30 689.00M60.30 689.00L200.20 689.00M200.20 663.20L200.20 689.00M200.20 689.00L219.20 689.00M219.20 663.20L219.20 689.00M219.20 689.00L241.50 689.00M241.50 663.20L241.50 689.00M241.50 689.00L260.60 689.00M260.60 663.20L260.60 689.00M260.60 689.00L279.50 689.00M279.50 663.20L279.50 689.00M279.50 689.00L298.60 689.00M298.60 663.20L298.60 689.00M298.60 689.00L317.50 689.00M317.50 663.20L317.50 689.00M317.50 689.00L336.20 689.00M336.20 663.20L336.20 689.00M336.20 689.00L355.30 689.00M355.30 663.20L355.30 689.00M355.30 689.00L373.90 689.00M373.90 663.20L373.90 689.00M373.90 689.00L392.70 689.00M392.70 663.20L392.70 689.00M392.70 689.00L411.50 689.00M411.50 663.20L411.50 689.00M411.50 689.00L430.60 689.00M430.60 663.20L430.60 689.00M430.60 689.00L449.40 689.00M449.40 663.20L449.40 689.00M449.40 689.00L468.60 689.00M468.60 663.20L468.60 689.00M468.60 689.00L487.40 689.00M487.40 663.20L487.40 689.00M487.40 689.00L506.40 689.00M506.40 663.20L506.40 689.00M506.40 689.00L525.30 689.00M525.30 663.20L525.30 689.00M525.30 689.00L544.00 689.00M544.00 663.20L544.00 689.00M544.00 689.00L562.70 689.00M562.70 663.20L562.70 689.00M562.70 689.00L581.50 689.00M581.50 663.20L581.50 689.00M581.50 689.00L600.40 689.00M600.40 663.20L600.40 689.00M600.40 689.00L619.40 689.00M619.40 663.20L619.40 689.00M619.40 689.00L638.50 689.00M638.50 663.20L638.50 689.00M638.50 689.00L657.40 689.00M657.40 663.20L657.40 689.00M657.40 689.00L676.20 689.00M676.20 663.20L676.20 689.00M676.20 689.00L695.20 689.00M695.20 663.20L695.20 689.00M695.20 689.00L714.20 689.00M714.20 663.20L714.20 689.00M714.20 689.00L733.00 689.00M733.00 663.20L733.00 689.00M733.00 689.00L751.40 689.00M751.40 663.20L751.40 689.00M751.40 689.00L770.40 689.00M770.40 663.20L770.40 689.00M770.40 689.00L789.40 689.00M789.40 663.20L789.40 689.00M789.40 689.00L808.40 689.00M808.40 663.20L808.40 689.00M808.40 689.00L827.30 689.00M827.30 663.20L827.30 689.00M827.30 689.00L846.30 689.00M846.30 663.20L846.30 689.00M846.30 689.00L865.10 689.00M865.10 663.20L865.10 689.00M865.10 689.00L884.00 689.00M884.00 663.20L884.00 689.00M884.00 689.00L903.00 689.00M903.00 663.20L903.00 689.00M903.00 689.00L921.70 689.00M921.70 663.20L921.70 689.00M921.70 689.00L940.50 689.00M940.50 663.20L940.50 689.00M940.50 689.00L959.50 689.00M959.50 663.20L959.50 689.00M959.50 689.00L978.50 689.00M978.50 663.20L978.50 689.00M978.50 689.00L997.40 689.00M997.40 663.20L997.40 689.00M997.40 689.00L1016.40 689.00M1016.40 663.20L1016.40 689.00M1016.40 689.00L1035.20 689.00M1035.20 663.20L1035.20 689.00M1035.20 689.00L1054.00 689.00M1054.00 663.20L1054.00 689.00M1054.00 689.00L1072.60 689.00M1072.60 663.20L1072.60 689.00M1072.60 689.00L1091.80 689.00M1091.80 663.20L1091.80 689.00M37.40 726.60L60.30 726.60M37.40 689.00L37.40 726.60M60.30 689.00L60.30 726.60M60.30 726.60L200.20 726.60M200.20 689.00L200.20 726.60M200.20 726.60L219.20 726.60M219.20 689.00L219.20 726.60M219.20 726.60L241.50 726.60M241.50 689.00L241.50 726.60M241.50 726.60L260.60 726.60M260.60 689.00L260.60 726.60M260.60 726.60L279.50 726.60M279.50 689.00L279.50 726.60M279.50 726.60L298.60 726.60M298.60 689.00L298.60 726.60M298.60 726.60L317.50 726.60M317.50 689.00L317.50 726.60M317.50 726.60L336.20 726.60M336.20 689.00L336.20 726.60M336.20 726.60L355.30 726.60M355.30 689.00L355.30 726.60M355.30 726.60L373.90 726.60M373.90 689.00L373.90 726.60M373.90 726.60L392.70 726.60M392.70 689.00L392.70 726.60M392.70 726.60L411.50 726.60M411.50 689.00L411.50 726.60M411.50 726.60L430.60 726.60M430.60 689.00L430.60 726.60M430.60 726.60L449.40 726.60M449.40 689.00L449.40 726.60M449.40 726.60L468.60 726.60M468.60 689.00L468.60 726.60M468.60 726.60L487.40 726.60M487.40 689.00L487.40 726.60M487.40 726.60L506.40 726.60M506.40 689.00L506.40 726.60M506.40 726.60L525.30 726.60M525.30 689.00L525.30 726.60M525.30 726.60L544.00 726.60M544.00 689.00L544.00 726.60M544.00 726.60L562.70 726.60M562.70 689.00L562.70 726.60M562.70 726.60L581.50 726.60M581.50 689.00L581.50 726.60M581.50 726.60L600.40 726.60M600.40 689.00L600.40 726.60M600.40 726.60L619.40 726.60M619.40 689.00L619.40 726.60M619.40 726.60L638.50 726.60M638.50 689.00L638.50 726.60M638.50 726.60L657.40 726.60M657.40 689.00L657.40 726.60M657.40 726.60L676.20 726.60M676.20 689.00L676.20 726.60M676.20 726.60L695.20 726.60M695.20 689.00L695.20 726.60M695.20 726.60L714.20 726.60M714.20 689.00L714.20 726.60M714.20 726.60L733.00 726.60M733.00 689.00L733.00 726.60M733.00 726.60L751.40 726.60M751.40 689.00L751.40 726.60M751.40 726.60L770.40 726.60M770.40 689.00L770.40 726.60M770.40 726.60L789.40 726.60M789.40 689.00L789.40 726.60M789.40 726.60L808.40 726.60M808.40 689.00L808.40 726.60M808.40 726.60L827.30 726.60M827.30 689.00L827.30 726.60M827.30 726.60L846.30 726.60M846.30 689.00L846.30 726.60M846.30 726.60L865.10 726.60M865.10 689.00L865.10 726.60M865.10 726.60L884.00 726.60M884.00 689.00L884.00 726.60M884.00 726.60L903.00 726.60M903.00 689.00L903.00 726.60M903.00 726.60L921.70 726.60M921.70 689.00L921.70 726.60M921.70 726.60L940.50 726.60M940.50 689.00L940.50 726.60M940.50 726.60L959.50 726.60M959.50 689.00L959.50 726.60M959.50 726.60L978.50 726.60M978.50 689.00L978.50 726.60M978.50 726.60L997.40 726.60M997.40 689.00L997.40 726.60M997.40 726.60L1016.40 726.60M1016.40 689.00L1016.40 726.60M1016.40 726.60L1035.20 726.60M1035.20 689.00L1035.20 726.60M1035.20 726.60L1054.00 726.60M1054.00 689.00L1054.00 726.60M1054.00 726.60L1072.60 726.60M1072.60 689.00L1072.60 726.60M1072.60 726.60L1091.80 726.60M1091.80 689.00L1091.80 726.60M37.40 745.60L60.30 745.60M37.40 726.60L37.40 745.60M60.30 726.60L60.30 745.60M60.30 745.60L200.20 745.60M200.20 726.60L200.20 745.60M200.20 745.60L219.20 745.60M219.20 726.60L219.20 745.60M219.20 745.60L241.50 745.60M241.50 726.60L241.50 745.60M241.50 745.60L260.60 745.60M260.60 726.60L260.60 745.60M260.60 745.60L279.50 745.60M279.50 726.60L279.50 745.60M279.50 745.60L298.60 745.60M298.60 726.60L298.60 745.60M298.60 745.60L317.50 745.60M317.50 726.60L317.50 745.60M317.50 745.60L336.20 745.60M336.20 726.60L336.20 745.60M336.20 745.60L355.30 745.60M355.30 726.60L355.30 745.60M355.30 745.60L373.90 745.60M373.90 726.60L373.90 745.60M373.90 745.60L392.70 745.60M392.70 726.60L392.70 745.60M392.70 745.60L411.50 745.60M411.50 726.60L411.50 745.60M411.50 745.60L430.60 745.60M430.60 726.60L430.60 745.60M430.60 745.60L449.40 745.60M449.40 726.60L449.40 745.60M449.40 745.60L468.60 745.60M468.60 726.60L468.60 745.60M468.60 745.60L487.40 745.60M487.40 726.60L487.40 745.60M487.40 745.60L506.40 745.60M506.40 726.60L506.40 745.60M506.40 745.60L525.30 745.60M525.30 726.60L525.30 745.60M525.30 745.60L544.00 745.60M544.00 726.60L544.00 745.60M544.00 745.60L562.70 745.60M562.70 726.60L562.70 745.60M562.70 745.60L581.50 745.60M581.50 726.60L581.50 745.60M581.50 745.60L600.40 745.60M600.40 726.60L600.40 745.60M600.40 745.60L619.40 745.60M619.40 726.60L619.40 745.60M619.40 745.60L638.50 745.60M638.50 726.60L638.50 745.60M638.50 745.60L657.40 745.60M657.40 726.60L657.40 745.60M657.40 745.60L676.20 745.60M676.20 726.60L676.20 745.60M676.20 745.60L695.20 745.60M695.20 726.60L695.20 745.60M695.20 745.60L714.20 745.60M714.20 726.60L714.20 745.60M714.20 745.60L733.00 745.60M733.00 726.60L733.00 745.60M733.00 745.60L751.40 745.60M751.40 726.60L751.40 745.60M751.40 745.60L770.40 745.60M770.40 726.60L770.40 745.60M770.40 745.60L789.40 745.60M789.40 726.60L789.40 745.60M789.40 745.60L808.40 745.60M808.40 726.60L808.40 745.60M808.40 745.60L827.30 745.60M827.30 726.60L827.30 745.60M827.30 745.60L846.30 745.60M846.30 726.60L846.30 745.60M846.30 745.60L865.10 745.60M865.10 726.60L865.10 745.60M865.10 745.60L884.00 745.60M884.00 726.60L884.00 745.60M884.00 745.60L903.00 745.60M903.00 726.60L903.00 745.60M903.00 745.60L921.70 745.60M921.70 726.60L921.70 745.60M921.70 745.60L940.50 745.60M940.50 726.60L940.50 745.60M940.50 745.60L959.50 745.60M959.50 726.60L959.50 745.60M959.50 745.60L978.50 745.60M978.50 726.60L978.50 745.60M978.50 745.60L997.40 745.60M997.40 726.60L997.40 745.60M997.40 745.60L1016.40 745.60M1016.40 726.60L1016.40 745.60M1016.40 745.60L1035.20 745.60M1035.20 726.60L1035.20 745.60M1035.20 745.60L1054.00 745.60M1054.00 726.60L1054.00 745.60M1054.00 745.60L1072.60 745.60M1072.60 726.60L1072.60 745.60M1072.60 745.60L1091.80 745.60M1091.80 726.60L1091.80 745.60" stroke="#000" stroke-width="7" fill="none"/><g fill="#000" opacity=".22"><rect x="43" y="118" width="11" height="7"/><rect x="43" y="130" width="11" height="7"/><rect x="84" y="118" width="92" height="7"/><rect x="101" y="130" width="59" height="7"/><rect x="207" y="58" width="6" height="140"/><rect x="227" y="105" width="6" height="47"/><rect x="248" y="92" width="6" height="73"/><rect x="269" y="37" width="22" height="7"/><rect x="266" y="49" width="27" height="7"/><rect x="315" y="43" width="43" height="7"/><rect x="609" y="43" width="97" height="7"/><rect x="961" y="43" width="92" height="7"/><rect x="1079" y="40" width="6" height="177"/><rect x="267" y="124" width="6" height="42"/><rect x="286" y="119" width="6" height="52"/><rect x="305" y="140" width="6" height="10"/><rect x="324" y="122" width="6" height="47"/><rect x="343" y="104" width="6" height="83"/><rect x="362" y="124" width="6" height="42"/><rect x="386" y="77" width="108" height="7"/><rect x="516" y="71" width="38" height="7"/><rect x="510" y="83" width="49" height="7"/><rect x="586" y="77" width="49" height="7"/><rect x="667" y="77" width="38" height="7"/><rect x="746" y="77" width="49" height="7"/><rect x="834" y="85" width="6" height="120"/><rect x="853" y="109" width="6" height="73"/><rect x="892" y="77" width="22" height="7"/><rect x="947" y="106" width="6" height="78"/><rect x="966" y="114" width="6" height="62"/><rect x="985" y="114" width="6" height="62"/><rect x="1001" y="71" width="49" height="7"/><rect x="1020" y="83" width="11" height="7"/><rect x="1060" y="98" width="6" height="94"/><rect x="380" y="144" width="6" height="36"/><rect x="399" y="144" width="6" height="36"/><rect x="418" y="144" width="6" height="36"/><rect x="437" y="141" width="6" height="42"/><rect x="456" y="139" width="6" height="47"/><rect x="475" y="147" width="6" height="31"/><rect x="494" y="131" width="6" height="62"/><rect x="513" y="113" width="6" height="99"/><rect x="532" y="123" width="6" height="78"/><rect x="550" y="141" width="6" height="42"/><rect x="569" y="144" width="6" height="36"/><rect x="588" y="97" width="6" height="130"/><rect x="607" y="139" width="6" height="47"/><rect x="626" y="147" width="6" height="31"/><rect x="645" y="131" width="6" height="62"/><rect x="664" y="118" width="6" height="88"/><rect x="683" y="139" width="6" height="47"/><rect x="702" y="121" width="6" height="83"/><rect x="872" y="102" width="6" height="120"/><rect x="890" y="118" width="6" height="88"/><rect x="909" y="149" width="6" height="26"/><rect x="928" y="121" width="6" height="83"/><rect x="1004" y="144" width="6" height="36"/><rect x="1023" y="123" width="6" height="78"/><rect x="1042" y="121" width="6" height="83"/><rect x="729" y="105" width="27" height="7"/><rect x="734" y="117" width="16" height="7"/><rect x="785" y="105" width="27" height="7"/><rect x="777" y="117" width="43" height="7"/><rect x="721" y="140" width="6" height="78"/><rect x="739" y="135" width="6" height="88"/><rect x="758" y="137" width="6" height="83"/><rect x="777" y="140" width="6" height="78"/><rect x="796" y="135" width="6" height="88"/><rect x="815" y="137" width="6" height="83"/><rect x="45" y="231" width="5" height="7"/><rect x="126" y="231" width="5" height="7"/><rect x="206" y="231" width="5" height="7"/><rect x="226" y="231" width="5" height="7"/><rect x="247" y="231" width="5" height="7"/><rect x="266" y="231" width="5" height="7"/><rect x="285" y="231" width="5" height="7"/><rect x="304" y="231" width="5" height="7"/><rect x="323" y="231" width="5" height="7"/><rect x="339" y="231" width="11" height="7"/><rect x="358" y="231" width="11" height="7"/><rect x="377" y="231" width="11" height="7"/><rect x="396" y="231" width="11" height="7"/><rect x="414" y="231" width="11" height="7"/><rect x="433" y="231" width="11" height="7"/><rect x="452" y="231" width="11" height="7"/><rect x="471" y="231" width="11" height="7"/><rect x="490" y="231" width="11" height="7"/><rect x="509" y="231" width="11" height="7"/><rect x="528" y="231" width="11" height="7"/><rect x="547" y="231" width="11" height="7"/><rect x="566" y="231" width="11" height="7"/><rect x="584" y="231" width="11" height="7"/><rect x="603" y="231" width="11" height="7"/><rect x="622" y="231" width="11" height="7"/><rect x="641" y="231" width="11" height="7"/><rect x="660" y="231" width="11" height="7"/><rect x="679" y="231" width="11" height="7"/><rect x="698" y="231" width="11" height="7"/><rect x="717" y="231" width="11" height="7"/><rect x="736" y="231" width="11" height="7"/><rect x="754" y="231" width="11" height="7"/><rect x="773" y="231" width="11" height="7"/><rect x="792" y="231" width="11" height="7"/><rect x="811" y="231" width="11" height="7"/><rect x="830" y="231" width="11" height="7"/><rect x="849" y="231" width="11" height="7"/><rect x="868" y="231" width="11" height="7"/><rect x="887" y="231" width="11" height="7"/><rect x="906" y="231" width="11" height="7"/><rect x="924" y="231" width="11" height="7"/><rect x="943" y="231" width="11" height="7"/><rect x="962" y="231" width="11" height="7"/><rect x="981" y="231" width="11" height="7"/><rect x="1000" y="231" width="11" height="7"/><rect x="1019" y="231" width="11" height="7"/><rect x="1038" y="231" width="11" height="7"/><rect x="1057" y="231" width="11" height="7"/><rect x="1076" y="231" width="11" height="7"/><rect x="64" y="250" width="58" height="7"/><rect x="64" y="268" width="32" height="7"/><rect x="64" y="288" width="48" height="7"/><rect x="64" y="305" width="111" height="7"/><rect x="64" y="317" width="132" height="7"/><rect x="64" y="331" width="111" height="7"/><rect x="64" y="343" width="138" height="7"/><rect x="64" y="355" width="37" height="7"/><rect x="64" y="370" width="58" height="7"/><rect x="64" y="389" width="32" height="7"/><rect x="64" y="408" width="48" height="7"/><rect x="64" y="425" width="111" height="7"/><rect x="64" y="437" width="132" height="7"/><rect x="64" y="451" width="111" height="7"/><rect x="64" y="463" width="138" height="7"/><rect x="64" y="475" width="37" height="7"/><rect x="64" y="490" width="58" height="7"/><rect x="64" y="509" width="32" height="7"/><rect x="64" y="528" width="48" height="7"/><rect x="64" y="546" width="111" height="7"/><rect x="64" y="558" width="132" height="7"/><rect x="64" y="571" width="111" height="7"/><rect x="64" y="583" width="138" height="7"/><rect x="64" y="595" width="37" height="7"/><rect x="64" y="611" width="58" height="7"/><rect x="64" y="630" width="32" height="7"/><rect x="64" y="649" width="48" height="7"/><rect x="64" y="666" width="111" height="7"/><rect x="64" y="678" width="132" height="7"/><rect x="64" y="692" width="111" height="7"/><rect x="64" y="704" width="138" height="7"/><rect x="64" y="716" width="37" height="7"/><rect x="64" y="731" width="58" height="7"/></g></g></defs></svg><div class="abs" style="left:66px;top:17.8px;width:152px;height:111px;background:#8ab4f8"></div><div class="thumb" style="left:72px;top:23.8px;width:140px;height:99px;"><svg width="140" height="99" viewBox="0 0 1122 793" style="position:absolute;left:0;top:0"><use href="#tp1"/></svg></div><div class="tlabel" style="left:122px;top:133.8px">1</div><div class="thumb" style="left:72px;top:171.8px;width:140px;height:99px;opacity:.5;"><svg width="140" height="99" viewBox="0 0 1122 793" style="position:absolute;left:0;top:0"><use href="#tp2"/></svg></div><div class="tlabel" style="left:122px;top:281.8px">2</div><div class="thumb" style="left:72px;top:319.8px;width:140px;height:99px;opacity:.5;"><svg width="140" height="99" viewBox="0 0 1122 793" style="position:absolute;left:0;top:0"><use href="#tp2"/></svg></div><div class="tlabel" style="left:122px;top:429.8px">3</div><div class="thumb" style="left:72px;top:467.8px;width:140px;height:99px;opacity:.5;"><svg width="140" height="99" viewBox="0 0 1122 793" style="position:absolute;left:0;top:0"><use href="#tp2"/></svg></div><div class="tlabel" style="left:122px;top:577.8px">4</div><div class="thumb" style="left:72px;top:615.8px;width:140px;height:99px;opacity:.5;"><svg width="140" height="99" viewBox="0 0 1122 793" style="position:absolute;left:0;top:0"><use href="#tp2"/></svg></div><div class="tlabel" style="left:122px;top:725.8px">5</div><div class="thumb" style="left:72px;top:763.8px;width:140px;height:99px;opacity:.5;"><svg width="140" height="99" viewBox="0 0 1122 793" style="position:absolute;left:0;top:0"><use href="#tp2"/></svg></div><div class="tlabel" style="left:122px;top:873.8px">6</div></div><div class="sb" style="left:283px"><div class="up"></div><div class="th" style="top:17px;height:25px"></div><div class="dn"></div></div><div id="main"><div class="page" style="left:240px;top:3px;width:1122px;height:793px;box-shadow:0 4px 5px 0 rgba(0,0,0,.14),0 1px 10px 0 rgba(0,0,0,.12),0 2px 4px -1px rgba(0,0,0,.4)"><svg class="grid" width="1122" height="793" viewBox="0 0 1122 793"><rect x="37.40" y="147.30" width="1054.40" height="196.30" fill="#d3d3d3"/><path d="M37.40 147.30L60.30 147.30M37.40 343.60L60.30 343.60M37.40 147.30L37.40 343.60M60.30 147.30L60.30 343.60M60.30 147.30L200.20 147.30M60.30 343.60L200.20 343.60M200.20 147.30L200.20 343.60M200.20 147.30L219.20 147.30M200.20 343.60L219.20 343.60M219.20 147.30L219.20 343.60M219.20 147.30L241.50 147.30M219.20 343.60L241.50 343.60M241.50 147.30L241.50 343.60M241.50 147.30L260.60 147.30M241.50 343.60L260.60 343.60M260.60 147.30L260.60 343.60M260.60 147.30L298.60 147.30M260.60 181.20L298.60 181.20M260.60 147.30L260.60 181.20M298.60 147.30L298.60 181.20M298.60 147.30L373.90 147.30M298.60 181.20L373.90 181.20M373.90 147.30L373.90 181.20M373.90 147.30L940.50 147.30M373.90 181.20L940.50 181.20M940.50 147.30L940.50 181.20M940.50 147.30L1072.60 147.30M940.50 181.20L1072.60 181.20M1072.60 147.30L1072.60 181.20M1072.60 147.30L1091.80 147.30M1072.60 343.60L1091.80 343.60M1072.60 147.30L1072.60 343.60M1091.80 147.30L1091.80 343.60M260.60 181.20L279.50 181.20M260.60 343.60L279.50 343.60M260.60 181.20L260.60 343.60M279.50 181.20L279.50 343.60M279.50 181.20L298.60 181.20M279.50 343.60L298.60 343.60M298.60 181.20L298.60 343.60M298.60 181.20L317.50 181.20M298.60 343.60L317.50 343.60M317.50 181.20L317.50 343.60M317.50 181.20L336.20 181.20M317.50 343.60L336.20 343.60M336.20 181.20L336.20 343.60M336.20 181.20L355.30 181.20M336.20 343.60L355.30 343.60M355.30 181.20L355.30 343.60M355.30 181.20L373.90 181.20M355.30 343.60L373.90 343.60M373.90 181.20L373.90 343.60M373.90 181.20L506.40 181.20M373.90 215.30L506.40 215.30M373.90 181.20L373.90 215.30M506.40 181.20L506.40 215.30M506.40 181.20L562.70 181.20M506.40 215.30L562.70 215.30M562.70 181.20L562.70 215.30M562.70 181.20L657.40 181.20M562.70 215.30L657.40 215.30M657.40 181.20L657.40 215.30M657.40 181.20L714.20 181.20M657.40 215.30L714.20 215.30M714.20 181.20L714.20 215.30M714.20 181.20L827.30 181.20M714.20 215.30L827.30 215.30M827.30 181.20L827.30 215.30M827.30 181.20L846.30 181.20M827.30 343.60L846.30 343.60M827.30 181.20L827.30 343.60M846.30 181.20L846.30 343.60M846.30 181.20L865.10 181.20M846.30 343.60L865.10 343.60M865.10 181.20L865.10 343.60M865.10 181.20L940.50 181.20M865.10 215.30L940.50 215.30M865.10 181.20L865.10 215.30M940.50 181.20L940.50 215.30M940.50 181.20L959.50 181.20M940.50 343.60L959.50 343.60M940.50 181.20L940.50 343.60M959.50 181.20L959.50 343.60M959.50 181.20L978.50 181.20M959.50 343.60L978.50 343.60M978.50 181.20L978.50 343.60M978.50 181.20L997.40 181.20M978.50 343.60L997.40 343.60M997.40 181.20L997.40 343.60M997.40 181.20L1054.00 181.20M997.40 215.30L1054.00 215.30M997.40 181.20L997.40 215.30M1054.00 181.20L1054.00 215.30M1054.00 181.20L1072.60 181.20M1054.00 343.60L1072.60 343.60M1054.00 181.20L1054.00 343.60M1072.60 181.20L1072.60 343.60M373.90 215.30L392.70 215.30M373.90 343.60L392.70 343.60M373.90 215.30L373.90 343.60M392.70 215.30L392.70 343.60M392.70 215.30L411.50 215.30M392.70 343.60L411.50 343.60M411.50 215.30L411.50 343.60M411.50 215.30L430.60 215.30M411.50 343.60L430.60 343.60M430.60 215.30L430.60 343.60M430.60 215.30L449.40 215.30M430.60 343.60L449.40 343.60M449.40 215.30L449.40 343.60M449.40 215.30L468.60 215.30M449.40 343.60L468.60 343.60M468.60 215.30L468.60 343.60M468.60 215.30L487.40 215.30M468.60 343.60L487.40 343.60M487.40 215.30L487.40 343.60M487.40 215.30L506.40 215.30M487.40 343.60L506.40 343.60M506.40 215.30L506.40 343.60M506.40 215.30L525.30 215.30M506.40 343.60L525.30 343.60M525.30 215.30L525.30 343.60M525.30 215.30L544.00 215.30M525.30 343.60L544.00 343.60M544.00 215.30L544.00 343.60M544.00 215.30L562.70 215.30M544.00 343.60L562.70 343.60M562.70 215.30L562.70 343.60M562.70 215.30L581.50 215.30M562.70 343.60L581.50 343.60M581.50 215.30L581.50 343.60M581.50 215.30L600.40 215.30M581.50 343.60L600.40 343.60M600.40 215.30L600.40 343.60M600.40 215.30L619.40 215.30M600.40 343.60L619.40 343.60M619.40 215.30L619.40 343.60M619.40 215.30L638.50 215.30M619.40 343.60L638.50 343.60M638.50 215.30L638.50 343.60M638.50 215.30L657.40 215.30M638.50 343.60L657.40 343.60M657.40 215.30L657.40 343.60M657.40 215.30L676.20 215.30M657.40 343.60L676.20 343.60M676.20 215.30L676.20 343.60M676.20 215.30L695.20 215.30M676.20 343.60L695.20 343.60M695.20 215.30L695.20 343.60M695.20 215.30L714.20 215.30M695.20 343.60L714.20 343.60M714.20 215.30L714.20 343.60M865.10 215.30L884.00 215.30M865.10 343.60L884.00 343.60M865.10 215.30L865.10 343.60M884.00 215.30L884.00 343.60M884.00 215.30L903.00 215.30M884.00 343.60L903.00 343.60M903.00 215.30L903.00 343.60M903.00 215.30L921.70 215.30M903.00 343.60L921.70 343.60M921.70 215.30L921.70 343.60M921.70 215.30L940.50 215.30M921.70 343.60L940.50 343.60M940.50 215.30L940.50 343.60M997.40 215.30L1016.40 215.30M997.40 343.60L1016.40 343.60M997.40 215.30L997.40 343.60M1016.40 215.30L1016.40 343.60M1016.40 215.30L1035.20 215.30M1016.40 343.60L1035.20 343.60M1035.20 215.30L1035.20 343.60M1035.20 215.30L1054.00 215.30M1035.20 343.60L1054.00 343.60M1054.00 215.30L1054.00 343.60M714.20 215.30L770.40 215.30M714.20 249.10L770.40 249.10M714.20 215.30L714.20 249.10M770.40 215.30L770.40 249.10M770.40 215.30L827.30 215.30M770.40 249.10L827.30 249.10M827.30 215.30L827.30 249.10M714.20 249.10L733.00 249.10M714.20 343.60L733.00 343.60M714.20 249.10L714.20 343.60M733.00 249.10L733.00 343.60M733.00 249.10L751.40 249.10M733.00 343.60L751.40 343.60M751.40 249.10L751.40 343.60M751.40 249.10L770.40 249.10M751.40 343.60L770.40 343.60M770.40 249.10L770.40 343.60M770.40 249.10L789.40 249.10M770.40 343.60L789.40 343.60M789.40 249.10L789.40 343.60M789.40 249.10L808.40 249.10M789.40 343.60L808.40 343.60M808.40 249.10L808.40 343.60M808.40 249.10L827.30 249.10M808.40 343.60L827.30 343.60M827.30 249.10L827.30 343.60M37.40 362.30L60.30 362.30M37.40 343.60L37.40 362.30M60.30 343.60L60.30 362.30M60.30 362.30L200.20 362.30M200.20 343.60L200.20 362.30M200.20 362.30L219.20 362.30M219.20 343.60L219.20 362.30M219.20 362.30L241.50 362.30M241.50 343.60L241.50 362.30M241.50 362.30L260.60 362.30M260.60 343.60L260.60 362.30M260.60 362.30L279.50 362.30M279.50 343.60L279.50 362.30M279.50 362.30L298.60 362.30M298.60 343.60L298.60 362.30M298.60 362.30L317.50 362.30M317.50 343.60L317.50 362.30M317.50 362.30L336.20 362.30M336.20 343.60L336.20 362.30M336.20 362.30L355.30 362.30M355.30 343.60L355.30 362.30M355.30 362.30L373.90 362.30M373.90 343.60L373.90 362.30M373.90 362.30L392.70 362.30M392.70 343.60L392.70 362.30M392.70 362.30L411.50 362.30M411.50 343.60L411.50 362.30M411.50 362.30L430.60 362.30M430.60 343.60L430.60 362.30M430.60 362.30L449.40 362.30M449.40 343.60L449.40 362.30M449.40 362.30L468.60 362.30M468.60 343.60L468.60 362.30M468.60 362.30L487.40 362.30M487.40 343.60L487.40 362.30M487.40 362.30L506.40 362.30M506.40 343.60L506.40 362.30M506.40 362.30L525.30 362.30M525.30 343.60L525.30 362.30M525.30 362.30L544.00 362.30M544.00 343.60L544.00 362.30M544.00 362.30L562.70 362.30M562.70 343.60L562.70 362.30M562.70 362.30L581.50 362.30M581.50 343.60L581.50 362.30M581.50 362.30L600.40 362.30M600.40 343.60L600.40 362.30M600.40 362.30L619.40 362.30M619.40 343.60L619.40 362.30M619.40 362.30L638.50 362.30M638.50 343.60L638.50 362.30M638.50 362.30L657.40 362.30M657.40 343.60L657.40 362.30M657.40 362.30L676.20 362.30M676.20 343.60L676.20 362.30M676.20 362.30L695.20 362.30M695.20 343.60L695.20 362.30M695.20 362.30L714.20 362.30M714.20 343.60L714.20 362.30M714.20 362.30L733.00 362.30M733.00 343.60L733.00 362.30M733.00 362.30L751.40 362.30M751.40 343.60L751.40 362.30M751.40 362.30L770.40 362.30M770.40 343.60L770.40 362.30M770.40 362.30L789.40 362.30M789.40 343.60L789.40 362.30M789.40 362.30L808.40 362.30M808.40 343.60L808.40 362.30M808.40 362.30L827.30 362.30M827.30 343.60L827.30 362.30M827.30 362.30L846.30 362.30M846.30 343.60L846.30 362.30M846.30 362.30L865.10 362.30M865.10 343.60L865.10 362.30M865.10 362.30L884.00 362.30M884.00 343.60L884.00 362.30M884.00 362.30L903.00 362.30M903.00 343.60L903.00 362.30M903.00 362.30L921.70 362.30M921.70 343.60L921.70 362.30M921.70 362.30L940.50 362.30M940.50 343.60L940.50 362.30M940.50 362.30L959.50 362.30M959.50 343.60L959.50 362.30M959.50 362.30L978.50 362.30M978.50 343.60L978.50 362.30M978.50 362.30L997.40 362.30M997.40 343.60L997.40 362.30M997.40 362.30L1016.40 362.30M1016.40 343.60L1016.40 362.30M1016.40 362.30L1035.20 362.30M1035.20 343.60L1035.20 362.30M1035.20 362.30L1054.00 362.30M1054.00 343.60L1054.00 362.30M1054.00 362.30L1072.60 362.30M1072.60 343.60L1072.60 362.30M1072.60 362.30L1091.80 362.30M1091.80 343.60L1091.80 362.30M37.40 362.30L1091.80 362.30M37.40 381.10L1091.80 381.10M37.40 362.30L37.40 381.10M1091.80 362.30L1091.80 381.10M37.40 381.10L60.30 381.10M37.40 400.20L60.30 400.20M37.40 381.10L37.40 400.20M60.30 381.10L60.30 400.20M60.30 381.10L200.20 381.10M60.30 400.20L200.20 400.20M200.20 381.10L200.20 400.20M200.20 381.10L219.20 381.10M200.20 400.20L219.20 400.20M219.20 381.10L219.20 400.20M219.20 381.10L241.50 381.10M219.20 400.20L241.50 400.20M241.50 381.10L241.50 400.20M241.50 381.10L260.60 381.10M241.50 400.20L260.60 400.20M260.60 381.10L260.60 400.20M260.60 381.10L279.50 381.10M260.60 400.20L279.50 400.20M279.50 381.10L279.50 400.20M279.50 381.10L298.60 381.10M279.50 400.20L298.60 400.20M298.60 381.10L298.60 400.20M298.60 381.10L317.50 381.10M298.60 400.20L317.50 400.20M317.50 381.10L317.50 400.20M317.50 381.10L336.20 381.10M317.50 400.20L336.20 400.20M336.20 381.10L336.20 400.20M336.20 381.10L355.30 381.10M336.20 400.20L355.30 400.20M355.30 381.10L355.30 400.20M355.30 381.10L373.90 381.10M355.30 400.20L373.90 400.20M373.90 381.10L373.90 400.20M373.90 381.10L392.70 381.10M373.90 400.20L392.70 400.20M392.70 381.10L392.70 400.20M392.70 381.10L411.50 381.10M392.70 400.20L411.50 400.20M411.50 381.10L411.50 400.20M411.50 381.10L430.60 381.10M411.50 400.20L430.60 400.20M430.60 381.10L430.60 400.20M430.60 381.10L449.40 381.10M430.60 400.20L449.40 400.20M449.40 381.10L449.40 400.20M449.40 381.10L468.60 381.10M449.40 400.20L468.60 400.20M468.60 381.10L468.60 400.20M468.60 381.10L487.40 381.10M468.60 400.20L487.40 400.20M487.40 381.10L487.40 400.20M487.40 381.10L506.40 381.10M487.40 400.20L506.40 400.20M506.40 381.10L506.40 400.20M506.40 381.10L525.30 381.10M506.40 400.20L525.30 400.20M525.30 381.10L525.30 400.20M525.30 381.10L544.00 381.10M525.30 400.20L544.00 400.20M544.00 381.10L544.00 400.20M544.00 381.10L562.70 381.10M544.00 400.20L562.70 400.20M562.70 381.10L562.70 400.20M562.70 381.10L581.50 381.10M562.70 400.20L581.50 400.20M581.50 381.10L581.50 400.20M581.50 381.10L600.40 381.10M581.50 400.20L600.40 400.20M600.40 381.10L600.40 400.20M600.40 381.10L619.40 381.10M600.40 400.20L619.40 400.20M619.40 381.10L619.40 400.20M619.40 381.10L638.50 381.10M619.40 400.20L638.50 400.20M638.50 381.10L638.50 400.20M638.50 381.10L657.40 381.10M638.50 400.20L657.40 400.20M657.40 381.10L657.40 400.20M657.40 381.10L676.20 381.10M657.40 400.20L676.20 400.20M676.20 381.10L676.20 400.20M676.20 381.10L695.20 381.10M676.20 400.20L695.20 400.20M695.20 381.10L695.20 400.20M695.20 381.10L714.20 381.10M695.20 400.20L714.20 400.20M714.20 381.10L714.20 400.20M714.20 381.10L733.00 381.10M714.20 400.20L733.00 400.20M733.00 381.10L733.00 400.20M733.00 381.10L751.40 381.10M733.00 400.20L751.40 400.20M751.40 381.10L751.40 400.20M751.40 381.10L770.40 381.10M751.40 400.20L770.40 400.20M770.40 381.10L770.40 400.20M770.40 381.10L789.40 381.10M770.40 400.20L789.40 400.20M789.40 381.10L789.40 400.20M789.40 381.10L808.40 381.10M789.40 400.20L808.40 400.20M808.40 381.10L808.40 400.20M808.40 381.10L827.30 381.10M808.40 400.20L827.30 400.20M827.30 381.10L827.30 400.20M827.30 381.10L846.30 381.10M827.30 400.20L846.30 400.20M846.30 381.10L846.30 400.20M846.30 381.10L865.10 381.10M846.30 400.20L865.10 400.20M865.10 381.10L865.10 400.20M865.10 381.10L884.00 381.10M865.10 400.20L884.00 400.20M884.00 381.10L884.00 400.20M884.00 381.10L903.00 381.10M884.00 400.20L903.00 400.20M903.00 381.10L903.00 400.20M903.00 381.10L921.70 381.10M903.00 400.20L921.70 400.20M921.70 381.10L921.70 400.20M921.70 381.10L940.50 381.10M921.70 400.20L940.50 400.20M940.50 381.10L940.50 400.20M940.50 381.10L959.50 381.10M940.50 400.20L959.50 400.20M959.50 381.10L959.50 400.20M959.50 381.10L978.50 381.10M959.50 400.20L978.50 400.20M978.50 381.10L978.50 400.20M978.50 381.10L997.40 381.10M978.50 400.20L997.40 400.20M997.40 381.10L997.40 400.20M997.40 381.10L1016.40 381.10M997.40 400.20L1016.40 400.20M1016.40 381.10L1016.40 400.20M1016.40 381.10L1035.20 381.10M1016.40 400.20L1035.20 400.20M1035.20 381.10L1035.20 400.20M1035.20 381.10L1054.00 381.10M1035.20 400.20L1054.00 400.20M1054.00 381.10L1054.00 400.20M1054.00 381.10L1072.60 381.10M1054.00 400.20L1072.60 400.20M1072.60 381.10L1072.60 400.20M1072.60 381.10L1091.80 381.10M1072.60 400.20L1091.80 400.20M1091.80 381.10L1091.80 400.20M37.40 419.20L60.30 419.20M37.40 400.20L37.40 419.20M60.30 400.20L60.30 419.20M60.30 419.20L200.20 419.20M200.20 400.20L200.20 419.20M200.20 419.20L219.20 419.20M219.20 400.20L219.20 419.20M219.20 419.20L241.50 419.20M241.50 400.20L241.50 419.20M241.50 419.20L260.60 419.20M260.60 400.20L260.60 419.20M260.60 419.20L279.50 419.20M279.50 400.20L279.50 419.20M279.50 419.20L298.60 419.20M298.60 400.20L298.60 419.20M298.60 419.20L317.50 419.20M317.50 400.20L317.50 419.20M317.50 419.20L336.20 419.20M336.20 400.20L336.20 419.20M336.20 419.20L355.30 419.20M355.30 400.20L355.30 419.20M355.30 419.20L373.90 419.20M373.90 400.20L373.90 419.20M373.90 419.20L392.70 419.20M392.70 400.20L392.70 419.20M392.70 419.20L411.50 419.20M411.50 400.20L411.50 419.20M411.50 419.20L430.60 419.20M430.60 400.20L430.60 419.20M430.60 419.20L449.40 419.20M449.40 400.20L449.40 419.20M449.40 419.20L468.60 419.20M468.60 400.20L468.60 419.20M468.60 419.20L487.40 419.20M487.40 400.20L487.40 419.20M487.40 419.20L506.40 419.20M506.40 400.20L506.40 419.20M506.40 419.20L525.30 419.20M525.30 400.20L525.30 419.20M525.30 419.20L544.00 419.20M544.00 400.20L544.00 419.20M544.00 419.20L562.70 419.20M562.70 400.20L562.70 419.20M562.70 419.20L581.50 419.20M581.50 400.20L581.50 419.20M581.50 419.20L600.40 419.20M600.40 400.20L600.40 419.20M600.40 419.20L619.40 419.20M619.40 400.20L619.40 419.20M619.40 419.20L638.50 419.20M638.50 400.20L638.50 419.20M638.50 419.20L657.40 419.20M657.40 400.20L657.40 419.20M657.40 419.20L676.20 419.20M676.20 400.20L676.20 419.20M676.20 419.20L695.20 419.20M695.20 400.20L695.20 419.20M695.20 419.20L714.20 419.20M714.20 400.20L714.20 419.20M714.20 419.20L733.00 419.20M733.00 400.20L733.00 419.20M733.00 419.20L751.40 419.20M751.40 400.20L751.40 419.20M751.40 419.20L770.40 419.20M770.40 400.20L770.40 419.20M770.40 419.20L789.40 419.20M789.40 400.20L789.40 419.20M789.40 419.20L808.40 419.20M808.40 400.20L808.40 419.20M808.40 419.20L827.30 419.20M827.30 400.20L827.30 419.20M827.30 419.20L846.30 419.20M846.30 400.20L846.30 419.20M846.30 419.20L865.10 419.20M865.10 400.20L865.10 419.20M865.10 419.20L884.00 419.20M884.00 400.20L884.00 419.20M884.00 419.20L903.00 419.20M903.00 400.20L903.00 419.20M903.00 419.20L921.70 419.20M921.70 400.20L921.70 419.20M921.70 419.20L940.50 419.20M940.50 400.20L940.50 419.20M940.50 419.20L959.50 419.20M959.50 400.20L959.50 419.20M959.50 419.20L978.50 419.20M978.50 400.20L978.50 419.20M978.50 419.20L997.40 419.20M997.40 400.20L997.40 419.20M997.40 419.20L1016.40 419.20M1016.40 400.20L1016.40 419.20M1016.40 419.20L1035.20 419.20M1035.20 400.20L1035.20 419.20M1035.20 419.20L1054.00 419.20M1054.00 400.20L1054.00 419.20M1054.00 419.20L1072.60 419.20M1072.60 400.20L1072.60 419.20M1072.60 419.20L1091.80 419.20M1091.80 400.20L1091.80 419.20M37.40 438.00L60.30 438.00M37.40 419.20L37.40 438.00M60.30 419.20L60.30 438.00M60.30 438.00L200.20 438.00M200.20 419.20L200.20 438.00M200.20 438.00L219.20 438.00M219.20 419.20L219.20 438.00M219.20 438.00L241.50 438.00M241.50 419.20L241.50 438.00M241.50 438.00L260.60 438.00M260.60 419.20L260.60 438.00M260.60 438.00L279.50 438.00M279.50 419.20L279.50 438.00M279.50 438.00L298.60 438.00M298.60 419.20L298.60 438.00M298.60 438.00L317.50 438.00M317.50 419.20L317.50 438.00M317.50 438.00L336.20 438.00M336.20 419.20L336.20 438.00M336.20 438.00L355.30 438.00M355.30 419.20L355.30 438.00M355.30 438.00L373.90 438.00M373.90 419.20L373.90 438.00M373.90 438.00L392.70 438.00M392.70 419.20L392.70 438.00M392.70 438.00L411.50 438.00M411.50 419.20L411.50 438.00M411.50 438.00L430.60 438.00M430.60 419.20L430.60 438.00M430.60 438.00L449.40 438.00M449.40 419.20L449.40 438.00M449.40 438.00L468.60 438.00M468.60 419.20L468.60 438.00M468.60 438.00L487.40 438.00M487.40 419.20L487.40 438.00M487.40 438.00L506.40 438.00M506.40 419.20L506.40 438.00M506.40 438.00L525.30 438.00M525.30 419.20L525.30 438.00M525.30 438.00L544.00 438.00M544.00 419.20L544.00 438.00M544.00 438.00L562.70 438.00M562.70 419.20L562.70 438.00M562.70 438.00L581.50 438.00M581.50 419.20L581.50 438.00M581.50 438.00L600.40 438.00M600.40 419.20L600.40 438.00M600.40 438.00L619.40 438.00M619.40 419.20L619.40 438.00M619.40 438.00L638.50 438.00M638.50 419.20L638.50 438.00M638.50 438.00L657.40 438.00M657.40 419.20L657.40 438.00M657.40 438.00L676.20 438.00M676.20 419.20L676.20 438.00M676.20 438.00L695.20 438.00M695.20 419.20L695.20 438.00M695.20 438.00L714.20 438.00M714.20 419.20L714.20 438.00M714.20 438.00L733.00 438.00M733.00 419.20L733.00 438.00M733.00 438.00L751.40 438.00M751.40 419.20L751.40 438.00M751.40 438.00L770.40 438.00M770.40 419.20L770.40 438.00M770.40 438.00L789.40 438.00M789.40 419.20L789.40 438.00M789.40 438.00L808.40 438.00M808.40 419.20L808.40 438.00M808.40 438.00L827.30 438.00M827.30 419.20L827.30 438.00M827.30 438.00L846.30 438.00M846.30 419.20L846.30 438.00M846.30 438.00L865.10 438.00M865.10 419.20L865.10 438.00M865.10 438.00L884.00 438.00M884.00 419.20L884.00 438.00M884.00 438.00L903.00 438.00M903.00 419.20L903.00 438.00M903.00 438.00L921.70 438.00M921.70 419.20L921.70 438.00M921.70 438.00L940.50 438.00M940.50 419.20L940.50 438.00M940.50 438.00L959.50 438.00M959.50 419.20L959.50 438.00M959.50 438.00L978.50 438.00M978.50 419.20L978.50 438.00M978.50 438.00L997.40 438.00M997.40 419.20L997.40 438.00M997.40 438.00L1016.40 438.00M1016.40 419.20L1016.40 438.00M1016.40 438.00L1035.20 438.00M1035.20 419.20L1035.20 438.00M1035.20 438.00L1054.00 438.00M1054.00 419.20L1054.00 438.00M1054.00 438.00L1072.60 438.00M1072.60 419.20L1072.60 438.00M1072.60 438.00L1091.80 438.00M1091.80 419.20L1091.80 438.00M37.40 463.80L60.30 463.80M37.40 438.00L37.40 463.80M60.30 438.00L60.30 463.80M60.30 463.80L200.20 463.80M200.20 438.00L200.20 463.80M200.20 463.80L219.20 463.80M219.20 438.00L219.20 463.80M219.20 463.80L241.50 463.80M241.50 438.00L241.50 463.80M241.50 463.80L260.60 463.80M260.60 438.00L260.60 463.80M260.60 463.80L279.50 463.80M279.50 438.00L279.50 463.80M279.50 463.80L298.60 463.80M298.60 438.00L298.60 463.80M298.60 463.80L317.50 463.80M317.50 438.00L317.50 463.80M317.50 463.80L336.20 463.80M336.20 438.00L336.20 463.80M336.20 463.80L355.30 463.80M355.30 438.00L355.30 463.80M355.30 463.80L373.90 463.80M373.90 438.00L373.90 463.80M373.90 463.80L392.70 463.80M392.70 438.00L392.70 463.80M392.70 463.80L411.50 463.80M411.50 438.00L411.50 463.80M411.50 463.80L430.60 463.80M430.60 438.00L430.60 463.80M430.60 463.80L449.40 463.80M449.40 438.00L449.40 463.80M449.40 463.80L468.60 463.80M468.60 438.00L468.60 463.80M468.60 463.80L487.40 463.80M487.40 438.00L487.40 463.80M487.40 463.80L506.40 463.80M506.40 438.00L506.40 463.80M506.40 463.80L525.30 463.80M525.30 438.00L525.30 463.80M525.30 463.80L544.00 463.80M544.00 438.00L544.00 463.80M544.00 463.80L562.70 463.80M562.70 438.00L562.70 463.80M562.70 463.80L581.50 463.80M581.50 438.00L581.50 463.80M581.50 463.80L600.40 463.80M600.40 438.00L600.40 463.80M600.40 463.80L619.40 463.80M619.40 438.00L619.40 463.80M619.40 463.80L638.50 463.80M638.50 438.00L638.50 463.80M638.50 463.80L657.40 463.80M657.40 438.00L657.40 463.80M657.40 463.80L676.20 463.80M676.20 438.00L676.20 463.80M676.20 463.80L695.20 463.80M695.20 438.00L695.20 463.80M695.20 463.80L714.20 463.80M714.20 438.00L714.20 463.80M714.20 463.80L733.00 463.80M733.00 438.00L733.00 463.80M733.00 463.80L751.40 463.80M751.40 438.00L751.40 463.80M751.40 463.80L770.40 463.80M770.40 438.00L770.40 463.80M770.40 463.80L789.40 463.80M789.40 438.00L789.40 463.80M789.40 463.80L808.40 463.80M808.40 438.00L808.40 463.80M808.40 463.80L827.30 463.80M827.30 438.00L827.30 463.80M827.30 463.80L846.30 463.80M846.30 438.00L846.30 463.80M846.30 463.80L865.10 463.80M865.10 438.00L865.10 463.80M865.10 463.80L884.00 463.80M884.00 438.00L884.00 463.80M884.00 463.80L903.00 463.80M903.00 438.00L903.00 463.80M903.00 463.80L921.70 463.80M921.70 438.00L921.70 463.80M921.70 463.80L940.50 463.80M940.50 438.00L940.50 463.80M940.50 463.80L959.50 463.80M959.50 438.00L959.50 463.80M959.50 463.80L978.50 463.80M978.50 438.00L978.50 463.80M978.50 463.80L997.40 463.80M997.40 438.00L997.40 463.80M997.40 463.80L1016.40 463.80M1016.40 438.00L1016.40 463.80M1016.40 463.80L1035.20 463.80M1035.20 438.00L1035.20 463.80M1035.20 463.80L1054.00 463.80M1054.00 438.00L1054.00 463.80M1054.00 463.80L1072.60 463.80M1072.60 438.00L1072.60 463.80M1072.60 463.80L1091.80 463.80M1091.80 438.00L1091.80 463.80M37.40 501.40L60.30 501.40M37.40 463.80L37.40 501.40M60.30 463.80L60.30 501.40M60.30 501.40L200.20 501.40M200.20 463.80L200.20 501.40M200.20 501.40L219.20 501.40M219.20 463.80L219.20 501.40M219.20 501.40L241.50 501.40M241.50 463.80L241.50 501.40M241.50 501.40L260.60 501.40M260.60 463.80L260.60 501.40M260.60 501.40L279.50 501.40M279.50 463.80L279.50 501.40M279.50 501.40L298.60 501.40M298.60 463.80L298.60 501.40M298.60 501.40L317.50 501.40M317.50 463.80L317.50 501.40M317.50 501.40L336.20 501.40M336.20 463.80L336.20 501.40M336.20 501.40L355.30 501.40M355.30 463.80L355.30 501.40M355.30 501.40L373.90 501.40M373.90 463.80L373.90 501.40M373.90 501.40L392.70 501.40M392.70 463.80L392.70 501.40M392.70 501.40L411.50 501.40M411.50 463.80L411.50 501.40M411.50 501.40L430.60 501.40M430.60 463.80L430.60 501.40M430.60 501.40L449.40 501.40M449.40 463.80L449.40 501.40M449.40 501.40L468.60 501.40M468.60 463.80L468.60 501.40M468.60 501.40L487.40 501.40M487.40 463.80L487.40 501.40M487.40 501.40L506.40 501.40M506.40 463.80L506.40 501.40M506.40 501.40L525.30 501.40M525.30 463.80L525.30 501.40M525.30 501.40L544.00 501.40M544.00 463.80L544.00 501.40M544.00 501.40L562.70 501.40M562.70 463.80L562.70 501.40M562.70 501.40L581.50 501.40M581.50 463.80L581.50 501.40M581.50 501.40L600.40 501.40M600.40 463.80L600.40 501.40M600.40 501.40L619.40 501.40M619.40 463.80L619.40 501.40M619.40 501.40L638.50 501.40M638.50 463.80L638.50 501.40M638.50 501.40L657.40 501.40M657.40 463.80L657.40 501.40M657.40 501.40L676.20 501.40M676.20 463.80L676.20 501.40M676.20 501.40L695.20 501.40M695.20 463.80L695.20 501.40M695.20 501.40L714.20 501.40M714.20 463.80L714.20 501.40M714.20 501.40L733.00 501.40M733.00 463.80L733.00 501.40M733.00 501.40L751.40 501.40M751.40 463.80L751.40 501.40M751.40 501.40L770.40 501.40M770.40 463.80L770.40 501.40M770.40 501.40L789.40 501.40M789.40 463.80L789.40 501.40M789.40 501.40L808.40 501.40M808.40 463.80L808.40 501.40M808.40 501.40L827.30 501.40M827.30 463.80L827.30 501.40M827.30 501.40L846.30 501.40M846.30 463.80L846.30 501.40M846.30 501.40L865.10 501.40M865.10 463.80L865.10 501.40M865.10 501.40L884.00 501.40M884.00 463.80L884.00 501.40M884.00 501.40L903.00 501.40M903.00 463.80L903.00 501.40M903.00 501.40L921.70 501.40M921.70 463.80L921.70 501.40M921.70 501.40L940.50 501.40M940.50 463.80L940.50 501.40M940.50 501.40L959.50 501.40M959.50 463.80L959.50 501.40M959.50 501.40L978.50 501.40M978.50 463.80L978.50 501.40M978.50 501.40L997.40 501.40M997.40 463.80L997.40 501.40M997.40 501.40L1016.40 501.40M1016.40 463.80L1016.40 501.40M1016.40 501.40L1035.20 501.40M1035.20 463.80L1035.20 501.40M1035.20 501.40L1054.00 501.40M1054.00 463.80L1054.00 501.40M1054.00 501.40L1072.60 501.40M1072.60 463.80L1072.60 501.40M1072.60 501.40L1091.80 501.40M1091.80 463.80L1091.80 501.40M37.40 520.10L60.30 520.10M37.40 501.40L37.40 520.10M60.30 501.40L60.30 520.10M60.30 520.10L200.20 520.10M200.20 501.40L200.20 520.10M200.20 520.10L219.20 520.10M219.20 501.40L219.20 520.10M219.20 520.10L241.50 520.10M241.50 501.40L241.50 520.10M241.50 520.10L260.60 520.10M260.60 501.40L260.60 520.10M260.60 520.10L279.50 520.10M279.50 501.40L279.50 520.10M279.50 520.10L298.60 520.10M298.60 501.40L298.60 520.10M298.60 520.10L317.50 520.10M317.50 501.40L317.50 520.10M317.50 520.10L336.20 520.10M336.20 501.40L336.20 520.10M336.20 520.10L355.30 520.10M355.30 501.40L355.30 520.10M355.30 520.10L373.90 520.10M373.90 501.40L373.90 520.10M373.90 520.10L392.70 520.10M392.70 501.40L392.70 520.10M392.70 520.10L411.50 520.10M411.50 501.40L411.50 520.10M411.50 520.10L430.60 520.10M430.60 501.40L430.60 520.10M430.60 520.10L449.40 520.10M449.40 501.40L449.40 520.10M449.40 520.10L468.60 520.10M468.60 501.40L468.60 520.10M468.60 520.10L487.40 520.10M487.40 501.40L487.40 520.10M487.40 520.10L506.40 520.10M506.40 501.40L506.40 520.10M506.40 520.10L525.30 520.10M525.30 501.40L525.30 520.10M525.30 520.10L544.00 520.10M544.00 501.40L544.00 520.10M544.00 520.10L562.70 520.10M562.70 501.40L562.70 520.10M562.70 520.10L581.50 520.10M581.50 501.40L581.50 520.10M581.50 520.10L600.40 520.10M600.40 501.40L600.40 520.10M600.40 520.10L619.40 520.10M619.40 501.40L619.40 520.10M619.40 520.10L638.50 520.10M638.50 501.40L638.50 520.10M638.50 520.10L657.40 520.10M657.40 501.40L657.40 520.10M657.40 520.10L676.20 520.10M676.20 501.40L676.20 520.10M676.20 520.10L695.20 520.10M695.20 501.40L695.20 520.10M695.20 520.10L714.20 520.10M714.20 501.40L714.20 520.10M714.20 520.10L733.00 520.10M733.00 501.40L733.00 520.10M733.00 520.10L751.40 520.10M751.40 501.40L751.40 520.10M751.40 520.10L770.40 520.10M770.40 501.40L770.40 520.10M770.40 520.10L789.40 520.10M789.40 501.40L789.40 520.10M789.40 520.10L808.40 520.10M808.40 501.40L808.40 520.10M808.40 520.10L827.30 520.10M827.30 501.40L827.30 520.10M827.30 520.10L846.30 520.10M846.30 501.40L846.30 520.10M846.30 520.10L865.10 520.10M865.10 501.40L865.10 520.10M865.10 520.10L884.00 520.10M884.00 501.40L884.00 520.10M884.00 520.10L903.00 520.10M903.00 501.40L903.00 520.10M903.00 520.10L921.70 520.10M921.70 501.40L921.70 520.10M921.70 520.10L940.50 520.10M940.50 501.40L940.50 520.10M940.50 520.10L959.50 520.10M959.50 501.40L959.50 520.10M959.50 520.10L978.50 520.10M978.50 501.40L978.50 520.10M978.50 520.10L997.40 520.10M997.40 501.40L997.40 520.10M997.40 520.10L1016.40 520.10M1016.40 501.40L1016.40 520.10M1016.40 520.10L1035.20 520.10M1035.20 501.40L1035.20 520.10M1035.20 520.10L1054.00 520.10M1054.00 501.40L1054.00 520.10M1054.00 520.10L1072.60 520.10M1072.60 501.40L1072.60 520.10M1072.60 520.10L1091.80 520.10M1091.80 501.40L1091.80 520.10M37.40 539.60L60.30 539.60M37.40 520.10L37.40 539.60M60.30 520.10L60.30 539.60M60.30 539.60L200.20 539.60M200.20 520.10L200.20 539.60M200.20 539.60L219.20 539.60M219.20 520.10L219.20 539.60M219.20 539.60L241.50 539.60M241.50 520.10L241.50 539.60M241.50 539.60L260.60 539.60M260.60 520.10L260.60 539.60M260.60 539.60L279.50 539.60M279.50 520.10L279.50 539.60M279.50 539.60L298.60 539.60M298.60 520.10L298.60 539.60M298.60 539.60L317.50 539.60M317.50 520.10L317.50 539.60M317.50 539.60L336.20 539.60M336.20 520.10L336.20 539.60M336.20 539.60L355.30 539.60M355.30 520.10L355.30 539.60M355.30 539.60L373.90 539.60M373.90 520.10L373.90 539.60M373.90 539.60L392.70 539.60M392.70 520.10L392.70 539.60M392.70 539.60L411.50 539.60M411.50 520.10L411.50 539.60M411.50 539.60L430.60 539.60M430.60 520.10L430.60 539.60M430.60 539.60L449.40 539.60M449.40 520.10L449.40 539.60M449.40 539.60L468.60 539.60M468.60 520.10L468.60 539.60M468.60 539.60L487.40 539.60M487.40 520.10L487.40 539.60M487.40 539.60L506.40 539.60M506.40 520.10L506.40 539.60M506.40 539.60L525.30 539.60M525.30 520.10L525.30 539.60M525.30 539.60L544.00 539.60M544.00 520.10L544.00 539.60M544.00 539.60L562.70 539.60M562.70 520.10L562.70 539.60M562.70 539.60L581.50 539.60M581.50 520.10L581.50 539.60M581.50 539.60L600.40 539.60M600.40 520.10L600.40 539.60M600.40 539.60L619.40 539.60M619.40 520.10L619.40 539.60M619.40 539.60L638.50 539.60M638.50 520.10L638.50 539.60M638.50 539.60L657.40 539.60M657.40 520.10L657.40 539.60M657.40 539.60L676.20 539.60M676.20 520.10L676.20 539.60M676.20 539.60L695.20 539.60M695.20 520.10L695.20 539.60M695.20 539.60L714.20 539.60M714.20 520.10L714.20 539.60M714.20 539.60L733.00 539.60M733.00 520.10L733.00 539.60M733.00 539.60L751.40 539.60M751.40 520.10L751.40 539.60M751.40 539.60L770.40 539.60M770.40 520.10L770.40 539.60M770.40 539.60L789.40 539.60M789.40 520.10L789.40 539.60M789.40 539.60L808.40 539.60M808.40 520.10L808.40 539.60M808.40 539.60L827.30 539.60M827.30 520.10L827.30 539.60M827.30 539.60L846.30 539.60M846.30 520.10L846.30 539.60M846.30 539.60L865.10 539.60M865.10 520.10L865.10 539.60M865.10 539.60L884.00 539.60M884.00 520.10L884.00 539.60M884.00 539.60L903.00 539.60M903.00 520.10L903.00 539.60M903.00 539.60L921.70 539.60M921.70 520.10L921.70 539.60M921.70 539.60L940.50 539.60M940.50 520.10L940.50 539.60M940.50 539.60L959.50 539.60M959.50 520.10L959.50 539.60M959.50 539.60L978.50 539.60M978.50 520.10L978.50 539.60M978.50 539.60L997.40 539.60M997.40 520.10L997.40 539.60M997.40 539.60L1016.40 539.60M1016.40 520.10L1016.40 539.60M1016.40 539.60L1035.20 539.60M1035.20 520.10L1035.20 539.60M1035.20 539.60L1054.00 539.60M1054.00 520.10L1054.00 539.60M1054.00 539.60L1072.60 539.60M1072.60 520.10L1072.60 539.60M1072.60 539.60L1091.80 539.60M1091.80 520.10L1091.80 539.60M37.40 558.40L60.30 558.40M37.40 539.60L37.40 558.40M60.30 539.60L60.30 558.40M60.30 558.40L200.20 558.40M200.20 539.60L200.20 558.40M200.20 558.40L219.20 558.40M219.20 539.60L219.20 558.40M219.20 558.40L241.50 558.40M241.50 539.60L241.50 558.40M241.50 558.40L260.60 558.40M260.60 539.60L260.60 558.40M260.60 558.40L279.50 558.40M279.50 539.60L279.50 558.40M279.50 558.40L298.60 558.40M298.60 539.60L298.60 558.40M298.60 558.40L317.50 558.40M317.50 539.60L317.50 558.40M317.50 558.40L336.20 558.40M336.20 539.60L336.20 558.40M336.20 558.40L355.30 558.40M355.30 539.60L355.30 558.40M355.30 558.40L373.90 558.40M373.90 539.60L373.90 558.40M373.90 558.40L392.70 558.40M392.70 539.60L392.70 558.40M392.70 558.40L411.50 558.40M411.50 539.60L411.50 558.40M411.50 558.40L430.60 558.40M430.60 539.60L430.60 558.40M430.60 558.40L449.40 558.40M449.40 539.60L449.40 558.40M449.40 558.40L468.60 558.40M468.60 539.60L468.60 558.40M468.60 558.40L487.40 558.40M487.40 539.60L487.40 558.40M487.40 558.40L506.40 558.40M506.40 539.60L506.40 558.40M506.40 558.40L525.30 558.40M525.30 539.60L525.30 558.40M525.30 558.40L544.00 558.40M544.00 539.60L544.00 558.40M544.00 558.40L562.70 558.40M562.70 539.60L562.70 558.40M562.70 558.40L581.50 558.40M581.50 539.60L581.50 558.40M581.50 558.40L600.40 558.40M600.40 539.60L600.40 558.40M600.40 558.40L619.40 558.40M619.40 539.60L619.40 558.40M619.40 558.40L638.50 558.40M638.50 539.60L638.50 558.40M638.50 558.40L657.40 558.40M657.40 539.60L657.40 558.40M657.40 558.40L676.20 558.40M676.20 539.60L676.20 558.40M676.20 558.40L695.20 558.40M695.20 539.60L695.20 558.40M695.20 558.40L714.20 558.40M714.20 539.60L714.20 558.40M714.20 558.40L733.00 558.40M733.00 539.60L733.00 558.40M733.00 558.40L751.40 558.40M751.40 539.60L751.40 558.40M751.40 558.40L770.40 558.40M770.40 539.60L770.40 558.40M770.40 558.40L789.40 558.40M789.40 539.60L789.40 558.40M789.40 558.40L808.40 558.40M808.40 539.60L808.40 558.40M808.40 558.40L827.30 558.40M827.30 539.60L827.30 558.40M827.30 558.40L846.30 558.40M846.30 539.60L846.30 558.40M846.30 558.40L865.10 558.40M865.10 539.60L865.10 558.40M865.10 558.40L884.00 558.40M884.00 539.60L884.00 558.40M884.00 558.40L903.00 558.40M903.00 539.60L903.00 558.40M903.00 558.40L921.70 558.40M921.70 539.60L921.70 558.40M921.70 558.40L940.50 558.40M940.50 539.60L940.50 558.40M940.50 558.40L959.50 558.40M959.50 539.60L959.50 558.40M959.50 558.40L978.50 558.40M978.50 539.60L978.50 558.40M978.50 558.40L997.40 558.40M997.40 539.60L997.40 558.40M997.40 558.40L1016.40 558.40M1016.40 539.60L1016.40 558.40M1016.40 558.40L1035.20 558.40M1035.20 539.60L1035.20 558.40M1035.20 558.40L1054.00 558.40M1054.00 539.60L1054.00 558.40M1054.00 558.40L1072.60 558.40M1072.60 539.60L1072.60 558.40M1072.60 558.40L1091.80 558.40M1091.80 539.60L1091.80 558.40M37.40 577.00L60.30 577.00M37.40 558.40L37.40 577.00M60.30 558.40L60.30 577.00M60.30 577.00L200.20 577.00M200.20 558.40L200.20 577.00M200.20 577.00L219.20 577.00M219.20 558.40L219.20 577.00M219.20 577.00L241.50 577.00M241.50 558.40L241.50 577.00M241.50 577.00L260.60 577.00M260.60 558.40L260.60 577.00M260.60 577.00L279.50 577.00M279.50 558.40L279.50 577.00M279.50 577.00L298.60 577.00M298.60 558.40L298.60 577.00M298.60 577.00L317.50 577.00M317.50 558.40L317.50 577.00M317.50 577.00L336.20 577.00M336.20 558.40L336.20 577.00M336.20 577.00L355.30 577.00M355.30 558.40L355.30 577.00M355.30 577.00L373.90 577.00M373.90 558.40L373.90 577.00M373.90 577.00L392.70 577.00M392.70 558.40L392.70 577.00M392.70 577.00L411.50 577.00M411.50 558.40L411.50 577.00M411.50 577.00L430.60 577.00M430.60 558.40L430.60 577.00M430.60 577.00L449.40 577.00M449.40 558.40L449.40 577.00M449.40 577.00L468.60 577.00M468.60 558.40L468.60 577.00M468.60 577.00L487.40 577.00M487.40 558.40L487.40 577.00M487.40 577.00L506.40 577.00M506.40 558.40L506.40 577.00M506.40 577.00L525.30 577.00M525.30 558.40L525.30 577.00M525.30 577.00L544.00 577.00M544.00 558.40L544.00 577.00M544.00 577.00L562.70 577.00M562.70 558.40L562.70 577.00M562.70 577.00L581.50 577.00M581.50 558.40L581.50 577.00M581.50 577.00L600.40 577.00M600.40 558.40L600.40 577.00M600.40 577.00L619.40 577.00M619.40 558.40L619.40 577.00M619.40 577.00L638.50 577.00M638.50 558.40L638.50 577.00M638.50 577.00L657.40 577.00M657.40 558.40L657.40 577.00M657.40 577.00L676.20 577.00M676.20 558.40L676.20 577.00M676.20 577.00L695.20 577.00M695.20 558.40L695.20 577.00M695.20 577.00L714.20 577.00M714.20 558.40L714.20 577.00M714.20 577.00L733.00 577.00M733.00 558.40L733.00 577.00M733.00 577.00L751.40 577.00M751.40 558.40L751.40 577.00M751.40 577.00L770.40 577.00M770.40 558.40L770.40 577.00M770.40 577.00L789.40 577.00M789.40 558.40L789.40 577.00M789.40 577.00L808.40 577.00M808.40 558.40L808.40 577.00M808.40 577.00L827.30 577.00M827.30 558.40L827.30 577.00M827.30 577.00L846.30 577.00M846.30 558.40L846.30 577.00M846.30 577.00L865.10 577.00M865.10 558.40L865.10 577.00M865.10 577.00L884.00 577.00M884.00 558.40L884.00 577.00M884.00 577.00L903.00 577.00M903.00 558.40L903.00 577.00M903.00 577.00L921.70 577.00M921.70 558.40L921.70 577.00M921.70 577.00L940.50 577.00M940.50 558.40L940.50 577.00M940.50 577.00L959.50 577.00M959.50 558.40L959.50 577.00M959.50 577.00L978.50 577.00M978.50 558.40L978.50 577.00M978.50 577.00L997.40 577.00M997.40 558.40L997.40 577.00M997.40 577.00L1016.40 577.00M1016.40 558.40L1016.40 577.00M1016.40 577.00L1035.20 577.00M1035.20 558.40L1035.20 577.00M1035.20 577.00L1054.00 577.00M1054.00 558.40L1054.00 577.00M1054.00 577.00L1072.60 577.00M1072.60 558.40L1072.60 577.00M1072.60 577.00L1091.80 577.00M1091.80 558.40L1091.80 577.00M37.40 602.80L60.30 602.80M37.40 577.00L37.40 602.80M60.30 577.00L60.30 602.80M60.30 602.80L200.20 602.80M200.20 577.00L200.20 602.80M200.20 602.80L219.20 602.80M219.20 577.00L219.20 602.80M219.20 602.80L241.50 602.80M241.50 577.00L241.50 602.80M241.50 602.80L260.60 602.80M260.60 577.00L260.60 602.80M260.60 602.80L279.50 602.80M279.50 577.00L279.50 602.80M279.50 602.80L298.60 602.80M298.60 577.00L298.60 602.80M298.60 602.80L317.50 602.80M317.50 577.00L317.50 602.80M317.50 602.80L336.20 602.80M336.20 577.00L336.20 602.80M336.20 602.80L355.30 602.80M355.30 577.00L355.30 602.80M355.30 602.80L373.90 602.80M373.90 577.00L373.90 602.80M373.90 602.80L392.70 602.80M392.70 577.00L392.70 602.80M392.70 602.80L411.50 602.80M411.50 577.00L411.50 602.80M411.50 602.80L430.60 602.80M430.60 577.00L430.60 602.80M430.60 602.80L449.40 602.80M449.40 577.00L449.40 602.80M449.40 602.80L468.60 602.80M468.60 577.00L468.60 602.80M468.60 602.80L487.40 602.80M487.40 577.00L487.40 602.80M487.40 602.80L506.40 602.80M506.40 577.00L506.40 602.80M506.40 602.80L525.30 602.80M525.30 577.00L525.30 602.80M525.30 602.80L544.00 602.80M544.00 577.00L544.00 602.80M544.00 602.80L562.70 602.80M562.70 577.00L562.70 602.80M562.70 602.80L581.50 602.80M581.50 577.00L581.50 602.80M581.50 602.80L600.40 602.80M600.40 577.00L600.40 602.80M600.40 602.80L619.40 602.80M619.40 577.00L619.40 602.80M619.40 602.80L638.50 602.80M638.50 577.00L638.50 602.80M638.50 602.80L657.40 602.80M657.40 577.00L657.40 602.80M657.40 602.80L676.20 602.80M676.20 577.00L676.20 602.80M676.20 602.80L695.20 602.80M695.20 577.00L695.20 602.80M695.20 602.80L714.20 602.80M714.20 577.00L714.20 602.80M714.20 602.80L733.00 602.80M733.00 577.00L733.00 602.80M733.00 602.80L751.40 602.80M751.40 577.00L751.40 602.80M751.40 602.80L770.40 602.80M770.40 577.00L770.40 602.80M770.40 602.80L789.40 602.80M789.40 577.00L789.40 602.80M789.40 602.80L808.40 602.80M808.40 577.00L808.40 602.80M808.40 602.80L827.30 602.80M827.30 577.00L827.30 602.80M827.30 602.80L846.30 602.80M846.30 577.00L846.30 602.80M846.30 602.80L865.10 602.80M865.10 577.00L865.10 602.80M865.10 602.80L884.00 602.80M884.00 577.00L884.00 602.80M884.00 602.80L903.00 602.80M903.00 577.00L903.00 602.80M903.00 602.80L921.70 602.80M921.70 577.00L921.70 602.80M921.70 602.80L940.50 602.80M940.50 577.00L940.50 602.80M940.50 602.80L959.50 602.80M959.50 577.00L959.50 602.80M959.50 602.80L978.50 602.80M978.50 577.00L978.50 602.80M978.50 602.80L997.40 602.80M997.40 577.00L997.40 602.80M997.40 602.80L1016.40 602.80M1016.40 577.00L1016.40 602.80M1016.40 602.80L1035.20 602.80M1035.20 577.00L1035.20 602.80M1035.20 602.80L1054.00 602.80M1054.00 577.00L1054.00 602.80M1054.00 602.80L1072.60 602.80M1072.60 577.00L1072.60 602.80M1072.60 602.80L1091.80 602.80M1091.80 577.00L1091.80 602.80M37.40 640.60L60.30 640.60M37.40 602.80L37.40 640.60M60.30 602.80L60.30 640.60M60.30 640.60L200.20 640.60M200.20 602.80L200.20 640.60M200.20 640.60L219.20 640.60M219.20 602.80L219.20 640.60M219.20 640.60L241.50 640.60M241.50 602.80L241.50 640.60M241.50 640.60L260.60 640.60M260.60 602.80L260.60 640.60M260.60 640.60L279.50 640.60M279.50 602.80L279.50 640.60M279.50 640.60L298.60 640.60M298.60 602.80L298.60 640.60M298.60 640.60L317.50 640.60M317.50 602.80L317.50 640.60M317.50 640.60L336.20 640.60M336.20 602.80L336.20 640.60M336.20 640.60L355.30 640.60M355.30 602.80L355.30 640.60M355.30 640.60L373.90 640.60M373.90 602.80L373.90 640.60M373.90 640.60L392.70 640.60M392.70 602.80L392.70 640.60M392.70 640.60L411.50 640.60M411.50 602.80L411.50 640.60M411.50 640.60L430.60 640.60M430.60 602.80L430.60 640.60M430.60 640.60L449.40 640.60M449.40 602.80L449.40 640.60M449.40 640.60L468.60 640.60M468.60 602.80L468.60 640.60M468.60 640.60L487.40 640.60M487.40 602.80L487.40 640.60M487.40 640.60L506.40 640.60M506.40 602.80L506.40 640.60M506.40 640.60L525.30 640.60M525.30 602.80L525.30 640.60M525.30 640.60L544.00 640.60M544.00 602.80L544.00 640.60M544.00 640.60L562.70 640.60M562.70 602.80L562.70 640.60M562.70 640.60L581.50 640.60M581.50 602.80L581.50 640.60M581.50 640.60L600.40 640.60M600.40 602.80L600.40 640.60M600.40 640.60L619.40 640.60M619.40 602.80L619.40 640.60M619.40 640.60L638.50 640.60M638.50 602.80L638.50 640.60M638.50 640.60L657.40 640.60M657.40 602.80L657.40 640.60M657.40 640.60L676.20 640.60M676.20 602.80L676.20 640.60M676.20 640.60L695.20 640.60M695.20 602.80L695.20 640.60M695.20 640.60L714.20 640.60M714.20 602.80L714.20 640.60M714.20 640.60L733.00 640.60M733.00 602.80L733.00 640.60M733.00 640.60L751.40 640.60M751.40 602.80L751.40 640.60M751.40 640.60L770.40 640.60M770.40 602.80L770.40 640.60M770.40 640.60L789.40 640.60M789.40 602.80L789.40 640.60M789.40 640.60L808.40 640.60M808.40 602.80L808.40 640.60M808.40 640.60L827.30 640.60M827.30 602.80L827.30 640.60M827.30 640.60L846.30 640.60M846.30 602.80L846.30 640.60M846.30 640.60L865.10 640.60M865.10 602.80L865.10 640.60M865.10 640.60L884.00 640.60M884.00 602.80L884.00 640.60M884.00 640.60L903.00 640.60M903.00 602.80L903.00 640.60M903.00 640.60L921.70 640.60M921.70 602.80L921.70 640.60M921.70 640.60L940.50 640.60M940.50 602.80L940.50 640.60M940.50 640.60L959.50 640.60M959.50 602.80L959.50 640.60M959.50 640.60L978.50 640.60M978.50 602.80L978.50 640.60M978.50 640.60L997.40 640.60M997.40 602.80L997.40 640.60M997.40 640.60L1016.40 640.60M1016.40 602.80L1016.40 640.60M1016.40 640.60L1035.20 640.60M1035.20 602.80L1035.20 640.60M1035.20 640.60L1054.00 640.60M1054.00 602.80L1054.00 640.60M1054.00 640.60L1072.60 640.60M1072.60 602.80L1072.60 640.60M1072.60 640.60L1091.80 640.60M1091.80 602.80L1091.80 640.60M37.40 659.30L60.30 659.30M37.40 640.60L37.40 659.30M60.30 640.60L60.30 659.30M60.30 659.30L200.20 659.30M200.20 640.60L200.20 659.30M200.20 659.30L219.20 659.30M219.20 640.60L219.20 659.30M219.20 659.30L241.50 659.30M241.50 640.60L241.50 659.30M241.50 659.30L260.60 659.30M260.60 640.60L260.60 659.30M260.60 659.30L279.50 659.30M279.50 640.60L279.50 659.30M279.50 659.30L298.60 659.30M298.60 640.60L298.60 659.30M298.60 659.30L317.50 659.30M317.50 640.60L317.50 659.30M317.50 659.30L336.20 659.30M336.20 640.60L336.20 659.30M336.20 659.30L355.30 659.30M355.30 640.60L355.30 659.30M355.30 659.30L373.90 659.30M373.90 640.60L373.90 659.30M373.90 659.30L392.70 659.30M392.70 640.60L392.70 659.30M392.70 659.30L411.50 659.30M411.50 640.60L411.50 659.30M411.50 659.30L430.60 659.30M430.60 640.60L430.60 659.30M430.60 659.30L449.40 659.30M449.40 640.60L449.40 659.30M449.40 659.30L468.60 659.30M468.60 640.60L468.60 659.30M468.60 659.30L487.40 659.30M487.40 640.60L487.40 659.30M487.40 659.30L506.40 659.30M506.40 640.60L506.40 659.30M506.40 659.30L525.30 659.30M525.30 640.60L525.30 659.30M525.30 659.30L544.00 659.30M544.00 640.60L544.00 659.30M544.00 659.30L562.70 659.30M562.70 640.60L562.70 659.30M562.70 659.30L581.50 659.30M581.50 640.60L581.50 659.30M581.50 659.30L600.40 659.30M600.40 640.60L600.40 659.30M600.40 659.30L619.40 659.30M619.40 640.60L619.40 659.30M619.40 659.30L638.50 659.30M638.50 640.60L638.50 659.30M638.50 659.30L657.40 659.30M657.40 640.60L657.40 659.30M657.40 659.30L676.20 659.30M676.20 640.60L676.20 659.30M676.20 659.30L695.20 659.30M695.20 640.60L695.20 659.30M695.20 659.30L714.20 659.30M714.20 640.60L714.20 659.30M714.20 659.30L733.00 659.30M733.00 640.60L733.00 659.30M733.00 659.30L751.40 659.30M751.40 640.60L751.40 659.30M751.40 659.30L770.40 659.30M770.40 640.60L770.40 659.30M770.40 659.30L789.40 659.30M789.40 640.60L789.40 659.30M789.40 659.30L808.40 659.30M808.40 640.60L808.40 659.30M808.40 659.30L827.30 659.30M827.30 640.60L827.30 659.30M827.30 659.30L846.30 659.30M846.30 640.60L846.30 659.30M846.30 659.30L865.10 659.30M865.10 640.60L865.10 659.30M865.10 659.30L884.00 659.30M884.00 640.60L884.00 659.30M884.00 659.30L903.00 659.30M903.00 640.60L903.00 659.30M903.00 659.30L921.70 659.30M921.70 640.60L921.70 659.30M921.70 659.30L940.50 659.30M940.50 640.60L940.50 659.30M940.50 659.30L959.50 659.30M959.50 640.60L959.50 659.30M959.50 659.30L978.50 659.30M978.50 640.60L978.50 659.30M978.50 659.30L997.40 659.30M997.40 640.60L997.40 659.30M997.40 659.30L1016.40 659.30M1016.40 640.60L1016.40 659.30M1016.40 659.30L1035.20 659.30M1035.20 640.60L1035.20 659.30M1035.20 659.30L1054.00 659.30M1054.00 640.60L1054.00 659.30M1054.00 659.30L1072.60 659.30M1072.60 640.60L1072.60 659.30M1072.60 659.30L1091.80 659.30M1091.80 640.60L1091.80 659.30M37.40 678.50L60.30 678.50M37.40 659.30L37.40 678.50M60.30 659.30L60.30 678.50M60.30 678.50L200.20 678.50M200.20 659.30L200.20 678.50M200.20 678.50L219.20 678.50M219.20 659.30L219.20 678.50M219.20 678.50L241.50 678.50M241.50 659.30L241.50 678.50M241.50 678.50L260.60 678.50M260.60 659.30L260.60 678.50M260.60 678.50L279.50 678.50M279.50 659.30L279.50 678.50M279.50 678.50L298.60 678.50M298.60 659.30L298.60 678.50M298.60 678.50L317.50 678.50M317.50 659.30L317.50 678.50M317.50 678.50L336.20 678.50M336.20 659.30L336.20 678.50M336.20 678.50L355.30 678.50M355.30 659.30L355.30 678.50M355.30 678.50L373.90 678.50M373.90 659.30L373.90 678.50M373.90 678.50L392.70 678.50M392.70 659.30L392.70 678.50M392.70 678.50L411.50 678.50M411.50 659.30L411.50 678.50M411.50 678.50L430.60 678.50M430.60 659.30L430.60 678.50M430.60 678.50L449.40 678.50M449.40 659.30L449.40 678.50M449.40 678.50L468.60 678.50M468.60 659.30L468.60 678.50M468.60 678.50L487.40 678.50M487.40 659.30L487.40 678.50M487.40 678.50L506.40 678.50M506.40 659.30L506.40 678.50M506.40 678.50L525.30 678.50M525.30 659.30L525.30 678.50M525.30 678.50L544.00 678.50M544.00 659.30L544.00 678.50M544.00 678.50L562.70 678.50M562.70 659.30L562.70 678.50M562.70 678.50L581.50 678.50M581.50 659.30L581.50 678.50M581.50 678.50L600.40 678.50M600.40 659.30L600.40 678.50M600.40 678.50L619.40 678.50M619.40 659.30L619.40 678.50M619.40 678.50L638.50 678.50M638.50 659.30L638.50 678.50M638.50 678.50L657.40 678.50M657.40 659.30L657.40 678.50M657.40 678.50L676.20 678.50M676.20 659.30L676.20 678.50M676.20 678.50L695.20 678.50M695.20 659.30L695.20 678.50M695.20 678.50L714.20 678.50M714.20 659.30L714.20 678.50M714.20 678.50L733.00 678.50M733.00 659.30L733.00 678.50M733.00 678.50L751.40 678.50M751.40 659.30L751.40 678.50M751.40 678.50L770.40 678.50M770.40 659.30L770.40 678.50M770.40 678.50L789.40 678.50M789.40 659.30L789.40 678.50M789.40 678.50L808.40 678.50M808.40 659.30L808.40 678.50M808.40 678.50L827.30 678.50M827.30 659.30L827.30 678.50M827.30 678.50L846.30 678.50M846.30 659.30L846.30 678.50M846.30 678.50L865.10 678.50M865.10 659.30L865.10 678.50M865.10 678.50L884.00 678.50M884.00 659.30L884.00 678.50M884.00 678.50L903.00 678.50M903.00 659.30L903.00 678.50M903.00 678.50L921.70 678.50M921.70 659.30L921.70 678.50M921.70 678.50L940.50 678.50M940.50 659.30L940.50 678.50M940.50 678.50L959.50 678.50M959.50 659.30L959.50 678.50M959.50 678.50L978.50 678.50M978.50 659.30L978.50 678.50M978.50 678.50L997.40 678.50M997.40 659.30L997.40 678.50M997.40 678.50L1016.40 678.50M1016.40 659.30L1016.40 678.50M1016.40 678.50L1035.20 678.50M1035.20 659.30L1035.20 678.50M1035.20 678.50L1054.00 678.50M1054.00 659.30L1054.00 678.50M1054.00 678.50L1072.60 678.50M1072.60 659.30L1072.60 678.50M1072.60 678.50L1091.80 678.50M1091.80 659.30L1091.80 678.50M37.40 697.40L60.30 697.40M37.40 678.50L37.40 697.40M60.30 678.50L60.30 697.40M60.30 697.40L200.20 697.40M200.20 678.50L200.20 697.40M200.20 697.40L219.20 697.40M219.20 678.50L219.20 697.40M219.20 697.40L241.50 697.40M241.50 678.50L241.50 697.40M241.50 697.40L260.60 697.40M260.60 678.50L260.60 697.40M260.60 697.40L279.50 697.40M279.50 678.50L279.50 697.40M279.50 697.40L298.60 697.40M298.60 678.50L298.60 697.40M298.60 697.40L317.50 697.40M317.50 678.50L317.50 697.40M317.50 697.40L336.20 697.40M336.20 678.50L336.20 697.40M336.20 697.40L355.30 697.40M355.30 678.50L355.30 697.40M355.30 697.40L373.90 697.40M373.90 678.50L373.90 697.40M373.90 697.40L392.70 697.40M392.70 678.50L392.70 697.40M392.70 697.40L411.50 697.40M411.50 678.50L411.50 697.40M411.50 697.40L430.60 697.40M430.60 678.50L430.60 697.40M430.60 697.40L449.40 697.40M449.40 678.50L449.40 697.40M449.40 697.40L468.60 697.40M468.60 678.50L468.60 697.40M468.60 697.40L487.40 697.40M487.40 678.50L487.40 697.40M487.40 697.40L506.40 697.40M506.40 678.50L506.40 697.40M506.40 697.40L525.30 697.40M525.30 678.50L525.30 697.40M525.30 697.40L544.00 697.40M544.00 678.50L544.00 697.40M544.00 697.40L562.70 697.40M562.70 678.50L562.70 697.40M562.70 697.40L581.50 697.40M581.50 678.50L581.50 697.40M581.50 697.40L600.40 697.40M600.40 678.50L600.40 697.40M600.40 697.40L619.40 697.40M619.40 678.50L619.40 697.40M619.40 697.40L638.50 697.40M638.50 678.50L638.50 697.40M638.50 697.40L657.40 697.40M657.40 678.50L657.40 697.40M657.40 697.40L676.20 697.40M676.20 678.50L676.20 697.40M676.20 697.40L695.20 697.40M695.20 678.50L695.20 697.40M695.20 697.40L714.20 697.40M714.20 678.50L714.20 697.40M714.20 697.40L733.00 697.40M733.00 678.50L733.00 697.40M733.00 697.40L751.40 697.40M751.40 678.50L751.40 697.40M751.40 697.40L770.40 697.40M770.40 678.50L770.40 697.40M770.40 697.40L789.40 697.40M789.40 678.50L789.40 697.40M789.40 697.40L808.40 697.40M808.40 678.50L808.40 697.40M808.40 697.40L827.30 697.40M827.30 678.50L827.30 697.40M827.30 697.40L846.30 697.40M846.30 678.50L846.30 697.40M846.30 697.40L865.10 697.40M865.10 678.50L865.10 697.40M865.10 697.40L884.00 697.40M884.00 678.50L884.00 697.40M884.00 697.40L903.00 697.40M903.00 678.50L903.00 697.40M903.00 697.40L921.70 697.40M921.70 678.50L921.70 697.40M921.70 697.40L940.50 697.40M940.50 678.50L940.50 697.40M940.50 697.40L959.50 697.40M959.50 678.50L959.50 697.40M959.50 697.40L978.50 697.40M978.50 678.50L978.50 697.40M978.50 697.40L997.40 697.40M997.40 678.50L997.40 697.40M997.40 697.40L1016.40 697.40M1016.40 678.50L1016.40 697.40M1016.40 697.40L1035.20 697.40M1035.20 678.50L1035.20 697.40M1035.20 697.40L1054.00 697.40M1054.00 678.50L1054.00 697.40M1054.00 697.40L1072.60 697.40M1072.60 678.50L1072.60 697.40M1072.60 697.40L1091.80 697.40M1091.80 678.50L1091.80 697.40M37.40 723.40L60.30 723.40M37.40 697.40L37.40 723.40M60.30 697.40L60.30 723.40M60.30 723.40L200.20 723.40M200.20 697.40L200.20 723.40M200.20 723.40L219.20 723.40M219.20 697.40L219.20 723.40M219.20 723.40L241.50 723.40M241.50 697.40L241.50 723.40M241.50 723.40L260.60 723.40M260.60 697.40L260.60 723.40M260.60 723.40L279.50 723.40M279.50 697.40L279.50 723.40M279.50 723.40L298.60 723.40M298.60 697.40L298.60 723.40M298.60 723.40L317.50 723.40M317.50 697.40L317.50 723.40M317.50 723.40L336.20 723.40M336.20 697.40L336.20 723.40M336.20 723.40L355.30 723.40M355.30 697.40L355.30 723.40M355.30 723.40L373.90 723.40M373.90 697.40L373.90 723.40M373.90 723.40L392.70 723.40M392.70 697.40L392.70 723.40M392.70 723.40L411.50 723.40M411.50 697.40L411.50 723.40M411.50 723.40L430.60 723.40M430.60 697.40L430.60 723.40M430.60 723.40L449.40 723.40M449.40 697.40L449.40 723.40M449.40 723.40L468.60 723.40M468.60 697.40L468.60 723.40M468.60 723.40L487.40 723.40M487.40 697.40L487.40 723.40M487.40 723.40L506.40 723.40M506.40 697.40L506.40 723.40M506.40 723.40L525.30 723.40M525.30 697.40L525.30 723.40M525.30 723.40L544.00 723.40M544.00 697.40L544.00 723.40M544.00 723.40L562.70 723.40M562.70 697.40L562.70 723.40M562.70 723.40L581.50 723.40M581.50 697.40L581.50 723.40M581.50 723.40L600.40 723.40M600.40 697.40L600.40 723.40M600.40 723.40L619.40 723.40M619.40 697.40L619.40 723.40M619.40 723.40L638.50 723.40M638.50 697.40L638.50 723.40M638.50 723.40L657.40 723.40M657.40 697.40L657.40 723.40M657.40 723.40L676.20 723.40M676.20 697.40L676.20 723.40M676.20 723.40L695.20 723.40M695.20 697.40L695.20 723.40M695.20 723.40L714.20 723.40M714.20 697.40L714.20 723.40M714.20 723.40L733.00 723.40M733.00 697.40L733.00 723.40M733.00 723.40L751.40 723.40M751.40 697.40L751.40 723.40M751.40 723.40L770.40 723.40M770.40 697.40L770.40 723.40M770.40 723.40L789.40 723.40M789.40 697.40L789.40 723.40M789.40 723.40L808.40 723.40M808.40 697.40L808.40 723.40M808.40 723.40L827.30 723.40M827.30 697.40L827.30 723.40M827.30 723.40L846.30 723.40M846.30 697.40L846.30 723.40M846.30 723.40L865.10 723.40M865.10 697.40L865.10 723.40M865.10 723.40L884.00 723.40M884.00 697.40L884.00 723.40M884.00 723.40L903.00 723.40M903.00 697.40L903.00 723.40M903.00 723.40L921.70 723.40M921.70 697.40L921.70 723.40M921.70 723.40L940.50 723.40M940.50 697.40L940.50 723.40M940.50 723.40L959.50 723.40M959.50 697.40L959.50 723.40M959.50 723.40L978.50 723.40M978.50 697.40L978.50 723.40M978.50 723.40L997.40 723.40M997.40 697.40L997.40 723.40M997.40 723.40L1016.40 723.40M1016.40 697.40L1016.40 723.40M1016.40 723.40L1035.20 723.40M1035.20 697.40L1035.20 723.40M1035.20 723.40L1054.00 723.40M1054.00 697.40L1054.00 723.40M1054.00 723.40L1072.60 723.40M1072.60 697.40L1072.60 723.40M1072.60 723.40L1091.80 723.40M1091.80 697.40L1091.80 723.40" stroke="#000" stroke-width="1.25" fill="none"/></svg><div class="hc" style="left:37.40px;top:147.30px;width:22.90px;height:196.30px"><span>Số<br>TT</span></div><div class="hc" style="left:60.30px;top:147.30px;width:139.90px;height:196.30px"><span>Đơn vị hành chính<br>(Chức danh)</span></div><div class="hc" style="left:200.20px;top:147.30px;width:19.00px;height:196.30px"><span class="rot">Tổng số định biên được giao</span></div><div class="hc" style="left:219.20px;top:147.30px;width:22.30px;height:196.30px"><span class="rot">Đã bố trí</span></div><div class="hc" style="left:241.50px;top:147.30px;width:19.10px;height:196.30px"><span class="rot">Hiện còn thiếu</span></div><div class="hc" style="left:260.60px;top:147.30px;width:38.00px;height:33.90px"><span>Kiêm<br>nhiệm</span></div><div class="hc" style="left:298.60px;top:147.30px;width:75.30px;height:33.90px"><span>Trong đó</span></div><div class="hc" style="left:373.90px;top:147.30px;width:566.60px;height:33.90px"><span>Chia theo trình độ</span></div><div class="hc" style="left:940.50px;top:147.30px;width:132.10px;height:33.90px"><span>Chia theo độ tuổi</span></div><div class="hc" style="left:1072.60px;top:147.30px;width:19.20px;height:196.30px"><span class="rot" style="font-size:11.4px;letter-spacing:.08px">Công chức luân chuyển từ cấp huyện</span></div><div class="hc" style="left:260.60px;top:181.20px;width:18.90px;height:162.40px"><span class="rot">Số lượng</span></div><div class="hc" style="left:279.50px;top:181.20px;width:19.10px;height:162.40px"><span class="rot">Mã chức vụ</span></div><div class="hc" style="left:298.60px;top:181.20px;width:18.90px;height:162.40px"><span class="rot">Nữ</span></div><div class="hc" style="left:317.50px;top:181.20px;width:18.70px;height:162.40px"><span class="rot">Đảng viên</span></div><div class="hc" style="left:336.20px;top:181.20px;width:19.10px;height:162.40px"><span class="rot">Dân tộc thiểu số</span></div><div class="hc" style="left:355.30px;top:181.20px;width:18.60px;height:162.40px"><span class="rot">Tôn giáo</span></div><div class="hc" style="left:373.90px;top:181.20px;width:132.50px;height:34.10px"><span>Chuyên môn nghiệp vụ</span></div><div class="hc" style="left:506.40px;top:181.20px;width:56.30px;height:34.10px"><span>Học vấn<br>phổ thông</span></div><div class="hc" style="left:562.70px;top:181.20px;width:94.70px;height:34.10px"><span>Chính trị</span></div><div class="hc" style="left:657.40px;top:181.20px;width:56.80px;height:34.10px"><span>Tin học</span></div><div class="hc" style="left:714.20px;top:181.20px;width:113.10px;height:34.10px"><span>Ngoại ngữ</span></div><div class="hc" style="left:827.30px;top:181.20px;width:19.00px;height:162.40px"><span class="rot">Chứng chỉ tiếng dân tộc</span></div><div class="hc" style="left:846.30px;top:181.20px;width:18.80px;height:162.40px"><span class="rot">Bồi dưỡng ANQP</span></div><div class="hc" style="left:865.10px;top:181.20px;width:75.40px;height:34.10px"><span>QLNN</span></div><div class="hc" style="left:940.50px;top:181.20px;width:19.00px;height:162.40px"><span class="rot">Từ 30 trở xuống</span></div><div class="hc" style="left:959.50px;top:181.20px;width:19.00px;height:162.40px"><span class="rot">Từ 31 đến 40</span></div><div class="hc" style="left:978.50px;top:181.20px;width:18.90px;height:162.40px"><span class="rot">Từ 41 đến 50</span></div><div class="hc" style="left:997.40px;top:181.20px;width:56.60px;height:34.10px"><span>Từ 51 đến<br>60</span></div><div class="hc" style="left:1054.00px;top:181.20px;width:18.60px;height:162.40px"><span class="rot" style="font-size:11.3px;letter-spacing:.2px">Trên tuổi nghỉ hưu</span></div><div class="hc" style="left:373.90px;top:215.30px;width:18.80px;height:128.30px"><span class="rot">Tiến sĩ</span></div><div class="hc" style="left:392.70px;top:215.30px;width:18.80px;height:128.30px"><span class="rot">Thạc sĩ</span></div><div class="hc" style="left:411.50px;top:215.30px;width:19.10px;height:128.30px"><span class="rot">Đại học</span></div><div class="hc" style="left:430.60px;top:215.30px;width:18.80px;height:128.30px"><span class="rot">Cao đẳng</span></div><div class="hc" style="left:449.40px;top:215.30px;width:19.20px;height:128.30px"><span class="rot">Trung cấp</span></div><div class="hc" style="left:468.60px;top:215.30px;width:18.80px;height:128.30px"><span class="rot">Sơ cấp</span></div><div class="hc" style="left:487.40px;top:215.30px;width:19.00px;height:128.30px"><span class="rot">Chưa đào tạo</span></div><div class="hc" style="left:506.40px;top:215.30px;width:18.90px;height:128.30px"><span class="rot">Trung học phổ thông</span></div><div class="hc" style="left:525.30px;top:215.30px;width:18.70px;height:128.30px"><span class="rot">Trung học cơ sở</span></div><div class="hc" style="left:544.00px;top:215.30px;width:18.70px;height:128.30px"><span class="rot">Tiểu học</span></div><div class="hc" style="left:562.70px;top:215.30px;width:18.80px;height:128.30px"><span class="rot">Cử nhân</span></div><div class="hc" style="left:581.50px;top:215.30px;width:18.90px;height:128.30px"><span class="rot">Cao cấp lý luận chính trị</span></div><div class="hc" style="left:600.40px;top:215.30px;width:19.00px;height:128.30px"><span class="rot">Trung cấp</span></div><div class="hc" style="left:619.40px;top:215.30px;width:19.10px;height:128.30px"><span class="rot">Sơ cấp</span></div><div class="hc" style="left:638.50px;top:215.30px;width:18.90px;height:128.30px"><span class="rot">Chưa đào tạo</span></div><div class="hc" style="left:657.40px;top:215.30px;width:18.80px;height:128.30px"><span class="rot">Trung cấp trở lên</span></div><div class="hc" style="left:676.20px;top:215.30px;width:19.00px;height:128.30px"><span class="rot">Chứng chỉ</span></div><div class="hc" style="left:695.20px;top:215.30px;width:19.00px;height:128.30px"><span class="rot">Chưa qua đào tạo</span></div><div class="hc" style="left:865.10px;top:215.30px;width:18.90px;height:128.30px"><span class="rot">Chuyên viên chính và TĐ</span></div><div class="hc" style="left:884.00px;top:215.30px;width:19.00px;height:128.30px"><span class="rot">Chuyên viên và TĐ</span></div><div class="hc" style="left:903.00px;top:215.30px;width:18.70px;height:128.30px"><span class="rot">Cơ sở</span></div><div class="hc" style="left:921.70px;top:215.30px;width:18.80px;height:128.30px"><span class="rot">Chưa qua đào tạo</span></div><div class="hc" style="left:997.40px;top:215.30px;width:19.00px;height:128.30px"><span class="rot" style="font-size:11.2px;letter-spacing:.6px">Tổng số</span></div><div class="hc" style="left:1016.40px;top:215.30px;width:18.80px;height:128.30px"><span class="rot" style="font-size:11.1px;letter-spacing:.15px">Nữ từ 51 đến 55</span></div><div class="hc" style="left:1035.20px;top:215.30px;width:18.80px;height:128.30px"><span class="rot" style="font-size:11.1px;letter-spacing:.2px">Nam từ 56 đến 60</span></div><div class="hc" style="left:714.20px;top:215.30px;width:56.20px;height:33.80px"><span>Tiếng<br>Anh</span></div><div class="hc" style="left:770.40px;top:215.30px;width:56.90px;height:33.80px"><span>Ngoại<br>ngữ khác</span></div><div class="hc" style="left:714.20px;top:249.10px;width:18.80px;height:94.50px"><span class="rot">Đại học trở lên</span></div><div class="hc" style="left:733.00px;top:249.10px;width:18.40px;height:94.50px"><span class="rot">Chứng chỉ (A,B,C)</span></div><div class="hc" style="left:751.40px;top:249.10px;width:19.00px;height:94.50px"><span class="rot">Chưa qua đào tạo</span></div><div class="hc" style="left:770.40px;top:249.10px;width:19.00px;height:94.50px"><span class="rot">Đại học trở lên</span></div><div class="hc" style="left:789.40px;top:249.10px;width:19.00px;height:94.50px"><span class="rot">Chứng chỉ (A,B,C)</span></div><div class="hc" style="left:808.40px;top:249.10px;width:18.90px;height:94.50px"><span class="rot">Chưa qua đào tạo</span></div><div class="nc" style="left:36.20px;top:342.60px;width:22.90px;height:18.70px">1</div><div class="nc" style="left:59.10px;top:342.60px;width:139.90px;height:18.70px">2</div><div class="nc" style="left:199.00px;top:342.60px;width:19.00px;height:18.70px">3</div><div class="nc" style="left:218.00px;top:342.60px;width:22.30px;height:18.70px">4</div><div class="nc" style="left:240.30px;top:342.60px;width:19.10px;height:18.70px">5</div><div class="nc" style="left:259.40px;top:342.60px;width:18.90px;height:18.70px">6</div><div class="nc" style="left:278.30px;top:342.60px;width:19.10px;height:18.70px">7</div><div class="nc" style="left:297.40px;top:342.60px;width:18.90px;height:18.70px">8</div><div class="nc" style="left:316.30px;top:342.60px;width:18.70px;height:18.70px">9</div><div class="nc" style="left:335.00px;top:342.60px;width:19.10px;height:18.70px">10</div><div class="nc" style="left:354.10px;top:342.60px;width:18.60px;height:18.70px">11</div><div class="nc" style="left:372.70px;top:342.60px;width:18.80px;height:18.70px">12</div><div class="nc" style="left:391.50px;top:342.60px;width:18.80px;height:18.70px">13</div><div class="nc" style="left:410.30px;top:342.60px;width:19.10px;height:18.70px">14</div><div class="nc" style="left:429.40px;top:342.60px;width:18.80px;height:18.70px">15</div><div class="nc" style="left:448.20px;top:342.60px;width:19.20px;height:18.70px">16</div><div class="nc" style="left:467.40px;top:342.60px;width:18.80px;height:18.70px">17</div><div class="nc" style="left:486.20px;top:342.60px;width:19.00px;height:18.70px">18</div><div class="nc" style="left:505.20px;top:342.60px;width:18.90px;height:18.70px">19</div><div class="nc" style="left:524.10px;top:342.60px;width:18.70px;height:18.70px">20</div><div class="nc" style="left:542.80px;top:342.60px;width:18.70px;height:18.70px">21</div><div class="nc" style="left:561.50px;top:342.60px;width:18.80px;height:18.70px">22</div><div class="nc" style="left:580.30px;top:342.60px;width:18.90px;height:18.70px">23</div><div class="nc" style="left:599.20px;top:342.60px;width:19.00px;height:18.70px">24</div><div class="nc" style="left:618.20px;top:342.60px;width:19.10px;height:18.70px">25</div><div class="nc" style="left:637.30px;top:342.60px;width:18.90px;height:18.70px">26</div><div class="nc" style="left:656.20px;top:342.60px;width:18.80px;height:18.70px">27</div><div class="nc" style="left:675.00px;top:342.60px;width:19.00px;height:18.70px">28</div><div class="nc" style="left:694.00px;top:342.60px;width:19.00px;height:18.70px">29</div><div class="nc" style="left:713.00px;top:342.60px;width:18.80px;height:18.70px">30</div><div class="nc" style="left:731.80px;top:342.60px;width:18.40px;height:18.70px">31</div><div class="nc" style="left:750.20px;top:342.60px;width:19.00px;height:18.70px">32</div><div class="nc" style="left:769.20px;top:342.60px;width:19.00px;height:18.70px">33</div><div class="nc" style="left:788.20px;top:342.60px;width:19.00px;height:18.70px">34</div><div class="nc" style="left:807.20px;top:342.60px;width:18.90px;height:18.70px">35</div><div class="nc" style="left:826.10px;top:342.60px;width:19.00px;height:18.70px">36</div><div class="nc" style="left:845.10px;top:342.60px;width:18.80px;height:18.70px">37</div><div class="nc" style="left:863.90px;top:342.60px;width:18.90px;height:18.70px">38</div><div class="nc" style="left:882.80px;top:342.60px;width:19.00px;height:18.70px">39</div><div class="nc" style="left:901.80px;top:342.60px;width:18.70px;height:18.70px">40</div><div class="nc" style="left:920.50px;top:342.60px;width:18.80px;height:18.70px">41</div><div class="nc" style="left:939.30px;top:342.60px;width:19.00px;height:18.70px">42</div><div class="nc" style="left:958.30px;top:342.60px;width:19.00px;height:18.70px">43</div><div class="nc" style="left:977.30px;top:342.60px;width:18.90px;height:18.70px">44</div><div class="nc" style="left:996.20px;top:342.60px;width:19.00px;height:18.70px">45</div><div class="nc" style="left:1015.20px;top:342.60px;width:18.80px;height:18.70px">46</div><div class="nc" style="left:1034.00px;top:342.60px;width:18.80px;height:18.70px">47</div><div class="nc" style="left:1052.80px;top:342.60px;width:18.60px;height:18.70px">48</div><div class="nc" style="left:1071.40px;top:342.60px;width:19.20px;height:18.70px">49</div><div class="rs" style="left:41.40px;top:362.30px;height:18.80px">UBND Thành phố</div><div class="rn rb" style="left:37.40px;top:380.30px;width:22.90px;height:19.10px">I</div><div class="rl rb" style="left:64.30px;top:380.10px;height:19.10px"><span>UBND Phường</span></div><div class="rl rb" style="left:64.30px;top:399.20px;height:19.00px"><span>Cán bộ</span></div><div class="rl rb" style="left:64.30px;top:418.20px;height:18.80px"><span>Công chức</span></div><div class="rl rb" style="left:64.30px;top:438.00px;height:25.80px"><span>Những người hoạt động<br>không chuyên trách cấp xã</span></div><div class="rl rb" style="left:64.30px;top:463.80px;height:37.60px"><span>Những người hoạt động<br>không chuyên trách ở thôn,<br>khu phố</span></div><div class="rn rb" style="left:37.40px;top:500.60px;width:22.90px;height:18.70px">II</div><div class="rl rb" style="left:64.30px;top:500.40px;height:18.70px"><span>UBND Phườn_</span></div><div class="on" style="left:219.20px;top:501.40px;width:22.30px;height:18.70px">1</div><div class="on" style="left:298.60px;top:501.40px;width:18.90px;height:18.70px">1</div><div class="on" style="left:411.50px;top:501.40px;width:19.10px;height:18.70px">1</div><div class="on" style="left:506.40px;top:501.40px;width:18.90px;height:18.70px">1</div><div class="on" style="left:638.50px;top:501.40px;width:18.90px;height:18.70px">1</div><div class="on" style="left:695.20px;top:501.40px;width:19.00px;height:18.70px">1</div><div class="on" style="left:751.40px;top:501.40px;width:19.00px;height:18.70px">1</div><div class="on" style="left:808.40px;top:501.40px;width:18.90px;height:18.70px">1</div><div class="on" style="left:921.70px;top:501.40px;width:18.80px;height:18.70px">1</div><div class="on" style="left:959.50px;top:501.40px;width:19.00px;height:18.70px">1</div><div class="rl rb" style="left:64.30px;top:519.10px;height:19.50px"><span>Cán bộ</span></div><div class="rl rb" style="left:64.30px;top:538.60px;height:18.80px"><span>Công chức</span></div><div class="on" style="left:219.20px;top:539.60px;width:22.30px;height:18.80px">1</div><div class="on" style="left:298.60px;top:539.60px;width:18.90px;height:18.80px">1</div><div class="on" style="left:411.50px;top:539.60px;width:19.10px;height:18.80px">1</div><div class="on" style="left:506.40px;top:539.60px;width:18.90px;height:18.80px">1</div><div class="on" style="left:638.50px;top:539.60px;width:18.90px;height:18.80px">1</div><div class="on" style="left:695.20px;top:539.60px;width:19.00px;height:18.80px">1</div><div class="on" style="left:751.40px;top:539.60px;width:19.00px;height:18.80px">1</div><div class="on" style="left:808.40px;top:539.60px;width:18.90px;height:18.80px">1</div><div class="on" style="left:921.70px;top:539.60px;width:18.80px;height:18.80px">1</div><div class="on" style="left:959.50px;top:539.60px;width:19.00px;height:18.80px">1</div><div class="rn rr" style="left:37.40px;top:557.60px;width:22.90px;height:18.60px">1</div><div class="rl rr" style="left:64.30px;top:557.40px;height:18.60px"><span>Khác</span></div><div class="onr" style="left:219.20px;top:558.40px;width:22.30px;height:18.60px">1</div><div class="onr" style="left:298.60px;top:558.40px;width:18.90px;height:18.60px">1</div><div class="onr" style="left:411.50px;top:558.40px;width:19.10px;height:18.60px">1</div><div class="onr" style="left:506.40px;top:558.40px;width:18.90px;height:18.60px">1</div><div class="onr" style="left:638.50px;top:558.40px;width:18.90px;height:18.60px">1</div><div class="onr" style="left:695.20px;top:558.40px;width:19.00px;height:18.60px">1</div><div class="onr" style="left:751.40px;top:558.40px;width:19.00px;height:18.60px">1</div><div class="onr" style="left:808.40px;top:558.40px;width:18.90px;height:18.60px">1</div><div class="onr" style="left:921.70px;top:558.40px;width:18.80px;height:18.60px">1</div><div class="onr" style="left:959.50px;top:558.40px;width:19.00px;height:18.60px">1</div><div class="rl rb" style="left:64.30px;top:577.00px;height:25.80px"><span>Những người hoạt động<br>không chuyên trách cấp xã</span></div><div class="rl rb" style="left:64.30px;top:602.80px;height:37.80px"><span>Những người hoạt động<br>không chuyên trách ở thôn,<br>khu phố</span></div><div class="rn rb" style="left:37.40px;top:639.80px;width:22.90px;height:18.70px">III</div><div class="rl rb" style="left:64.30px;top:639.60px;height:18.70px"><span>UBND Phường</span></div><div class="rl rb" style="left:64.30px;top:658.30px;height:19.20px"><span>Cán bộ</span></div><div class="rl rb" style="left:64.30px;top:677.50px;height:18.90px"><span>Công chức</span></div><div class="rl rb" style="left:64.30px;top:697.40px;height:26.00px"><span>Những người hoạt động<br>không chuyên trách cấp xã</span></div><div class="pt" style="left:42px;top:29px;font-size:14px">TỈNH</div><div class="pt b" style="left:42px;top:63.2px;font-size:14px">SỞ NỘI VỤ TỈNH</div><div class="pt b" style="left:504px;top:29.7px;font-size:15.33px">CỘNG HÒA XÃ HỘI CHỦ NGHĨA VIỆT NAM</div><div class="pt b" style="left:577px;top:53.2px;font-size:14px">Độc lập - Tự do - Hạnh phúc</div><div class="pt b" style="left:0;width:1122px;text-align:center;top:81.2px;font-size:15.33px;line-height:17px;padding-left:205px;box-sizing:border-box">THỐNG KÊ SỐ LƯỢNG, CHẤT LƯỢNG CÁN BỘ, CÔNG CHỨC, NHỮNG NGƯỜI HOẠT ĐỘNG<br>KHÔNG CHUYÊN TRÁCH CẤP XÃ VÀ Ở THÔN, KHU PHỐ<br>TỪ NGÀY 01/01/2021 ĐẾN NGÀY 31/12/2021</div><div class="pt" style="left:1058px;top:745.5px;font-size:13.5px">1</div><div style="position:absolute;left:581px;top:66.8px;width:167px;height:1.2px;background:#222"></div></div><div class="page" style="left:240px;top:810px;width:1122px;height:793px;box-shadow:0 4px 5px 0 rgba(0,0,0,.14),0 1px 10px 0 rgba(0,0,0,.12),0 2px 4px -1px rgba(0,0,0,.4)"></div></div><div class="sb" style="left:1903px"><div class="up"></div><div class="th" style="top:17px;height:17px"></div><div class="dn"></div></div></div></body></html>
